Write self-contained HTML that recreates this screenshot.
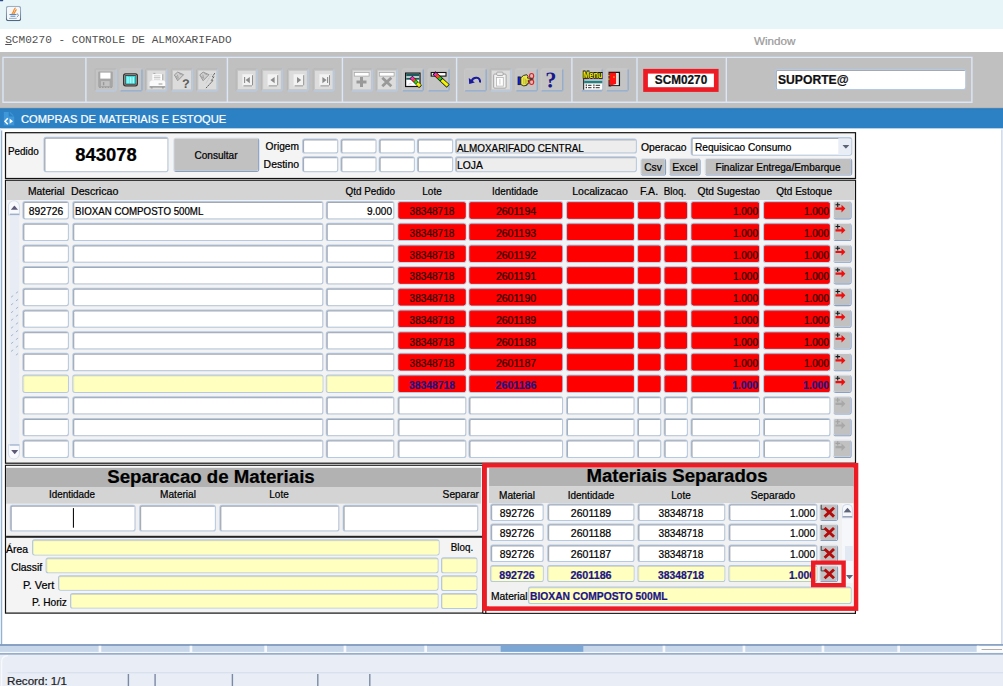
<!DOCTYPE html>
<html><head><meta charset="utf-8"><title>SCM0270</title>
<style>
html,body{margin:0;padding:0;}
body{width:1003px;height:686px;overflow:hidden;background:#fff;position:relative;font-family:"Liberation Sans",sans-serif;}
div,body>svg{position:absolute;box-sizing:border-box;}
body>svg{left:0;top:0;}
.t{height:20px;line-height:20px;white-space:nowrap;-webkit-text-stroke:0.22px currentColor;}
</style></head><body>
<svg width="1003" height="686" viewBox="0 0 1003 686">
<rect x="0" y="0" width="1003" height="29" fill="#e8f5f8"/>
<path d="M0 0H3.2V0.6A0.6 0.6 0 0 1 2.6 1.2H0V0Z" fill="#2a4a8a"/>
<svg x="5.8" y="5.8" width="15.4" height="15.4" viewBox="0 0 17 17"><defs><linearGradient id="jb" x1="0" y1="0" x2="0" y2="1"><stop offset="0" stop-color="#9db0c6"/><stop offset="1" stop-color="#4f6882"/></linearGradient></defs><rect x="0.6" y="0.6" width="15.8" height="15.8" rx="2.4" fill="#f7f7f7" stroke="url(#jb)" stroke-width="1.2"/><path d="M10.4 2.6C8 4.6 9.6 5.6 7 8.6M11.6 4.4C9.8 6 10.6 6.8 8.8 8.8" stroke="#ee8a2e" stroke-width="1.3" fill="none" stroke-linecap="round"/><path d="M4 9.6h7.8M5.2 11.5h5.4" stroke="#5a86b8" stroke-width="1.1"/><path d="M12.2 8.5l2 1.9-2 1.9" stroke="#5a86b8" stroke-width="1" fill="none"/><path d="M3.6 13.9h8.4" stroke="#7fa0c8" stroke-width="0.9"/></svg>
<rect x="0" y="29" width="1003" height="23" fill="#fff"/>
<rect x="0" y="52" width="1003" height="56.4" fill="#c0c0c0"/>
<rect x="0" y="107.4" width="1003" height="1.2" fill="#b0b0b2"/>
<path d="M3 57.4H971.9V102.2H3V57.4Z" fill="none" stroke="#dbe6f6" stroke-width="1.4"/>
<rect x="85.2" y="57" width="1.4" height="45.6" fill="#dbe6f6"/>
<rect x="226.7" y="57" width="1.4" height="45.6" fill="#dbe6f6"/>
<rect x="341.7" y="57" width="1.4" height="45.6" fill="#dbe6f6"/>
<rect x="455.9" y="57" width="1.4" height="45.6" fill="#dbe6f6"/>
<rect x="571.2" y="57" width="1.4" height="45.6" fill="#dbe6f6"/>
<rect x="636.3" y="57" width="1.4" height="45.6" fill="#dbe6f6"/>
<rect x="725.6" y="57" width="1.4" height="45.6" fill="#dbe6f6"/>
<path d="M97.1 68.5H114.2A2.5 2.5 0 0 1 116.7 71V89A2.5 2.5 0 0 1 114.2 91.5H97.1A2.5 2.5 0 0 1 94.6 89V71A2.5 2.5 0 0 1 97.1 68.5Z" fill="#c4c4c4"/>
<rect x="95.6" y="68.5" width="20.1" height="1" fill="#b3b3b3"/>
<rect x="94.6" y="69.5" width="1" height="21" fill="#b3b3b3"/>
<rect x="115.5" y="69.5" width="1.2" height="21" fill="#b7cbe6"/>
<rect x="95.6" y="90.3" width="20.1" height="1.2" fill="#b7cbe6"/>
<svg x="94.60" y="68.50" width="22.4" height="23" viewBox="0 0 22.4 23"><rect x="3.6" y="3.1" width="14.6" height="15.6" rx="1" fill="#a6a6a6"/><rect x="5.7" y="4.1" width="10.2" height="6" fill="#fff"/><rect x="6.4" y="12.6" width="8.6" height="5" fill="#c2c2c2"/><rect x="8.3" y="13.6" width="1.4" height="3.2" fill="#999"/><path d="M4.6 18.9h12.6" stroke="#8c8c8c" stroke-width="0.8" stroke-dasharray="1.6 1.2"/></svg>
<path d="M122.1 68.5H140.1A2.5 2.5 0 0 1 142.6 71V89A2.5 2.5 0 0 1 140.1 91.5H122.1A2.5 2.5 0 0 1 119.6 89V71A2.5 2.5 0 0 1 122.1 68.5Z" fill="#c4c4c4"/>
<rect x="120.6" y="68.5" width="21" height="1" fill="#c9c9c9"/>
<rect x="119.6" y="69.5" width="1" height="21" fill="#c9c9c9"/>
<rect x="141.3" y="69.5" width="1.3" height="21" fill="#8eabd0"/>
<rect x="120.6" y="90.2" width="21" height="1.3" fill="#8eabd0"/>
<svg x="119.60" y="68.50" width="22.4" height="23" viewBox="0 0 22.4 23"><rect x="3.4" y="4.7" width="15" height="13.2" rx="2.6" fill="#333"/><rect x="4.9" y="6.1" width="12" height="10.4" rx="1.4" fill="none" stroke="#b9a9a9" stroke-width="0.7"/><rect x="6" y="7.4" width="10" height="7.9" fill="#35dede"/><path d="M7.6 8v6.8M9.2 8.6v6.2M10.8 8.6v6.2M12.4 8.6v6.2M14 8.6v6.2" stroke="#d8ffff" stroke-width="0.8"/></svg>
<path d="M147.7 68.5H164.8A2.5 2.5 0 0 1 167.3 71V89A2.5 2.5 0 0 1 164.8 91.5H147.7A2.5 2.5 0 0 1 145.2 89V71A2.5 2.5 0 0 1 147.7 68.5Z" fill="#c4c4c4"/>
<rect x="146.2" y="68.5" width="20.1" height="1" fill="#b3b3b3"/>
<rect x="145.2" y="69.5" width="1" height="21" fill="#b3b3b3"/>
<rect x="166.1" y="69.5" width="1.2" height="21" fill="#b7cbe6"/>
<rect x="146.2" y="90.3" width="20.1" height="1.2" fill="#b7cbe6"/>
<rect x="147.4" y="70.6" width="18" height="18.8" fill="#dcdcdc"/>
<svg x="145.20" y="68.50" width="22.4" height="23" viewBox="0 0 22.4 23"><rect x="7.2" y="5.7" width="10.8" height="6.2" fill="#fff"/><path d="M17.6 5.7v6.4" stroke="#9a9a9a" stroke-width="1"/><path d="M8.6 7.4h6.6M8.6 9h6.6M8.6 10.6h6.6" stroke="#bdbdbd" stroke-width="0.8"/><path d="M8.2 4.9h2" stroke="#9a9a9a" stroke-width="0.8"/><path d="M6.2 12h12.6l1.2 1.6v4.4H4.4v-4.4z" fill="#fbfbfb"/><path d="M13.4 15.5h3.8" stroke="#9a9a9a" stroke-width="1"/><path d="M4.4 18.4h15.6" stroke="#8e8e8e" stroke-width="1.1"/><path d="M5.6 19.4h1.8M16.8 19.4h1.8" stroke="#8e8e8e" stroke-width="1"/></svg>
<path d="M173.3 68.5H190.4A2.5 2.5 0 0 1 192.9 71V89A2.5 2.5 0 0 1 190.4 91.5H173.3A2.5 2.5 0 0 1 170.8 89V71A2.5 2.5 0 0 1 173.3 68.5Z" fill="#c4c4c4"/>
<rect x="171.8" y="68.5" width="20.1" height="1" fill="#b3b3b3"/>
<rect x="170.8" y="69.5" width="1" height="21" fill="#b3b3b3"/>
<rect x="191.7" y="69.5" width="1.2" height="21" fill="#b7cbe6"/>
<rect x="171.8" y="90.3" width="20.1" height="1.2" fill="#b7cbe6"/>
<rect x="173" y="70.6" width="18" height="18.8" fill="#dcdcdc"/>
<svg x="170.80" y="68.50" width="22.4" height="23" viewBox="0 0 22.4 23"><path d="M3.6 6.4L6.9 3.6 12.8 6.2 6.9 12.2z" fill="#cfcfcf" stroke="#8e8e8e" stroke-width="0.9" stroke-linejoin="round"/><path d="M6.6 6.2l1 3.8M8.2 5l2.6 1.2M5.4 7.6l1.6 2.6" stroke="#9a9a9a" stroke-width="0.8" fill="none"/><text x="11.2" y="19.4" font-family="Liberation Sans, sans-serif" font-weight="bold" font-size="12.6" fill="#5c5c5c" transform="rotate(0.03)">?</text></svg>
<path d="M198.7 68.5H215.8A2.5 2.5 0 0 1 218.3 71V89A2.5 2.5 0 0 1 215.8 91.5H198.7A2.5 2.5 0 0 1 196.2 89V71A2.5 2.5 0 0 1 198.7 68.5Z" fill="#c4c4c4"/>
<rect x="197.2" y="68.5" width="20.1" height="1" fill="#b3b3b3"/>
<rect x="196.2" y="69.5" width="1" height="21" fill="#b3b3b3"/>
<rect x="217.1" y="69.5" width="1.2" height="21" fill="#b7cbe6"/>
<rect x="197.2" y="90.3" width="20.1" height="1.2" fill="#b7cbe6"/>
<rect x="198.4" y="70.6" width="18" height="18.8" fill="#dcdcdc"/>
<svg x="196.20" y="68.50" width="22.4" height="23" viewBox="0 0 22.4 23"><path d="M3.6 6.4L6.9 3.6 12.8 6.2 6.9 12.2z" fill="#cfcfcf" stroke="#8e8e8e" stroke-width="0.9" stroke-linejoin="round"/><path d="M6.6 6.2l1 3.8M8.2 5l2.6 1.2M5.4 7.6l1.6 2.6" stroke="#9a9a9a" stroke-width="0.8" fill="none"/><path d="M18.6 4.6l-2.4 3.6h1.6l-2.8 4h1.6l-6.8 7.4" fill="none" stroke="#5e5e5e" stroke-width="1" stroke-dasharray="2.2 0.7"/><path d="M15.4 5.4l-5.6 9.4" stroke="#bdbdbd" stroke-width="0.9" stroke-dasharray="1.5 1"/></svg>
<path d="M238.1 68.5H255A2.5 2.5 0 0 1 257.5 71V89A2.5 2.5 0 0 1 255 91.5H238.1A2.5 2.5 0 0 1 235.6 89V71A2.5 2.5 0 0 1 238.1 68.5Z" fill="#c4c4c4"/>
<rect x="236.6" y="68.5" width="19.9" height="1" fill="#b3b3b3"/>
<rect x="235.6" y="69.5" width="1" height="21" fill="#b3b3b3"/>
<rect x="256.3" y="69.5" width="1.2" height="21" fill="#b7cbe6"/>
<rect x="236.6" y="90.3" width="19.9" height="1.2" fill="#b7cbe6"/>
<rect x="238" y="70.8" width="17.6" height="18.4" fill="#dcdcdc"/>
<rect x="242.4" y="74.2" width="10.6" height="12.2" fill="#f2f2f2"/>
<rect x="252" y="75.2" width="1" height="10.2" fill="#8e8e8e"/>
<rect x="243.4" y="85.4" width="8.6" height="1" fill="#8e8e8e"/>
<svg x="235.60" y="68.50" width="22.4" height="23" viewBox="0 0 22.4 23"><path d="M9 8.6v6" stroke="#8c8c8c" stroke-width="1.1"/><path d="M14.2 8.4v6.4l-4.2-3.2z" fill="#8c8c8c"/></svg>
<path d="M263.3 68.5H280.2A2.5 2.5 0 0 1 282.7 71V89A2.5 2.5 0 0 1 280.2 91.5H263.3A2.5 2.5 0 0 1 260.8 89V71A2.5 2.5 0 0 1 263.3 68.5Z" fill="#c4c4c4"/>
<rect x="261.8" y="68.5" width="19.9" height="1" fill="#b3b3b3"/>
<rect x="260.8" y="69.5" width="1" height="21" fill="#b3b3b3"/>
<rect x="281.5" y="69.5" width="1.2" height="21" fill="#b7cbe6"/>
<rect x="261.8" y="90.3" width="19.9" height="1.2" fill="#b7cbe6"/>
<rect x="263.2" y="70.8" width="17.6" height="18.4" fill="#dcdcdc"/>
<rect x="267.6" y="74.2" width="10.6" height="12.2" fill="#f2f2f2"/>
<rect x="277.2" y="75.2" width="1" height="10.2" fill="#8e8e8e"/>
<rect x="268.6" y="85.4" width="8.6" height="1" fill="#8e8e8e"/>
<svg x="260.80" y="68.50" width="22.4" height="23" viewBox="0 0 22.4 23"><path d="M13.8 8.4v6.4l-4.2-3.2z" fill="#8c8c8c"/></svg>
<path d="M289.3 68.5H306.2A2.5 2.5 0 0 1 308.7 71V89A2.5 2.5 0 0 1 306.2 91.5H289.3A2.5 2.5 0 0 1 286.8 89V71A2.5 2.5 0 0 1 289.3 68.5Z" fill="#c4c4c4"/>
<rect x="287.8" y="68.5" width="19.9" height="1" fill="#b3b3b3"/>
<rect x="286.8" y="69.5" width="1" height="21" fill="#b3b3b3"/>
<rect x="307.5" y="69.5" width="1.2" height="21" fill="#b7cbe6"/>
<rect x="287.8" y="90.3" width="19.9" height="1.2" fill="#b7cbe6"/>
<rect x="289.2" y="70.8" width="17.6" height="18.4" fill="#dcdcdc"/>
<rect x="293.6" y="74.2" width="10.6" height="12.2" fill="#f2f2f2"/>
<rect x="303.2" y="75.2" width="1" height="10.2" fill="#8e8e8e"/>
<rect x="294.6" y="85.4" width="8.6" height="1" fill="#8e8e8e"/>
<svg x="286.80" y="68.50" width="22.4" height="23" viewBox="0 0 22.4 23"><path d="M10.2 8.4v6.4l4.2-3.2z" fill="#8c8c8c"/></svg>
<path d="M315.1 68.5H332A2.5 2.5 0 0 1 334.5 71V89A2.5 2.5 0 0 1 332 91.5H315.1A2.5 2.5 0 0 1 312.6 89V71A2.5 2.5 0 0 1 315.1 68.5Z" fill="#c4c4c4"/>
<rect x="313.6" y="68.5" width="19.9" height="1" fill="#b3b3b3"/>
<rect x="312.6" y="69.5" width="1" height="21" fill="#b3b3b3"/>
<rect x="333.3" y="69.5" width="1.2" height="21" fill="#b7cbe6"/>
<rect x="313.6" y="90.3" width="19.9" height="1.2" fill="#b7cbe6"/>
<rect x="315" y="70.8" width="17.6" height="18.4" fill="#dcdcdc"/>
<rect x="319.4" y="74.2" width="10.6" height="12.2" fill="#f2f2f2"/>
<rect x="329" y="75.2" width="1" height="10.2" fill="#8e8e8e"/>
<rect x="320.4" y="85.4" width="8.6" height="1" fill="#8e8e8e"/>
<svg x="312.60" y="68.50" width="22.4" height="23" viewBox="0 0 22.4 23"><path d="M15 8.6v6" stroke="#8c8c8c" stroke-width="1.1"/><path d="M9.8 8.4v6.4l4.2-3.2z" fill="#8c8c8c"/></svg>
<path d="M353.2 68.5H370.3A2.5 2.5 0 0 1 372.8 71V89A2.5 2.5 0 0 1 370.3 91.5H353.2A2.5 2.5 0 0 1 350.7 89V71A2.5 2.5 0 0 1 353.2 68.5Z" fill="#c4c4c4"/>
<rect x="351.7" y="68.5" width="20.1" height="1" fill="#b3b3b3"/>
<rect x="350.7" y="69.5" width="1" height="21" fill="#b3b3b3"/>
<rect x="371.6" y="69.5" width="1.2" height="21" fill="#b7cbe6"/>
<rect x="351.7" y="90.3" width="20.1" height="1.2" fill="#b7cbe6"/>
<rect x="352.9" y="70.6" width="18" height="18.8" fill="#dcdcdc"/>
<svg x="350.70" y="68.50" width="22.4" height="23" viewBox="0 0 22.4 23"><rect x="3.6" y="4" width="14.8" height="3.6" fill="#fff" stroke="#a8a8a8" stroke-width="0.8"/><path d="M10.8 8.4v10M5.8 13.4h10" stroke="#999" stroke-width="3"/></svg>
<path d="M378.2 68.5H395.3A2.5 2.5 0 0 1 397.8 71V89A2.5 2.5 0 0 1 395.3 91.5H378.2A2.5 2.5 0 0 1 375.7 89V71A2.5 2.5 0 0 1 378.2 68.5Z" fill="#c4c4c4"/>
<rect x="376.7" y="68.5" width="20.1" height="1" fill="#b3b3b3"/>
<rect x="375.7" y="69.5" width="1" height="21" fill="#b3b3b3"/>
<rect x="396.6" y="69.5" width="1.2" height="21" fill="#b7cbe6"/>
<rect x="376.7" y="90.3" width="20.1" height="1.2" fill="#b7cbe6"/>
<rect x="377.9" y="70.6" width="18" height="18.8" fill="#dcdcdc"/>
<svg x="375.70" y="68.50" width="22.4" height="23" viewBox="0 0 22.4 23"><rect x="3.6" y="4" width="14.8" height="3.6" fill="#fff" stroke="#a8a8a8" stroke-width="0.8"/><path d="M6.6 9.2l9 8.6M15.6 9.2l-9 8.6" stroke="#999" stroke-width="2.8"/></svg>
<path d="M404.3 68.5H421.4A2.5 2.5 0 0 1 423.9 71V89A2.5 2.5 0 0 1 421.4 91.5H404.3A2.5 2.5 0 0 1 401.8 89V71A2.5 2.5 0 0 1 404.3 68.5Z" fill="#c4c4c4"/>
<rect x="402.8" y="68.5" width="20.1" height="1" fill="#c9c9c9"/>
<rect x="401.8" y="69.5" width="1" height="21" fill="#c9c9c9"/>
<rect x="422.6" y="69.5" width="1.3" height="21" fill="#8eabd0"/>
<rect x="402.8" y="90.2" width="20.1" height="1.3" fill="#8eabd0"/>
<svg x="401.80" y="68.50" width="22.4" height="23" viewBox="0 0 22.4 23"><rect x="3.8" y="4.6" width="14.4" height="13.4" fill="#fff" stroke="#111" stroke-width="1.2"/><rect x="4.4" y="5.2" width="13.2" height="2.6" fill="#1c5c5c"/><rect x="4.4" y="9.2" width="13.2" height="2" fill="#1c5c5c"/><path d="M6.4 16.4a2.4 2.4 0 014 -1.4" fill="#ddd"/><g transform="translate(9.2,8.6) rotate(45)"><rect x="0" y="-2" width="13.4" height="4" fill="#111"/><rect x="0.6" y="-1.5" width="2.6" height="3" fill="#ff2bd0"/><rect x="3.2" y="-1.5" width="2.4" height="3" fill="#ff4a1e"/><rect x="5.6" y="-1.5" width="2.6" height="3" fill="#18d818"/><rect x="8.6" y="-1.5" width="4.2" height="3" fill="#f4f400"/></g></svg>
<path d="M430.1 68.5H447.2A2.5 2.5 0 0 1 449.7 71V89A2.5 2.5 0 0 1 447.2 91.5H430.1A2.5 2.5 0 0 1 427.6 89V71A2.5 2.5 0 0 1 430.1 68.5Z" fill="#c4c4c4"/>
<rect x="428.6" y="68.5" width="20.1" height="1" fill="#c9c9c9"/>
<rect x="427.6" y="69.5" width="1" height="21" fill="#c9c9c9"/>
<rect x="448.4" y="69.5" width="1.3" height="21" fill="#8eabd0"/>
<rect x="428.6" y="90.2" width="20.1" height="1.3" fill="#8eabd0"/>
<svg x="427.60" y="68.50" width="22.4" height="23" viewBox="0 0 22.4 23"><rect x="3.6" y="4" width="14.8" height="3.6" fill="#fff" stroke="#111" stroke-width="1.1"/><g transform="translate(6.4,4.4) rotate(43)"><rect x="0" y="-2.1" width="19.4" height="4.2" fill="#111"/><rect x="1" y="-1.5" width="2.4" height="3" fill="#ff2bd0"/><rect x="3.4" y="-1.5" width="3.4" height="3" fill="#ff4a1e"/><rect x="6.8" y="-1.5" width="2.8" height="3" fill="#18d818"/><rect x="10.4" y="-1.5" width="8.4" height="3" fill="#f4f400"/></g></svg>
<path d="M466.7 68.5H484.3A2.5 2.5 0 0 1 486.8 71V89A2.5 2.5 0 0 1 484.3 91.5H466.7A2.5 2.5 0 0 1 464.2 89V71A2.5 2.5 0 0 1 466.7 68.5Z" fill="#c4c4c4"/>
<rect x="465.2" y="68.5" width="20.6" height="1" fill="#c9c9c9"/>
<rect x="464.2" y="69.5" width="1" height="21" fill="#c9c9c9"/>
<rect x="485.5" y="69.5" width="1.3" height="21" fill="#8eabd0"/>
<rect x="465.2" y="90.2" width="20.6" height="1.3" fill="#8eabd0"/>
<svg x="464.20" y="68.50" width="22.4" height="23" viewBox="0 0 22.4 23"><path d="M7.4 12.6c1.6-4.8 9.4-4.6 8.4 1.4" fill="none" stroke="#1a1a9c" stroke-width="2"/><path d="M4.6 9.6l.4 6 5.6-1.6z" fill="#1a1a9c"/></svg>
<path d="M492.2 68.5H509.3A2.5 2.5 0 0 1 511.8 71V89A2.5 2.5 0 0 1 509.3 91.5H492.2A2.5 2.5 0 0 1 489.7 89V71A2.5 2.5 0 0 1 492.2 68.5Z" fill="#c4c4c4"/>
<rect x="490.7" y="68.5" width="20.1" height="1" fill="#b3b3b3"/>
<rect x="489.7" y="69.5" width="1" height="21" fill="#b3b3b3"/>
<rect x="510.6" y="69.5" width="1.2" height="21" fill="#b7cbe6"/>
<rect x="490.7" y="90.3" width="20.1" height="1.2" fill="#b7cbe6"/>
<rect x="491.9" y="70.6" width="18" height="18.8" fill="#dcdcdc"/>
<svg x="489.70" y="68.50" width="22.4" height="23" viewBox="0 0 22.4 23"><rect x="4" y="5.6" width="12.4" height="14" rx="1" fill="#f2f2f2" stroke="#9c9c9c" stroke-width="0.9"/><rect x="7" y="3.6" width="6.4" height="3.4" rx="1" fill="#e6e6e6" stroke="#9c9c9c" stroke-width="0.8"/><rect x="6.8" y="9" width="6.8" height="8.6" fill="#fff" stroke="#b4b4b4" stroke-width="0.8"/><path d="M10.2 10.4v5.6" stroke="#c4c4c4" stroke-width="0.9"/></svg>
<path d="M517.9 68.5H535.4A2.5 2.5 0 0 1 537.9 71V89A2.5 2.5 0 0 1 535.4 91.5H517.9A2.5 2.5 0 0 1 515.4 89V71A2.5 2.5 0 0 1 517.9 68.5Z" fill="#c4c4c4"/>
<rect x="516.4" y="68.5" width="20.5" height="1" fill="#c9c9c9"/>
<rect x="515.4" y="69.5" width="1" height="21" fill="#c9c9c9"/>
<rect x="536.6" y="69.5" width="1.3" height="21" fill="#8eabd0"/>
<rect x="516.4" y="90.2" width="20.5" height="1.3" fill="#8eabd0"/>
<svg x="515.40" y="68.50" width="22.4" height="23" viewBox="0 0 22.4 23"><rect x="2.6" y="8.4" width="2.6" height="7.8" fill="#1020e8" stroke="#111" stroke-width="0.7"/><path d="M5.4 9.4l2.6-2.4 3.4-.8 1.2 1.8-.6 1.6 4 .2.2 1.6-3.4.4v1.2h1v1.4h-1.2v1.2h-1.2v1.2l-3 .6-3-1.4z" fill="#eeea44" stroke="#222" stroke-width="0.9" stroke-linejoin="round"/><path d="M8.4 9v6.6M10 10.2v5.6M11.4 11.2v4" stroke="#8c8a30" stroke-width="0.5"/><ellipse cx="16.2" cy="7.4" rx="2.1" ry="2.4" fill="none" stroke="#f01818" stroke-width="1.1"/><ellipse cx="16.2" cy="13.6" rx="2.1" ry="2.4" fill="none" stroke="#f01818" stroke-width="1.1"/><path d="M14.4 10.5h3.6" stroke="#4a3030" stroke-width="1.3"/></svg>
<path d="M543.1 68.5H560.9A2.5 2.5 0 0 1 563.4 71V89A2.5 2.5 0 0 1 560.9 91.5H543.1A2.5 2.5 0 0 1 540.6 89V71A2.5 2.5 0 0 1 543.1 68.5Z" fill="#c4c4c4"/>
<rect x="541.6" y="68.5" width="20.8" height="1" fill="#c9c9c9"/>
<rect x="540.6" y="69.5" width="1" height="21" fill="#c9c9c9"/>
<rect x="562.1" y="69.5" width="1.3" height="21" fill="#8eabd0"/>
<rect x="541.6" y="90.2" width="20.8" height="1.3" fill="#8eabd0"/>
<svg x="540.60" y="68.50" width="22.4" height="23" viewBox="0 0 22.4 23"><text x="4.6" y="18.8" font-family="Liberation Serif, serif" font-weight="bold" font-size="22.4" fill="#18188c" transform="rotate(0.03)">?</text></svg>
<path d="M583.2 68.5H600.3A2.5 2.5 0 0 1 602.8 71V89A2.5 2.5 0 0 1 600.3 91.5H583.2A2.5 2.5 0 0 1 580.7 89V71A2.5 2.5 0 0 1 583.2 68.5Z" fill="#c4c4c4"/>
<rect x="581.7" y="68.5" width="20.1" height="1" fill="#c9c9c9"/>
<rect x="580.7" y="69.5" width="1" height="21" fill="#c9c9c9"/>
<rect x="601.5" y="69.5" width="1.3" height="21" fill="#8eabd0"/>
<rect x="581.7" y="90.2" width="20.1" height="1.3" fill="#8eabd0"/>
<svg x="580.70" y="68.50" width="22.4" height="23" viewBox="0 0 22.4 23"><rect x="2.6" y="11" width="19" height="10" fill="#fff"/><path d="M3 10.2v11" stroke="#111" stroke-width="1"/><rect x="3.4" y="12.2" width="18.2" height="2.3" fill="#078c8c"/><path d="M3.4 11.4h18" stroke="#b0506a" stroke-width="0.6"/><path d="M3.4 15h18" stroke="#c08080" stroke-width="0.5"/><path d="M5 16.6h1.2M5 19h1.2M12.6 16.6h1.2M12.6 19h1.2" stroke="#111" stroke-width="1.3"/><path d="M7.4 16.8h3.4M7.4 19.2h3.4M15 16.8h4.4M15 19.2h4" stroke="#111" stroke-width="0.9"/><text x="2.4" y="9.8" font-family="Liberation Sans, sans-serif" font-weight="bold" font-size="9.6" fill="#f4f400" stroke="#111" stroke-width="1.7" paint-order="stroke" textLength="19.4" lengthAdjust="spacingAndGlyphs" transform="rotate(0.03)">Menu</text></svg>
<path d="M608.3 68.5H626.3A2.5 2.5 0 0 1 628.8 71V89A2.5 2.5 0 0 1 626.3 91.5H608.3A2.5 2.5 0 0 1 605.8 89V71A2.5 2.5 0 0 1 608.3 68.5Z" fill="#c4c4c4"/>
<rect x="606.8" y="68.5" width="21" height="1" fill="#c9c9c9"/>
<rect x="605.8" y="69.5" width="1" height="21" fill="#c9c9c9"/>
<rect x="627.5" y="69.5" width="1.3" height="21" fill="#8eabd0"/>
<rect x="606.8" y="90.2" width="21" height="1.3" fill="#8eabd0"/>
<svg x="605.80" y="68.50" width="22.4" height="23" viewBox="0 0 22.4 23"><rect x="3.4" y="3.9" width="10.2" height="13.4" fill="#fff" stroke="#111" stroke-width="1.3"/><path d="M11 5v11" stroke="#dadada" stroke-width="2"/><path d="M3.6 4.2h6.6v11.2l-3.4 1.2h-3.2z" fill="#ff1010"/><rect x="7.4" y="7.8" width="1.5" height="1.5" fill="#ff9a18"/><path d="M2.4 7h1.2M2.4 10.6h1.2" stroke="#c8d818" stroke-width="1.1"/><path d="M5.4 18.3h9" stroke="#d2d2d2" stroke-width="1"/></svg>
<rect x="643.2" y="68.9" width="75.4" height="23" fill="#ed1c24"/>
<rect x="647.9" y="73.6" width="66" height="13.6" fill="#fff"/>
<path d="M777.5 69H963.7A2.6 2.6 0 0 1 966.3 71.6V87.3A2.6 2.6 0 0 1 963.7 89.9H777.5A2.6 2.6 0 0 1 774.9 87.3V71.6A2.6 2.6 0 0 1 777.5 69Z" fill="#b4c9e4"/>
<path d="M777.6 70H963.6A1.7 1.7 0 0 1 965.3 71.7V87.2A1.7 1.7 0 0 1 963.6 88.9H777.6A1.7 1.7 0 0 1 775.9 87.2V71.7A1.7 1.7 0 0 1 777.6 70Z" fill="#a4a8b0"/>
<path d="M775.9 71H965.3V87.2A1.7 1.7 0 0 1 963.6 88.9H777.6A1.7 1.7 0 0 1 775.9 87.2V71Z" fill="#a9adb5"/>
<path d="M777.7 71H965.3V87.2A1.7 1.7 0 0 1 963.6 88.9H777.7A0.8 0.8 0 0 1 776.9 88.1V71.8A0.8 0.8 0 0 1 777.7 71Z" fill="#ffffff"/>
<rect x="0" y="108.4" width="1003" height="20.2" fill="#2c81c5"/>
<rect x="0" y="108.4" width="1003" height="0.9" fill="#2a76b4"/>
<svg x="3.4" y="111.6" width="11.4" height="14.2" viewBox="0 0 11.4 14.2"><path d="M0.3 0.3h5v4.6h5.6V13.9H0.3z" fill="#3f98da"/><path d="M6.4 0.8l3.6 3.4" stroke="#4b9fe0" stroke-width="0.9" fill="none"/><path d="M4.4 6.6L1.6 9.6l2.8 3" stroke="#fff" stroke-width="1.5" fill="none"/><path d="M6.2 7v5.2l3.4-2.6z" fill="#fff"/></svg>
<rect x="0" y="128.6" width="1003" height="516.4" fill="#fff"/>
<rect x="0" y="128.6" width="1.2" height="516.4" fill="#e6eef7"/>
<rect x="1.2" y="130.5" width="1" height="514.5" fill="#7f9ec6"/>
<rect x="2.2" y="130.5" width="0.8" height="514.5" fill="#e8eff8"/>
<rect x="1001.3" y="129.5" width="1.2" height="514.7" fill="#c0cee0"/>
<rect x="4.9" y="132.1" width="851.2" height="47" fill="#111"/>
<rect x="6.1" y="133.3" width="848.8" height="44.6" fill="#f4f4f4"/>
<path d="M46.1 136.7H165.9A2.6 2.6 0 0 1 168.5 139.3V169.6A2.6 2.6 0 0 1 165.9 172.2H46.1A2.6 2.6 0 0 1 43.5 169.6V139.3A2.6 2.6 0 0 1 46.1 136.7Z" fill="#b4c9e4"/>
<path d="M46.2 137.7H165.8A1.7 1.7 0 0 1 167.5 139.4V169.5A1.7 1.7 0 0 1 165.8 171.2H46.2A1.7 1.7 0 0 1 44.5 169.5V139.4A1.7 1.7 0 0 1 46.2 137.7Z" fill="#a4a8b0"/>
<path d="M44.5 138.7H167.5V169.5A1.7 1.7 0 0 1 165.8 171.2H46.2A1.7 1.7 0 0 1 44.5 169.5V138.7Z" fill="#a9adb5"/>
<path d="M46.3 138.7H167.5V169.5A1.7 1.7 0 0 1 165.8 171.2H46.3A0.8 0.8 0 0 1 45.5 170.4V139.5A0.8 0.8 0 0 1 46.3 138.7Z" fill="#ffffff"/>
<path d="M176.1 137.5H256.2A3 3 0 0 1 259.2 140.5V168.9A3 3 0 0 1 256.2 171.9H176.1A3 3 0 0 1 173.1 168.9V140.5A3 3 0 0 1 176.1 137.5Z" fill="#dfe7f2"/>
<path d="M176.3 138.1H256.6A2.6 2.6 0 0 1 259.2 140.7V169.3A2.6 2.6 0 0 1 256.6 171.9H176.3A2.6 2.6 0 0 1 173.7 169.3V140.7A2.6 2.6 0 0 1 176.3 138.1Z" fill="#86a0c6"/>
<path d="M175.9 137.7H256.5A1.6 1.6 0 0 1 258.1 139.3V170.2A0.6 0.6 0 0 1 257.5 170.8H174.9A1.6 1.6 0 0 1 173.3 169.2V140.3A2.6 2.6 0 0 1 175.9 137.7Z" fill="#e9eef6"/>
<path d="M175.6 138.6H256.6A1.4 1.4 0 0 1 258 140V169.3A1.4 1.4 0 0 1 256.6 170.7H175.6A1.4 1.4 0 0 1 174.2 169.3V140A1.4 1.4 0 0 1 175.6 138.6Z" fill="#c1c1c1"/>
<path d="M304.7 138.6H335.7A2.6 2.6 0 0 1 338.3 141.2V150.9A2.6 2.6 0 0 1 335.7 153.5H304.7A2.6 2.6 0 0 1 302.1 150.9V141.2A2.6 2.6 0 0 1 304.7 138.6Z" fill="#b4c9e4"/>
<path d="M304.8 139.6H335.6A1.7 1.7 0 0 1 337.3 141.3V150.8A1.7 1.7 0 0 1 335.6 152.5H304.8A1.7 1.7 0 0 1 303.1 150.8V141.3A1.7 1.7 0 0 1 304.8 139.6Z" fill="#a4a8b0"/>
<path d="M303.1 140.6H337.3V150.8A1.7 1.7 0 0 1 335.6 152.5H304.8A1.7 1.7 0 0 1 303.1 150.8V140.6Z" fill="#a9adb5"/>
<path d="M304.9 140.6H337.3V150.8A1.7 1.7 0 0 1 335.6 152.5H304.9A0.8 0.8 0 0 1 304.1 151.7V141.4A0.8 0.8 0 0 1 304.9 140.6Z" fill="#ffffff"/>
<path d="M304.7 156.3H335.7A2.6 2.6 0 0 1 338.3 158.9V169.6A2.6 2.6 0 0 1 335.7 172.2H304.7A2.6 2.6 0 0 1 302.1 169.6V158.9A2.6 2.6 0 0 1 304.7 156.3Z" fill="#b4c9e4"/>
<path d="M304.8 157.3H335.6A1.7 1.7 0 0 1 337.3 159V169.5A1.7 1.7 0 0 1 335.6 171.2H304.8A1.7 1.7 0 0 1 303.1 169.5V159A1.7 1.7 0 0 1 304.8 157.3Z" fill="#a4a8b0"/>
<path d="M303.1 158.3H337.3V169.5A1.7 1.7 0 0 1 335.6 171.2H304.8A1.7 1.7 0 0 1 303.1 169.5V158.3Z" fill="#a9adb5"/>
<path d="M304.9 158.3H337.3V169.5A1.7 1.7 0 0 1 335.6 171.2H304.9A0.8 0.8 0 0 1 304.1 170.4V159.1A0.8 0.8 0 0 1 304.9 158.3Z" fill="#ffffff"/>
<path d="M343 138.6H374A2.6 2.6 0 0 1 376.6 141.2V150.9A2.6 2.6 0 0 1 374 153.5H343A2.6 2.6 0 0 1 340.4 150.9V141.2A2.6 2.6 0 0 1 343 138.6Z" fill="#b4c9e4"/>
<path d="M343.1 139.6H373.9A1.7 1.7 0 0 1 375.6 141.3V150.8A1.7 1.7 0 0 1 373.9 152.5H343.1A1.7 1.7 0 0 1 341.4 150.8V141.3A1.7 1.7 0 0 1 343.1 139.6Z" fill="#a4a8b0"/>
<path d="M341.4 140.6H375.6V150.8A1.7 1.7 0 0 1 373.9 152.5H343.1A1.7 1.7 0 0 1 341.4 150.8V140.6Z" fill="#a9adb5"/>
<path d="M343.2 140.6H375.6V150.8A1.7 1.7 0 0 1 373.9 152.5H343.2A0.8 0.8 0 0 1 342.4 151.7V141.4A0.8 0.8 0 0 1 343.2 140.6Z" fill="#ffffff"/>
<path d="M343 156.3H374A2.6 2.6 0 0 1 376.6 158.9V169.6A2.6 2.6 0 0 1 374 172.2H343A2.6 2.6 0 0 1 340.4 169.6V158.9A2.6 2.6 0 0 1 343 156.3Z" fill="#b4c9e4"/>
<path d="M343.1 157.3H373.9A1.7 1.7 0 0 1 375.6 159V169.5A1.7 1.7 0 0 1 373.9 171.2H343.1A1.7 1.7 0 0 1 341.4 169.5V159A1.7 1.7 0 0 1 343.1 157.3Z" fill="#a4a8b0"/>
<path d="M341.4 158.3H375.6V169.5A1.7 1.7 0 0 1 373.9 171.2H343.1A1.7 1.7 0 0 1 341.4 169.5V158.3Z" fill="#a9adb5"/>
<path d="M343.2 158.3H375.6V169.5A1.7 1.7 0 0 1 373.9 171.2H343.2A0.8 0.8 0 0 1 342.4 170.4V159.1A0.8 0.8 0 0 1 343.2 158.3Z" fill="#ffffff"/>
<path d="M381.3 138.6H412.3A2.6 2.6 0 0 1 414.9 141.2V150.9A2.6 2.6 0 0 1 412.3 153.5H381.3A2.6 2.6 0 0 1 378.7 150.9V141.2A2.6 2.6 0 0 1 381.3 138.6Z" fill="#b4c9e4"/>
<path d="M381.4 139.6H412.2A1.7 1.7 0 0 1 413.9 141.3V150.8A1.7 1.7 0 0 1 412.2 152.5H381.4A1.7 1.7 0 0 1 379.7 150.8V141.3A1.7 1.7 0 0 1 381.4 139.6Z" fill="#a4a8b0"/>
<path d="M379.7 140.6H413.9V150.8A1.7 1.7 0 0 1 412.2 152.5H381.4A1.7 1.7 0 0 1 379.7 150.8V140.6Z" fill="#a9adb5"/>
<path d="M381.5 140.6H413.9V150.8A1.7 1.7 0 0 1 412.2 152.5H381.5A0.8 0.8 0 0 1 380.7 151.7V141.4A0.8 0.8 0 0 1 381.5 140.6Z" fill="#ffffff"/>
<path d="M381.3 156.3H412.3A2.6 2.6 0 0 1 414.9 158.9V169.6A2.6 2.6 0 0 1 412.3 172.2H381.3A2.6 2.6 0 0 1 378.7 169.6V158.9A2.6 2.6 0 0 1 381.3 156.3Z" fill="#b4c9e4"/>
<path d="M381.4 157.3H412.2A1.7 1.7 0 0 1 413.9 159V169.5A1.7 1.7 0 0 1 412.2 171.2H381.4A1.7 1.7 0 0 1 379.7 169.5V159A1.7 1.7 0 0 1 381.4 157.3Z" fill="#a4a8b0"/>
<path d="M379.7 158.3H413.9V169.5A1.7 1.7 0 0 1 412.2 171.2H381.4A1.7 1.7 0 0 1 379.7 169.5V158.3Z" fill="#a9adb5"/>
<path d="M381.5 158.3H413.9V169.5A1.7 1.7 0 0 1 412.2 171.2H381.5A0.8 0.8 0 0 1 380.7 170.4V159.1A0.8 0.8 0 0 1 381.5 158.3Z" fill="#ffffff"/>
<path d="M419.5 138.6H450.6A2.6 2.6 0 0 1 453.2 141.2V150.9A2.6 2.6 0 0 1 450.6 153.5H419.5A2.6 2.6 0 0 1 416.9 150.9V141.2A2.6 2.6 0 0 1 419.5 138.6Z" fill="#b4c9e4"/>
<path d="M419.6 139.6H450.5A1.7 1.7 0 0 1 452.2 141.3V150.8A1.7 1.7 0 0 1 450.5 152.5H419.6A1.7 1.7 0 0 1 417.9 150.8V141.3A1.7 1.7 0 0 1 419.6 139.6Z" fill="#a4a8b0"/>
<path d="M417.9 140.6H452.2V150.8A1.7 1.7 0 0 1 450.5 152.5H419.6A1.7 1.7 0 0 1 417.9 150.8V140.6Z" fill="#a9adb5"/>
<path d="M419.7 140.6H452.2V150.8A1.7 1.7 0 0 1 450.5 152.5H419.7A0.8 0.8 0 0 1 418.9 151.7V141.4A0.8 0.8 0 0 1 419.7 140.6Z" fill="#ffffff"/>
<path d="M419.5 156.3H450.6A2.6 2.6 0 0 1 453.2 158.9V169.6A2.6 2.6 0 0 1 450.6 172.2H419.5A2.6 2.6 0 0 1 416.9 169.6V158.9A2.6 2.6 0 0 1 419.5 156.3Z" fill="#b4c9e4"/>
<path d="M419.6 157.3H450.5A1.7 1.7 0 0 1 452.2 159V169.5A1.7 1.7 0 0 1 450.5 171.2H419.6A1.7 1.7 0 0 1 417.9 169.5V159A1.7 1.7 0 0 1 419.6 157.3Z" fill="#a4a8b0"/>
<path d="M417.9 158.3H452.2V169.5A1.7 1.7 0 0 1 450.5 171.2H419.6A1.7 1.7 0 0 1 417.9 169.5V158.3Z" fill="#a9adb5"/>
<path d="M419.7 158.3H452.2V169.5A1.7 1.7 0 0 1 450.5 171.2H419.7A0.8 0.8 0 0 1 418.9 170.4V159.1A0.8 0.8 0 0 1 419.7 158.3Z" fill="#ffffff"/>
<path d="M457.6 138.6H634.3A2.6 2.6 0 0 1 636.9 141.2V150.9A2.6 2.6 0 0 1 634.3 153.5H457.6A2.6 2.6 0 0 1 455 150.9V141.2A2.6 2.6 0 0 1 457.6 138.6Z" fill="#b4c9e4"/>
<path d="M457.7 139.6H634.2A1.7 1.7 0 0 1 635.9 141.3V150.8A1.7 1.7 0 0 1 634.2 152.5H457.7A1.7 1.7 0 0 1 456 150.8V141.3A1.7 1.7 0 0 1 457.7 139.6Z" fill="#b2b5bb"/>
<path d="M456 140.6H635.9V150.8A1.7 1.7 0 0 1 634.2 152.5H457.7A1.7 1.7 0 0 1 456 150.8V140.6Z" fill="#b8bbc0"/>
<path d="M457.8 140.6H635.9V150.8A1.7 1.7 0 0 1 634.2 152.5H457.8A0.8 0.8 0 0 1 457 151.7V141.4A0.8 0.8 0 0 1 457.8 140.6Z" fill="#ededed"/>
<path d="M457.6 156.3H634.3A2.6 2.6 0 0 1 636.9 158.9V169.6A2.6 2.6 0 0 1 634.3 172.2H457.6A2.6 2.6 0 0 1 455 169.6V158.9A2.6 2.6 0 0 1 457.6 156.3Z" fill="#b4c9e4"/>
<path d="M457.7 157.3H634.2A1.7 1.7 0 0 1 635.9 159V169.5A1.7 1.7 0 0 1 634.2 171.2H457.7A1.7 1.7 0 0 1 456 169.5V159A1.7 1.7 0 0 1 457.7 157.3Z" fill="#b2b5bb"/>
<path d="M456 158.3H635.9V169.5A1.7 1.7 0 0 1 634.2 171.2H457.7A1.7 1.7 0 0 1 456 169.5V158.3Z" fill="#b8bbc0"/>
<path d="M457.8 158.3H635.9V169.5A1.7 1.7 0 0 1 634.2 171.2H457.8A0.8 0.8 0 0 1 457 170.4V159.1A0.8 0.8 0 0 1 457.8 158.3Z" fill="#ededed"/>
<path d="M693.3 137H849.6A2.6 2.6 0 0 1 852.2 139.6V153.1A2.6 2.6 0 0 1 849.6 155.7H693.3A2.6 2.6 0 0 1 690.7 153.1V139.6A2.6 2.6 0 0 1 693.3 137Z" fill="#b4c9e4"/>
<path d="M693.4 138H849.5A1.7 1.7 0 0 1 851.2 139.7V153A1.7 1.7 0 0 1 849.5 154.7H693.4A1.7 1.7 0 0 1 691.7 153V139.7A1.7 1.7 0 0 1 693.4 138Z" fill="#a4a8b0"/>
<path d="M691.7 139H851.2V153A1.7 1.7 0 0 1 849.5 154.7H693.4A1.7 1.7 0 0 1 691.7 153V139Z" fill="#a9adb5"/>
<path d="M693.5 139H851.2V153A1.7 1.7 0 0 1 849.5 154.7H693.5A0.8 0.8 0 0 1 692.7 153.9V139.8A0.8 0.8 0 0 1 693.5 139Z" fill="#ffffff"/>
<path d="M838.3 138.3H849.2A2 2 0 0 1 851.2 140.3V152.8A2 2 0 0 1 849.2 154.8H838.3V138.3Z" fill="#e9eef6"/>
<svg x="842.2" y="144.8" width="7.4" height="4" viewBox="0 0 8 4.4"><path d="M0.2 0.2h7.6L4 4.3z" fill="#5d6478"/></svg>
<path d="M643.2 158H663.1A3 3 0 0 1 666.1 161V172.6A3 3 0 0 1 663.1 175.6H643.2A3 3 0 0 1 640.2 172.6V161A3 3 0 0 1 643.2 158Z" fill="#dfe7f2"/>
<path d="M643.4 158.6H663.5A2.6 2.6 0 0 1 666.1 161.2V173A2.6 2.6 0 0 1 663.5 175.6H643.4A2.6 2.6 0 0 1 640.8 173V161.2A2.6 2.6 0 0 1 643.4 158.6Z" fill="#86a0c6"/>
<path d="M643 158.2H663.4A1.6 1.6 0 0 1 665 159.8V173.9A0.6 0.6 0 0 1 664.4 174.5H642A1.6 1.6 0 0 1 640.4 172.9V160.8A2.6 2.6 0 0 1 643 158.2Z" fill="#e9eef6"/>
<path d="M642.7 159.1H663.5A1.4 1.4 0 0 1 664.9 160.5V173A1.4 1.4 0 0 1 663.5 174.4H642.7A1.4 1.4 0 0 1 641.3 173V160.5A1.4 1.4 0 0 1 642.7 159.1Z" fill="#c1c1c1"/>
<path d="M671.7 158H697.6A3 3 0 0 1 700.6 161V172.6A3 3 0 0 1 697.6 175.6H671.7A3 3 0 0 1 668.7 172.6V161A3 3 0 0 1 671.7 158Z" fill="#dfe7f2"/>
<path d="M671.9 158.6H698A2.6 2.6 0 0 1 700.6 161.2V173A2.6 2.6 0 0 1 698 175.6H671.9A2.6 2.6 0 0 1 669.3 173V161.2A2.6 2.6 0 0 1 671.9 158.6Z" fill="#86a0c6"/>
<path d="M671.5 158.2H697.9A1.6 1.6 0 0 1 699.5 159.8V173.9A0.6 0.6 0 0 1 698.9 174.5H670.5A1.6 1.6 0 0 1 668.9 172.9V160.8A2.6 2.6 0 0 1 671.5 158.2Z" fill="#e9eef6"/>
<path d="M671.2 159.1H698A1.4 1.4 0 0 1 699.4 160.5V173A1.4 1.4 0 0 1 698 174.4H671.2A1.4 1.4 0 0 1 669.8 173V160.5A1.4 1.4 0 0 1 671.2 159.1Z" fill="#c1c1c1"/>
<path d="M707.5 158H849.2A3 3 0 0 1 852.2 161V172.6A3 3 0 0 1 849.2 175.6H707.5A3 3 0 0 1 704.5 172.6V161A3 3 0 0 1 707.5 158Z" fill="#dfe7f2"/>
<path d="M707.7 158.6H849.6A2.6 2.6 0 0 1 852.2 161.2V173A2.6 2.6 0 0 1 849.6 175.6H707.7A2.6 2.6 0 0 1 705.1 173V161.2A2.6 2.6 0 0 1 707.7 158.6Z" fill="#86a0c6"/>
<path d="M707.3 158.2H849.5A1.6 1.6 0 0 1 851.1 159.8V173.9A0.6 0.6 0 0 1 850.5 174.5H706.3A1.6 1.6 0 0 1 704.7 172.9V160.8A2.6 2.6 0 0 1 707.3 158.2Z" fill="#e9eef6"/>
<path d="M707 159.1H849.6A1.4 1.4 0 0 1 851 160.5V173A1.4 1.4 0 0 1 849.6 174.4H707A1.4 1.4 0 0 1 705.6 173V160.5A1.4 1.4 0 0 1 707 159.1Z" fill="#c1c1c1"/>
<rect x="4.9" y="179.7" width="851.2" height="284.1" fill="#111"/>
<rect x="6.1" y="180.9" width="848.8" height="281.7" fill="#f3f3f3"/>
<rect x="6.1" y="180.9" width="848.8" height="19.1" fill="#d4d4d4"/>
<rect x="9.8" y="206" width="9.5" height="246" fill="#e8edf5"/>
<path d="M13.9 200.3H13.9A6 6 0 0 1 19.9 206.3V215.6H7.9V206.3A6 6 0 0 1 13.9 200.3Z" fill="#d3deec"/>
<path d="M13.9 201.3H13.9A5 5 0 0 1 18.9 206.3V214.6H8.9V206.3A5 5 0 0 1 13.9 201.3Z" fill="#f7f9fc"/>
<svg x="10.6" y="205.3" width="7.6" height="4.6" viewBox="0 0 8 5"><path d="M4 0.1L7.9 4.9H0.1z" fill="#5c5a78"/></svg>
<rect x="9.8" y="213.6" width="9.5" height="1.4" fill="#9fb0cc"/>
<path d="M7.9 444.3H19.9V453.6A6 6 0 0 1 13.9 459.6H13.9A6 6 0 0 1 7.9 453.6V444.3Z" fill="#d3deec"/>
<path d="M8.9 445.3H18.9V453.6A5 5 0 0 1 13.9 458.6H13.9A5 5 0 0 1 8.9 453.6V445.3Z" fill="#f7f9fc"/>
<rect x="9.8" y="444.4" width="9.5" height="1.2" fill="#9fb0cc"/>
<svg x="11" y="449.9" width="7.4" height="4.5" viewBox="0 0 8 5"><path d="M4 4.9L7.9 0.1H0.1z" fill="#5c5a78"/></svg>
<path d="M15.9 293.3l2.2 -1.7M15.9 301.0l2.2 -1.7M15.9 308.8l2.2 -1.7M15.9 316.5l2.2 -1.7M15.9 324.3l2.2 -1.7M15.9 332.0l2.2 -1.7M15.9 339.7l2.2 -1.7M15.9 347.5l2.2 -1.7M15.9 355.2l2.2 -1.7M11.0 297.3l2.2 -1.7M11.0 305.0l2.2 -1.7M11.0 312.8l2.2 -1.7M11.0 320.5l2.2 -1.7M11.0 328.3l2.2 -1.7M11.0 336.0l2.2 -1.7M11.0 343.7l2.2 -1.7M11.0 351.5l2.2 -1.7" stroke="#a9b5ca" stroke-width="1" fill="none"/>
<path d="M25 201H66.3A2.6 2.6 0 0 1 68.9 203.6V216.8A2.6 2.6 0 0 1 66.3 219.4H25A2.6 2.6 0 0 1 22.4 216.8V203.6A2.6 2.6 0 0 1 25 201Z" fill="#b4c9e4"/>
<path d="M25.1 202H66.2A1.7 1.7 0 0 1 67.9 203.7V216.7A1.7 1.7 0 0 1 66.2 218.4H25.1A1.7 1.7 0 0 1 23.4 216.7V203.7A1.7 1.7 0 0 1 25.1 202Z" fill="#a4a8b0"/>
<path d="M23.4 203H67.9V216.7A1.7 1.7 0 0 1 66.2 218.4H25.1A1.7 1.7 0 0 1 23.4 216.7V203Z" fill="#a9adb5"/>
<path d="M25.2 203H67.9V216.7A1.7 1.7 0 0 1 66.2 218.4H25.2A0.8 0.8 0 0 1 24.4 217.6V203.8A0.8 0.8 0 0 1 25.2 203Z" fill="#ffffff"/>
<path d="M74.9 201H320.8A2.6 2.6 0 0 1 323.4 203.6V216.8A2.6 2.6 0 0 1 320.8 219.4H74.9A2.6 2.6 0 0 1 72.3 216.8V203.6A2.6 2.6 0 0 1 74.9 201Z" fill="#b4c9e4"/>
<path d="M75 202H320.7A1.7 1.7 0 0 1 322.4 203.7V216.7A1.7 1.7 0 0 1 320.7 218.4H75A1.7 1.7 0 0 1 73.3 216.7V203.7A1.7 1.7 0 0 1 75 202Z" fill="#a4a8b0"/>
<path d="M73.3 203H322.4V216.7A1.7 1.7 0 0 1 320.7 218.4H75A1.7 1.7 0 0 1 73.3 216.7V203Z" fill="#a9adb5"/>
<path d="M75.1 203H322.4V216.7A1.7 1.7 0 0 1 320.7 218.4H75.1A0.8 0.8 0 0 1 74.3 217.6V203.8A0.8 0.8 0 0 1 75.1 203Z" fill="#ffffff"/>
<path d="M328.4 201H391.8A2.6 2.6 0 0 1 394.4 203.6V216.8A2.6 2.6 0 0 1 391.8 219.4H328.4A2.6 2.6 0 0 1 325.8 216.8V203.6A2.6 2.6 0 0 1 328.4 201Z" fill="#b4c9e4"/>
<path d="M328.5 202H391.7A1.7 1.7 0 0 1 393.4 203.7V216.7A1.7 1.7 0 0 1 391.7 218.4H328.5A1.7 1.7 0 0 1 326.8 216.7V203.7A1.7 1.7 0 0 1 328.5 202Z" fill="#a4a8b0"/>
<path d="M326.8 203H393.4V216.7A1.7 1.7 0 0 1 391.7 218.4H328.5A1.7 1.7 0 0 1 326.8 216.7V203Z" fill="#a9adb5"/>
<path d="M328.6 203H393.4V216.7A1.7 1.7 0 0 1 391.7 218.4H328.6A0.8 0.8 0 0 1 327.8 217.6V203.8A0.8 0.8 0 0 1 328.6 203Z" fill="#ffffff"/>
<path d="M400.1 201H463.8A2.6 2.6 0 0 1 466.4 203.6V216.8A2.6 2.6 0 0 1 463.8 219.4H400.1A2.6 2.6 0 0 1 397.5 216.8V203.6A2.6 2.6 0 0 1 400.1 201Z" fill="#b4c9e4"/>
<path d="M400.2 202H463.7A1.7 1.7 0 0 1 465.4 203.7V216.7A1.7 1.7 0 0 1 463.7 218.4H400.2A1.7 1.7 0 0 1 398.5 216.7V203.7A1.7 1.7 0 0 1 400.2 202Z" fill="#da2d33"/>
<path d="M398.5 203H465.4V216.7A1.7 1.7 0 0 1 463.7 218.4H400.2A1.7 1.7 0 0 1 398.5 216.7V203Z" fill="#ef1416"/>
<path d="M400.3 203H465.4V216.7A1.7 1.7 0 0 1 463.7 218.4H400.3A0.8 0.8 0 0 1 399.5 217.6V203.8A0.8 0.8 0 0 1 400.3 203Z" fill="#ff0000"/>
<path d="M471.1 201H560.5A2.6 2.6 0 0 1 563.1 203.6V216.8A2.6 2.6 0 0 1 560.5 219.4H471.1A2.6 2.6 0 0 1 468.5 216.8V203.6A2.6 2.6 0 0 1 471.1 201Z" fill="#b4c9e4"/>
<path d="M471.2 202H560.4A1.7 1.7 0 0 1 562.1 203.7V216.7A1.7 1.7 0 0 1 560.4 218.4H471.2A1.7 1.7 0 0 1 469.5 216.7V203.7A1.7 1.7 0 0 1 471.2 202Z" fill="#da2d33"/>
<path d="M469.5 203H562.1V216.7A1.7 1.7 0 0 1 560.4 218.4H471.2A1.7 1.7 0 0 1 469.5 216.7V203Z" fill="#ef1416"/>
<path d="M471.3 203H562.1V216.7A1.7 1.7 0 0 1 560.4 218.4H471.3A0.8 0.8 0 0 1 470.5 217.6V203.8A0.8 0.8 0 0 1 471.3 203Z" fill="#ff0000"/>
<path d="M568.6 201H632A2.6 2.6 0 0 1 634.6 203.6V216.8A2.6 2.6 0 0 1 632 219.4H568.6A2.6 2.6 0 0 1 566 216.8V203.6A2.6 2.6 0 0 1 568.6 201Z" fill="#b4c9e4"/>
<path d="M568.7 202H631.9A1.7 1.7 0 0 1 633.6 203.7V216.7A1.7 1.7 0 0 1 631.9 218.4H568.7A1.7 1.7 0 0 1 567 216.7V203.7A1.7 1.7 0 0 1 568.7 202Z" fill="#da2d33"/>
<path d="M567 203H633.6V216.7A1.7 1.7 0 0 1 631.9 218.4H568.7A1.7 1.7 0 0 1 567 216.7V203Z" fill="#ef1416"/>
<path d="M568.8 203H633.6V216.7A1.7 1.7 0 0 1 631.9 218.4H568.8A0.8 0.8 0 0 1 568 217.6V203.8A0.8 0.8 0 0 1 568.8 203Z" fill="#ff0000"/>
<path d="M639.6 201H658.7A2.6 2.6 0 0 1 661.3 203.6V216.8A2.6 2.6 0 0 1 658.7 219.4H639.6A2.6 2.6 0 0 1 637 216.8V203.6A2.6 2.6 0 0 1 639.6 201Z" fill="#b4c9e4"/>
<path d="M639.7 202H658.6A1.7 1.7 0 0 1 660.3 203.7V216.7A1.7 1.7 0 0 1 658.6 218.4H639.7A1.7 1.7 0 0 1 638 216.7V203.7A1.7 1.7 0 0 1 639.7 202Z" fill="#da2d33"/>
<path d="M638 203H660.3V216.7A1.7 1.7 0 0 1 658.6 218.4H639.7A1.7 1.7 0 0 1 638 216.7V203Z" fill="#ef1416"/>
<path d="M639.8 203H660.3V216.7A1.7 1.7 0 0 1 658.6 218.4H639.8A0.8 0.8 0 0 1 639 217.6V203.8A0.8 0.8 0 0 1 639.8 203Z" fill="#ff0000"/>
<path d="M666.3 201H685.3A2.6 2.6 0 0 1 687.9 203.6V216.8A2.6 2.6 0 0 1 685.3 219.4H666.3A2.6 2.6 0 0 1 663.7 216.8V203.6A2.6 2.6 0 0 1 666.3 201Z" fill="#b4c9e4"/>
<path d="M666.4 202H685.2A1.7 1.7 0 0 1 686.9 203.7V216.7A1.7 1.7 0 0 1 685.2 218.4H666.4A1.7 1.7 0 0 1 664.7 216.7V203.7A1.7 1.7 0 0 1 666.4 202Z" fill="#da2d33"/>
<path d="M664.7 203H686.9V216.7A1.7 1.7 0 0 1 685.2 218.4H666.4A1.7 1.7 0 0 1 664.7 216.7V203Z" fill="#ef1416"/>
<path d="M666.5 203H686.9V216.7A1.7 1.7 0 0 1 685.2 218.4H666.5A0.8 0.8 0 0 1 665.7 217.6V203.8A0.8 0.8 0 0 1 666.5 203Z" fill="#ff0000"/>
<path d="M693.2 201H757.4A2.6 2.6 0 0 1 760 203.6V216.8A2.6 2.6 0 0 1 757.4 219.4H693.2A2.6 2.6 0 0 1 690.6 216.8V203.6A2.6 2.6 0 0 1 693.2 201Z" fill="#b4c9e4"/>
<path d="M693.3 202H757.3A1.7 1.7 0 0 1 759 203.7V216.7A1.7 1.7 0 0 1 757.3 218.4H693.3A1.7 1.7 0 0 1 691.6 216.7V203.7A1.7 1.7 0 0 1 693.3 202Z" fill="#da2d33"/>
<path d="M691.6 203H759V216.7A1.7 1.7 0 0 1 757.3 218.4H693.3A1.7 1.7 0 0 1 691.6 216.7V203Z" fill="#ef1416"/>
<path d="M693.4 203H759V216.7A1.7 1.7 0 0 1 757.3 218.4H693.4A0.8 0.8 0 0 1 692.6 217.6V203.8A0.8 0.8 0 0 1 693.4 203Z" fill="#ff0000"/>
<path d="M765.6 201H827.9A2.6 2.6 0 0 1 830.5 203.6V216.8A2.6 2.6 0 0 1 827.9 219.4H765.6A2.6 2.6 0 0 1 763 216.8V203.6A2.6 2.6 0 0 1 765.6 201Z" fill="#b4c9e4"/>
<path d="M765.7 202H827.8A1.7 1.7 0 0 1 829.5 203.7V216.7A1.7 1.7 0 0 1 827.8 218.4H765.7A1.7 1.7 0 0 1 764 216.7V203.7A1.7 1.7 0 0 1 765.7 202Z" fill="#da2d33"/>
<path d="M764 203H829.5V216.7A1.7 1.7 0 0 1 827.8 218.4H765.7A1.7 1.7 0 0 1 764 216.7V203Z" fill="#ef1416"/>
<path d="M765.8 203H829.5V216.7A1.7 1.7 0 0 1 827.8 218.4H765.8A0.8 0.8 0 0 1 765 217.6V203.8A0.8 0.8 0 0 1 765.8 203Z" fill="#ff0000"/>
<path d="M835.9 201H848.6A3 3 0 0 1 851.6 204V216.4A3 3 0 0 1 848.6 219.4H835.9A3 3 0 0 1 832.9 216.4V204A3 3 0 0 1 835.9 201Z" fill="#dfe7f2"/>
<path d="M836.1 201.6H849A2.6 2.6 0 0 1 851.6 204.2V216.8A2.6 2.6 0 0 1 849 219.4H836.1A2.6 2.6 0 0 1 833.5 216.8V204.2A2.6 2.6 0 0 1 836.1 201.6Z" fill="#86a0c6"/>
<path d="M835.7 201.2H848.9A1.6 1.6 0 0 1 850.5 202.8V217.7A0.6 0.6 0 0 1 849.9 218.3H834.7A1.6 1.6 0 0 1 833.1 216.7V203.8A2.6 2.6 0 0 1 835.7 201.2Z" fill="#e9eef6"/>
<path d="M835.4 202.1H849A1.4 1.4 0 0 1 850.4 203.5V216.8A1.4 1.4 0 0 1 849 218.2H835.4A1.4 1.4 0 0 1 834 216.8V203.5A1.4 1.4 0 0 1 835.4 202.1Z" fill="#c1c1c1"/>
<svg x="832.9" y="201" width="18.7" height="18.4" viewBox="0 0 18.7 18.4"><path d="M2.6 3.8h4.6M4.8 1.6v4.4" stroke="#1a1a1a" stroke-width="1.1" fill="none"/><path d="M2.6 6.5h6V3.8l3.9 3.8-3.9 3.8V8.7h-6z" fill="#f20d0d"/></svg>
<path d="M25 222.69H66.3A2.6 2.6 0 0 1 68.9 225.29V238.49A2.6 2.6 0 0 1 66.3 241.09H25A2.6 2.6 0 0 1 22.4 238.49V225.29A2.6 2.6 0 0 1 25 222.69Z" fill="#b4c9e4"/>
<path d="M25.1 223.69H66.2A1.7 1.7 0 0 1 67.9 225.39V238.39A1.7 1.7 0 0 1 66.2 240.09H25.1A1.7 1.7 0 0 1 23.4 238.39V225.39A1.7 1.7 0 0 1 25.1 223.69Z" fill="#a4a8b0"/>
<path d="M23.4 224.69H67.9V238.39A1.7 1.7 0 0 1 66.2 240.09H25.1A1.7 1.7 0 0 1 23.4 238.39V224.69Z" fill="#a9adb5"/>
<path d="M25.2 224.69H67.9V238.39A1.7 1.7 0 0 1 66.2 240.09H25.2A0.8 0.8 0 0 1 24.4 239.29V225.49A0.8 0.8 0 0 1 25.2 224.69Z" fill="#ffffff"/>
<path d="M74.9 222.69H320.8A2.6 2.6 0 0 1 323.4 225.29V238.49A2.6 2.6 0 0 1 320.8 241.09H74.9A2.6 2.6 0 0 1 72.3 238.49V225.29A2.6 2.6 0 0 1 74.9 222.69Z" fill="#b4c9e4"/>
<path d="M75 223.69H320.7A1.7 1.7 0 0 1 322.4 225.39V238.39A1.7 1.7 0 0 1 320.7 240.09H75A1.7 1.7 0 0 1 73.3 238.39V225.39A1.7 1.7 0 0 1 75 223.69Z" fill="#a4a8b0"/>
<path d="M73.3 224.69H322.4V238.39A1.7 1.7 0 0 1 320.7 240.09H75A1.7 1.7 0 0 1 73.3 238.39V224.69Z" fill="#a9adb5"/>
<path d="M75.1 224.69H322.4V238.39A1.7 1.7 0 0 1 320.7 240.09H75.1A0.8 0.8 0 0 1 74.3 239.29V225.49A0.8 0.8 0 0 1 75.1 224.69Z" fill="#ffffff"/>
<path d="M328.4 222.69H391.8A2.6 2.6 0 0 1 394.4 225.29V238.49A2.6 2.6 0 0 1 391.8 241.09H328.4A2.6 2.6 0 0 1 325.8 238.49V225.29A2.6 2.6 0 0 1 328.4 222.69Z" fill="#b4c9e4"/>
<path d="M328.5 223.69H391.7A1.7 1.7 0 0 1 393.4 225.39V238.39A1.7 1.7 0 0 1 391.7 240.09H328.5A1.7 1.7 0 0 1 326.8 238.39V225.39A1.7 1.7 0 0 1 328.5 223.69Z" fill="#a4a8b0"/>
<path d="M326.8 224.69H393.4V238.39A1.7 1.7 0 0 1 391.7 240.09H328.5A1.7 1.7 0 0 1 326.8 238.39V224.69Z" fill="#a9adb5"/>
<path d="M328.6 224.69H393.4V238.39A1.7 1.7 0 0 1 391.7 240.09H328.6A0.8 0.8 0 0 1 327.8 239.29V225.49A0.8 0.8 0 0 1 328.6 224.69Z" fill="#ffffff"/>
<path d="M400.1 222.69H463.8A2.6 2.6 0 0 1 466.4 225.29V238.49A2.6 2.6 0 0 1 463.8 241.09H400.1A2.6 2.6 0 0 1 397.5 238.49V225.29A2.6 2.6 0 0 1 400.1 222.69Z" fill="#b4c9e4"/>
<path d="M400.2 223.69H463.7A1.7 1.7 0 0 1 465.4 225.39V238.39A1.7 1.7 0 0 1 463.7 240.09H400.2A1.7 1.7 0 0 1 398.5 238.39V225.39A1.7 1.7 0 0 1 400.2 223.69Z" fill="#da2d33"/>
<path d="M398.5 224.69H465.4V238.39A1.7 1.7 0 0 1 463.7 240.09H400.2A1.7 1.7 0 0 1 398.5 238.39V224.69Z" fill="#ef1416"/>
<path d="M400.3 224.69H465.4V238.39A1.7 1.7 0 0 1 463.7 240.09H400.3A0.8 0.8 0 0 1 399.5 239.29V225.49A0.8 0.8 0 0 1 400.3 224.69Z" fill="#ff0000"/>
<path d="M471.1 222.69H560.5A2.6 2.6 0 0 1 563.1 225.29V238.49A2.6 2.6 0 0 1 560.5 241.09H471.1A2.6 2.6 0 0 1 468.5 238.49V225.29A2.6 2.6 0 0 1 471.1 222.69Z" fill="#b4c9e4"/>
<path d="M471.2 223.69H560.4A1.7 1.7 0 0 1 562.1 225.39V238.39A1.7 1.7 0 0 1 560.4 240.09H471.2A1.7 1.7 0 0 1 469.5 238.39V225.39A1.7 1.7 0 0 1 471.2 223.69Z" fill="#da2d33"/>
<path d="M469.5 224.69H562.1V238.39A1.7 1.7 0 0 1 560.4 240.09H471.2A1.7 1.7 0 0 1 469.5 238.39V224.69Z" fill="#ef1416"/>
<path d="M471.3 224.69H562.1V238.39A1.7 1.7 0 0 1 560.4 240.09H471.3A0.8 0.8 0 0 1 470.5 239.29V225.49A0.8 0.8 0 0 1 471.3 224.69Z" fill="#ff0000"/>
<path d="M568.6 222.69H632A2.6 2.6 0 0 1 634.6 225.29V238.49A2.6 2.6 0 0 1 632 241.09H568.6A2.6 2.6 0 0 1 566 238.49V225.29A2.6 2.6 0 0 1 568.6 222.69Z" fill="#b4c9e4"/>
<path d="M568.7 223.69H631.9A1.7 1.7 0 0 1 633.6 225.39V238.39A1.7 1.7 0 0 1 631.9 240.09H568.7A1.7 1.7 0 0 1 567 238.39V225.39A1.7 1.7 0 0 1 568.7 223.69Z" fill="#da2d33"/>
<path d="M567 224.69H633.6V238.39A1.7 1.7 0 0 1 631.9 240.09H568.7A1.7 1.7 0 0 1 567 238.39V224.69Z" fill="#ef1416"/>
<path d="M568.8 224.69H633.6V238.39A1.7 1.7 0 0 1 631.9 240.09H568.8A0.8 0.8 0 0 1 568 239.29V225.49A0.8 0.8 0 0 1 568.8 224.69Z" fill="#ff0000"/>
<path d="M639.6 222.69H658.7A2.6 2.6 0 0 1 661.3 225.29V238.49A2.6 2.6 0 0 1 658.7 241.09H639.6A2.6 2.6 0 0 1 637 238.49V225.29A2.6 2.6 0 0 1 639.6 222.69Z" fill="#b4c9e4"/>
<path d="M639.7 223.69H658.6A1.7 1.7 0 0 1 660.3 225.39V238.39A1.7 1.7 0 0 1 658.6 240.09H639.7A1.7 1.7 0 0 1 638 238.39V225.39A1.7 1.7 0 0 1 639.7 223.69Z" fill="#da2d33"/>
<path d="M638 224.69H660.3V238.39A1.7 1.7 0 0 1 658.6 240.09H639.7A1.7 1.7 0 0 1 638 238.39V224.69Z" fill="#ef1416"/>
<path d="M639.8 224.69H660.3V238.39A1.7 1.7 0 0 1 658.6 240.09H639.8A0.8 0.8 0 0 1 639 239.29V225.49A0.8 0.8 0 0 1 639.8 224.69Z" fill="#ff0000"/>
<path d="M666.3 222.69H685.3A2.6 2.6 0 0 1 687.9 225.29V238.49A2.6 2.6 0 0 1 685.3 241.09H666.3A2.6 2.6 0 0 1 663.7 238.49V225.29A2.6 2.6 0 0 1 666.3 222.69Z" fill="#b4c9e4"/>
<path d="M666.4 223.69H685.2A1.7 1.7 0 0 1 686.9 225.39V238.39A1.7 1.7 0 0 1 685.2 240.09H666.4A1.7 1.7 0 0 1 664.7 238.39V225.39A1.7 1.7 0 0 1 666.4 223.69Z" fill="#da2d33"/>
<path d="M664.7 224.69H686.9V238.39A1.7 1.7 0 0 1 685.2 240.09H666.4A1.7 1.7 0 0 1 664.7 238.39V224.69Z" fill="#ef1416"/>
<path d="M666.5 224.69H686.9V238.39A1.7 1.7 0 0 1 685.2 240.09H666.5A0.8 0.8 0 0 1 665.7 239.29V225.49A0.8 0.8 0 0 1 666.5 224.69Z" fill="#ff0000"/>
<path d="M693.2 222.69H757.4A2.6 2.6 0 0 1 760 225.29V238.49A2.6 2.6 0 0 1 757.4 241.09H693.2A2.6 2.6 0 0 1 690.6 238.49V225.29A2.6 2.6 0 0 1 693.2 222.69Z" fill="#b4c9e4"/>
<path d="M693.3 223.69H757.3A1.7 1.7 0 0 1 759 225.39V238.39A1.7 1.7 0 0 1 757.3 240.09H693.3A1.7 1.7 0 0 1 691.6 238.39V225.39A1.7 1.7 0 0 1 693.3 223.69Z" fill="#da2d33"/>
<path d="M691.6 224.69H759V238.39A1.7 1.7 0 0 1 757.3 240.09H693.3A1.7 1.7 0 0 1 691.6 238.39V224.69Z" fill="#ef1416"/>
<path d="M693.4 224.69H759V238.39A1.7 1.7 0 0 1 757.3 240.09H693.4A0.8 0.8 0 0 1 692.6 239.29V225.49A0.8 0.8 0 0 1 693.4 224.69Z" fill="#ff0000"/>
<path d="M765.6 222.69H827.9A2.6 2.6 0 0 1 830.5 225.29V238.49A2.6 2.6 0 0 1 827.9 241.09H765.6A2.6 2.6 0 0 1 763 238.49V225.29A2.6 2.6 0 0 1 765.6 222.69Z" fill="#b4c9e4"/>
<path d="M765.7 223.69H827.8A1.7 1.7 0 0 1 829.5 225.39V238.39A1.7 1.7 0 0 1 827.8 240.09H765.7A1.7 1.7 0 0 1 764 238.39V225.39A1.7 1.7 0 0 1 765.7 223.69Z" fill="#da2d33"/>
<path d="M764 224.69H829.5V238.39A1.7 1.7 0 0 1 827.8 240.09H765.7A1.7 1.7 0 0 1 764 238.39V224.69Z" fill="#ef1416"/>
<path d="M765.8 224.69H829.5V238.39A1.7 1.7 0 0 1 827.8 240.09H765.8A0.8 0.8 0 0 1 765 239.29V225.49A0.8 0.8 0 0 1 765.8 224.69Z" fill="#ff0000"/>
<path d="M835.9 222.69H848.6A3 3 0 0 1 851.6 225.69V238.09A3 3 0 0 1 848.6 241.09H835.9A3 3 0 0 1 832.9 238.09V225.69A3 3 0 0 1 835.9 222.69Z" fill="#dfe7f2"/>
<path d="M836.1 223.29H849A2.6 2.6 0 0 1 851.6 225.89V238.49A2.6 2.6 0 0 1 849 241.09H836.1A2.6 2.6 0 0 1 833.5 238.49V225.89A2.6 2.6 0 0 1 836.1 223.29Z" fill="#86a0c6"/>
<path d="M835.7 222.89H848.9A1.6 1.6 0 0 1 850.5 224.49V239.39A0.6 0.6 0 0 1 849.9 239.99H834.7A1.6 1.6 0 0 1 833.1 238.39V225.49A2.6 2.6 0 0 1 835.7 222.89Z" fill="#e9eef6"/>
<path d="M835.4 223.79H849A1.4 1.4 0 0 1 850.4 225.19V238.49A1.4 1.4 0 0 1 849 239.89H835.4A1.4 1.4 0 0 1 834 238.49V225.19A1.4 1.4 0 0 1 835.4 223.79Z" fill="#c1c1c1"/>
<svg x="832.9" y="222.69" width="18.7" height="18.4" viewBox="0 0 18.7 18.4"><path d="M2.6 3.8h4.6M4.8 1.6v4.4" stroke="#1a1a1a" stroke-width="1.1" fill="none"/><path d="M2.6 6.5h6V3.8l3.9 3.8-3.9 3.8V8.7h-6z" fill="#f20d0d"/></svg>
<path d="M25 244.38H66.3A2.6 2.6 0 0 1 68.9 246.98V260.18A2.6 2.6 0 0 1 66.3 262.78H25A2.6 2.6 0 0 1 22.4 260.18V246.98A2.6 2.6 0 0 1 25 244.38Z" fill="#b4c9e4"/>
<path d="M25.1 245.38H66.2A1.7 1.7 0 0 1 67.9 247.08V260.08A1.7 1.7 0 0 1 66.2 261.78H25.1A1.7 1.7 0 0 1 23.4 260.08V247.08A1.7 1.7 0 0 1 25.1 245.38Z" fill="#a4a8b0"/>
<path d="M23.4 246.38H67.9V260.08A1.7 1.7 0 0 1 66.2 261.78H25.1A1.7 1.7 0 0 1 23.4 260.08V246.38Z" fill="#a9adb5"/>
<path d="M25.2 246.38H67.9V260.08A1.7 1.7 0 0 1 66.2 261.78H25.2A0.8 0.8 0 0 1 24.4 260.98V247.18A0.8 0.8 0 0 1 25.2 246.38Z" fill="#ffffff"/>
<path d="M74.9 244.38H320.8A2.6 2.6 0 0 1 323.4 246.98V260.18A2.6 2.6 0 0 1 320.8 262.78H74.9A2.6 2.6 0 0 1 72.3 260.18V246.98A2.6 2.6 0 0 1 74.9 244.38Z" fill="#b4c9e4"/>
<path d="M75 245.38H320.7A1.7 1.7 0 0 1 322.4 247.08V260.08A1.7 1.7 0 0 1 320.7 261.78H75A1.7 1.7 0 0 1 73.3 260.08V247.08A1.7 1.7 0 0 1 75 245.38Z" fill="#a4a8b0"/>
<path d="M73.3 246.38H322.4V260.08A1.7 1.7 0 0 1 320.7 261.78H75A1.7 1.7 0 0 1 73.3 260.08V246.38Z" fill="#a9adb5"/>
<path d="M75.1 246.38H322.4V260.08A1.7 1.7 0 0 1 320.7 261.78H75.1A0.8 0.8 0 0 1 74.3 260.98V247.18A0.8 0.8 0 0 1 75.1 246.38Z" fill="#ffffff"/>
<path d="M328.4 244.38H391.8A2.6 2.6 0 0 1 394.4 246.98V260.18A2.6 2.6 0 0 1 391.8 262.78H328.4A2.6 2.6 0 0 1 325.8 260.18V246.98A2.6 2.6 0 0 1 328.4 244.38Z" fill="#b4c9e4"/>
<path d="M328.5 245.38H391.7A1.7 1.7 0 0 1 393.4 247.08V260.08A1.7 1.7 0 0 1 391.7 261.78H328.5A1.7 1.7 0 0 1 326.8 260.08V247.08A1.7 1.7 0 0 1 328.5 245.38Z" fill="#a4a8b0"/>
<path d="M326.8 246.38H393.4V260.08A1.7 1.7 0 0 1 391.7 261.78H328.5A1.7 1.7 0 0 1 326.8 260.08V246.38Z" fill="#a9adb5"/>
<path d="M328.6 246.38H393.4V260.08A1.7 1.7 0 0 1 391.7 261.78H328.6A0.8 0.8 0 0 1 327.8 260.98V247.18A0.8 0.8 0 0 1 328.6 246.38Z" fill="#ffffff"/>
<path d="M400.1 244.38H463.8A2.6 2.6 0 0 1 466.4 246.98V260.18A2.6 2.6 0 0 1 463.8 262.78H400.1A2.6 2.6 0 0 1 397.5 260.18V246.98A2.6 2.6 0 0 1 400.1 244.38Z" fill="#b4c9e4"/>
<path d="M400.2 245.38H463.7A1.7 1.7 0 0 1 465.4 247.08V260.08A1.7 1.7 0 0 1 463.7 261.78H400.2A1.7 1.7 0 0 1 398.5 260.08V247.08A1.7 1.7 0 0 1 400.2 245.38Z" fill="#da2d33"/>
<path d="M398.5 246.38H465.4V260.08A1.7 1.7 0 0 1 463.7 261.78H400.2A1.7 1.7 0 0 1 398.5 260.08V246.38Z" fill="#ef1416"/>
<path d="M400.3 246.38H465.4V260.08A1.7 1.7 0 0 1 463.7 261.78H400.3A0.8 0.8 0 0 1 399.5 260.98V247.18A0.8 0.8 0 0 1 400.3 246.38Z" fill="#ff0000"/>
<path d="M471.1 244.38H560.5A2.6 2.6 0 0 1 563.1 246.98V260.18A2.6 2.6 0 0 1 560.5 262.78H471.1A2.6 2.6 0 0 1 468.5 260.18V246.98A2.6 2.6 0 0 1 471.1 244.38Z" fill="#b4c9e4"/>
<path d="M471.2 245.38H560.4A1.7 1.7 0 0 1 562.1 247.08V260.08A1.7 1.7 0 0 1 560.4 261.78H471.2A1.7 1.7 0 0 1 469.5 260.08V247.08A1.7 1.7 0 0 1 471.2 245.38Z" fill="#da2d33"/>
<path d="M469.5 246.38H562.1V260.08A1.7 1.7 0 0 1 560.4 261.78H471.2A1.7 1.7 0 0 1 469.5 260.08V246.38Z" fill="#ef1416"/>
<path d="M471.3 246.38H562.1V260.08A1.7 1.7 0 0 1 560.4 261.78H471.3A0.8 0.8 0 0 1 470.5 260.98V247.18A0.8 0.8 0 0 1 471.3 246.38Z" fill="#ff0000"/>
<path d="M568.6 244.38H632A2.6 2.6 0 0 1 634.6 246.98V260.18A2.6 2.6 0 0 1 632 262.78H568.6A2.6 2.6 0 0 1 566 260.18V246.98A2.6 2.6 0 0 1 568.6 244.38Z" fill="#b4c9e4"/>
<path d="M568.7 245.38H631.9A1.7 1.7 0 0 1 633.6 247.08V260.08A1.7 1.7 0 0 1 631.9 261.78H568.7A1.7 1.7 0 0 1 567 260.08V247.08A1.7 1.7 0 0 1 568.7 245.38Z" fill="#da2d33"/>
<path d="M567 246.38H633.6V260.08A1.7 1.7 0 0 1 631.9 261.78H568.7A1.7 1.7 0 0 1 567 260.08V246.38Z" fill="#ef1416"/>
<path d="M568.8 246.38H633.6V260.08A1.7 1.7 0 0 1 631.9 261.78H568.8A0.8 0.8 0 0 1 568 260.98V247.18A0.8 0.8 0 0 1 568.8 246.38Z" fill="#ff0000"/>
<path d="M639.6 244.38H658.7A2.6 2.6 0 0 1 661.3 246.98V260.18A2.6 2.6 0 0 1 658.7 262.78H639.6A2.6 2.6 0 0 1 637 260.18V246.98A2.6 2.6 0 0 1 639.6 244.38Z" fill="#b4c9e4"/>
<path d="M639.7 245.38H658.6A1.7 1.7 0 0 1 660.3 247.08V260.08A1.7 1.7 0 0 1 658.6 261.78H639.7A1.7 1.7 0 0 1 638 260.08V247.08A1.7 1.7 0 0 1 639.7 245.38Z" fill="#da2d33"/>
<path d="M638 246.38H660.3V260.08A1.7 1.7 0 0 1 658.6 261.78H639.7A1.7 1.7 0 0 1 638 260.08V246.38Z" fill="#ef1416"/>
<path d="M639.8 246.38H660.3V260.08A1.7 1.7 0 0 1 658.6 261.78H639.8A0.8 0.8 0 0 1 639 260.98V247.18A0.8 0.8 0 0 1 639.8 246.38Z" fill="#ff0000"/>
<path d="M666.3 244.38H685.3A2.6 2.6 0 0 1 687.9 246.98V260.18A2.6 2.6 0 0 1 685.3 262.78H666.3A2.6 2.6 0 0 1 663.7 260.18V246.98A2.6 2.6 0 0 1 666.3 244.38Z" fill="#b4c9e4"/>
<path d="M666.4 245.38H685.2A1.7 1.7 0 0 1 686.9 247.08V260.08A1.7 1.7 0 0 1 685.2 261.78H666.4A1.7 1.7 0 0 1 664.7 260.08V247.08A1.7 1.7 0 0 1 666.4 245.38Z" fill="#da2d33"/>
<path d="M664.7 246.38H686.9V260.08A1.7 1.7 0 0 1 685.2 261.78H666.4A1.7 1.7 0 0 1 664.7 260.08V246.38Z" fill="#ef1416"/>
<path d="M666.5 246.38H686.9V260.08A1.7 1.7 0 0 1 685.2 261.78H666.5A0.8 0.8 0 0 1 665.7 260.98V247.18A0.8 0.8 0 0 1 666.5 246.38Z" fill="#ff0000"/>
<path d="M693.2 244.38H757.4A2.6 2.6 0 0 1 760 246.98V260.18A2.6 2.6 0 0 1 757.4 262.78H693.2A2.6 2.6 0 0 1 690.6 260.18V246.98A2.6 2.6 0 0 1 693.2 244.38Z" fill="#b4c9e4"/>
<path d="M693.3 245.38H757.3A1.7 1.7 0 0 1 759 247.08V260.08A1.7 1.7 0 0 1 757.3 261.78H693.3A1.7 1.7 0 0 1 691.6 260.08V247.08A1.7 1.7 0 0 1 693.3 245.38Z" fill="#da2d33"/>
<path d="M691.6 246.38H759V260.08A1.7 1.7 0 0 1 757.3 261.78H693.3A1.7 1.7 0 0 1 691.6 260.08V246.38Z" fill="#ef1416"/>
<path d="M693.4 246.38H759V260.08A1.7 1.7 0 0 1 757.3 261.78H693.4A0.8 0.8 0 0 1 692.6 260.98V247.18A0.8 0.8 0 0 1 693.4 246.38Z" fill="#ff0000"/>
<path d="M765.6 244.38H827.9A2.6 2.6 0 0 1 830.5 246.98V260.18A2.6 2.6 0 0 1 827.9 262.78H765.6A2.6 2.6 0 0 1 763 260.18V246.98A2.6 2.6 0 0 1 765.6 244.38Z" fill="#b4c9e4"/>
<path d="M765.7 245.38H827.8A1.7 1.7 0 0 1 829.5 247.08V260.08A1.7 1.7 0 0 1 827.8 261.78H765.7A1.7 1.7 0 0 1 764 260.08V247.08A1.7 1.7 0 0 1 765.7 245.38Z" fill="#da2d33"/>
<path d="M764 246.38H829.5V260.08A1.7 1.7 0 0 1 827.8 261.78H765.7A1.7 1.7 0 0 1 764 260.08V246.38Z" fill="#ef1416"/>
<path d="M765.8 246.38H829.5V260.08A1.7 1.7 0 0 1 827.8 261.78H765.8A0.8 0.8 0 0 1 765 260.98V247.18A0.8 0.8 0 0 1 765.8 246.38Z" fill="#ff0000"/>
<path d="M835.9 244.38H848.6A3 3 0 0 1 851.6 247.38V259.78A3 3 0 0 1 848.6 262.78H835.9A3 3 0 0 1 832.9 259.78V247.38A3 3 0 0 1 835.9 244.38Z" fill="#dfe7f2"/>
<path d="M836.1 244.98H849A2.6 2.6 0 0 1 851.6 247.58V260.18A2.6 2.6 0 0 1 849 262.78H836.1A2.6 2.6 0 0 1 833.5 260.18V247.58A2.6 2.6 0 0 1 836.1 244.98Z" fill="#86a0c6"/>
<path d="M835.7 244.58H848.9A1.6 1.6 0 0 1 850.5 246.18V261.08A0.6 0.6 0 0 1 849.9 261.68H834.7A1.6 1.6 0 0 1 833.1 260.08V247.18A2.6 2.6 0 0 1 835.7 244.58Z" fill="#e9eef6"/>
<path d="M835.4 245.48H849A1.4 1.4 0 0 1 850.4 246.88V260.18A1.4 1.4 0 0 1 849 261.58H835.4A1.4 1.4 0 0 1 834 260.18V246.88A1.4 1.4 0 0 1 835.4 245.48Z" fill="#c1c1c1"/>
<svg x="832.9" y="244.38" width="18.7" height="18.4" viewBox="0 0 18.7 18.4"><path d="M2.6 3.8h4.6M4.8 1.6v4.4" stroke="#1a1a1a" stroke-width="1.1" fill="none"/><path d="M2.6 6.5h6V3.8l3.9 3.8-3.9 3.8V8.7h-6z" fill="#f20d0d"/></svg>
<path d="M25 266.07H66.3A2.6 2.6 0 0 1 68.9 268.67V281.87A2.6 2.6 0 0 1 66.3 284.47H25A2.6 2.6 0 0 1 22.4 281.87V268.67A2.6 2.6 0 0 1 25 266.07Z" fill="#b4c9e4"/>
<path d="M25.1 267.07H66.2A1.7 1.7 0 0 1 67.9 268.77V281.77A1.7 1.7 0 0 1 66.2 283.47H25.1A1.7 1.7 0 0 1 23.4 281.77V268.77A1.7 1.7 0 0 1 25.1 267.07Z" fill="#a4a8b0"/>
<path d="M23.4 268.07H67.9V281.77A1.7 1.7 0 0 1 66.2 283.47H25.1A1.7 1.7 0 0 1 23.4 281.77V268.07Z" fill="#a9adb5"/>
<path d="M25.2 268.07H67.9V281.77A1.7 1.7 0 0 1 66.2 283.47H25.2A0.8 0.8 0 0 1 24.4 282.67V268.87A0.8 0.8 0 0 1 25.2 268.07Z" fill="#ffffff"/>
<path d="M74.9 266.07H320.8A2.6 2.6 0 0 1 323.4 268.67V281.87A2.6 2.6 0 0 1 320.8 284.47H74.9A2.6 2.6 0 0 1 72.3 281.87V268.67A2.6 2.6 0 0 1 74.9 266.07Z" fill="#b4c9e4"/>
<path d="M75 267.07H320.7A1.7 1.7 0 0 1 322.4 268.77V281.77A1.7 1.7 0 0 1 320.7 283.47H75A1.7 1.7 0 0 1 73.3 281.77V268.77A1.7 1.7 0 0 1 75 267.07Z" fill="#a4a8b0"/>
<path d="M73.3 268.07H322.4V281.77A1.7 1.7 0 0 1 320.7 283.47H75A1.7 1.7 0 0 1 73.3 281.77V268.07Z" fill="#a9adb5"/>
<path d="M75.1 268.07H322.4V281.77A1.7 1.7 0 0 1 320.7 283.47H75.1A0.8 0.8 0 0 1 74.3 282.67V268.87A0.8 0.8 0 0 1 75.1 268.07Z" fill="#ffffff"/>
<path d="M328.4 266.07H391.8A2.6 2.6 0 0 1 394.4 268.67V281.87A2.6 2.6 0 0 1 391.8 284.47H328.4A2.6 2.6 0 0 1 325.8 281.87V268.67A2.6 2.6 0 0 1 328.4 266.07Z" fill="#b4c9e4"/>
<path d="M328.5 267.07H391.7A1.7 1.7 0 0 1 393.4 268.77V281.77A1.7 1.7 0 0 1 391.7 283.47H328.5A1.7 1.7 0 0 1 326.8 281.77V268.77A1.7 1.7 0 0 1 328.5 267.07Z" fill="#a4a8b0"/>
<path d="M326.8 268.07H393.4V281.77A1.7 1.7 0 0 1 391.7 283.47H328.5A1.7 1.7 0 0 1 326.8 281.77V268.07Z" fill="#a9adb5"/>
<path d="M328.6 268.07H393.4V281.77A1.7 1.7 0 0 1 391.7 283.47H328.6A0.8 0.8 0 0 1 327.8 282.67V268.87A0.8 0.8 0 0 1 328.6 268.07Z" fill="#ffffff"/>
<path d="M400.1 266.07H463.8A2.6 2.6 0 0 1 466.4 268.67V281.87A2.6 2.6 0 0 1 463.8 284.47H400.1A2.6 2.6 0 0 1 397.5 281.87V268.67A2.6 2.6 0 0 1 400.1 266.07Z" fill="#b4c9e4"/>
<path d="M400.2 267.07H463.7A1.7 1.7 0 0 1 465.4 268.77V281.77A1.7 1.7 0 0 1 463.7 283.47H400.2A1.7 1.7 0 0 1 398.5 281.77V268.77A1.7 1.7 0 0 1 400.2 267.07Z" fill="#da2d33"/>
<path d="M398.5 268.07H465.4V281.77A1.7 1.7 0 0 1 463.7 283.47H400.2A1.7 1.7 0 0 1 398.5 281.77V268.07Z" fill="#ef1416"/>
<path d="M400.3 268.07H465.4V281.77A1.7 1.7 0 0 1 463.7 283.47H400.3A0.8 0.8 0 0 1 399.5 282.67V268.87A0.8 0.8 0 0 1 400.3 268.07Z" fill="#ff0000"/>
<path d="M471.1 266.07H560.5A2.6 2.6 0 0 1 563.1 268.67V281.87A2.6 2.6 0 0 1 560.5 284.47H471.1A2.6 2.6 0 0 1 468.5 281.87V268.67A2.6 2.6 0 0 1 471.1 266.07Z" fill="#b4c9e4"/>
<path d="M471.2 267.07H560.4A1.7 1.7 0 0 1 562.1 268.77V281.77A1.7 1.7 0 0 1 560.4 283.47H471.2A1.7 1.7 0 0 1 469.5 281.77V268.77A1.7 1.7 0 0 1 471.2 267.07Z" fill="#da2d33"/>
<path d="M469.5 268.07H562.1V281.77A1.7 1.7 0 0 1 560.4 283.47H471.2A1.7 1.7 0 0 1 469.5 281.77V268.07Z" fill="#ef1416"/>
<path d="M471.3 268.07H562.1V281.77A1.7 1.7 0 0 1 560.4 283.47H471.3A0.8 0.8 0 0 1 470.5 282.67V268.87A0.8 0.8 0 0 1 471.3 268.07Z" fill="#ff0000"/>
<path d="M568.6 266.07H632A2.6 2.6 0 0 1 634.6 268.67V281.87A2.6 2.6 0 0 1 632 284.47H568.6A2.6 2.6 0 0 1 566 281.87V268.67A2.6 2.6 0 0 1 568.6 266.07Z" fill="#b4c9e4"/>
<path d="M568.7 267.07H631.9A1.7 1.7 0 0 1 633.6 268.77V281.77A1.7 1.7 0 0 1 631.9 283.47H568.7A1.7 1.7 0 0 1 567 281.77V268.77A1.7 1.7 0 0 1 568.7 267.07Z" fill="#da2d33"/>
<path d="M567 268.07H633.6V281.77A1.7 1.7 0 0 1 631.9 283.47H568.7A1.7 1.7 0 0 1 567 281.77V268.07Z" fill="#ef1416"/>
<path d="M568.8 268.07H633.6V281.77A1.7 1.7 0 0 1 631.9 283.47H568.8A0.8 0.8 0 0 1 568 282.67V268.87A0.8 0.8 0 0 1 568.8 268.07Z" fill="#ff0000"/>
<path d="M639.6 266.07H658.7A2.6 2.6 0 0 1 661.3 268.67V281.87A2.6 2.6 0 0 1 658.7 284.47H639.6A2.6 2.6 0 0 1 637 281.87V268.67A2.6 2.6 0 0 1 639.6 266.07Z" fill="#b4c9e4"/>
<path d="M639.7 267.07H658.6A1.7 1.7 0 0 1 660.3 268.77V281.77A1.7 1.7 0 0 1 658.6 283.47H639.7A1.7 1.7 0 0 1 638 281.77V268.77A1.7 1.7 0 0 1 639.7 267.07Z" fill="#da2d33"/>
<path d="M638 268.07H660.3V281.77A1.7 1.7 0 0 1 658.6 283.47H639.7A1.7 1.7 0 0 1 638 281.77V268.07Z" fill="#ef1416"/>
<path d="M639.8 268.07H660.3V281.77A1.7 1.7 0 0 1 658.6 283.47H639.8A0.8 0.8 0 0 1 639 282.67V268.87A0.8 0.8 0 0 1 639.8 268.07Z" fill="#ff0000"/>
<path d="M666.3 266.07H685.3A2.6 2.6 0 0 1 687.9 268.67V281.87A2.6 2.6 0 0 1 685.3 284.47H666.3A2.6 2.6 0 0 1 663.7 281.87V268.67A2.6 2.6 0 0 1 666.3 266.07Z" fill="#b4c9e4"/>
<path d="M666.4 267.07H685.2A1.7 1.7 0 0 1 686.9 268.77V281.77A1.7 1.7 0 0 1 685.2 283.47H666.4A1.7 1.7 0 0 1 664.7 281.77V268.77A1.7 1.7 0 0 1 666.4 267.07Z" fill="#da2d33"/>
<path d="M664.7 268.07H686.9V281.77A1.7 1.7 0 0 1 685.2 283.47H666.4A1.7 1.7 0 0 1 664.7 281.77V268.07Z" fill="#ef1416"/>
<path d="M666.5 268.07H686.9V281.77A1.7 1.7 0 0 1 685.2 283.47H666.5A0.8 0.8 0 0 1 665.7 282.67V268.87A0.8 0.8 0 0 1 666.5 268.07Z" fill="#ff0000"/>
<path d="M693.2 266.07H757.4A2.6 2.6 0 0 1 760 268.67V281.87A2.6 2.6 0 0 1 757.4 284.47H693.2A2.6 2.6 0 0 1 690.6 281.87V268.67A2.6 2.6 0 0 1 693.2 266.07Z" fill="#b4c9e4"/>
<path d="M693.3 267.07H757.3A1.7 1.7 0 0 1 759 268.77V281.77A1.7 1.7 0 0 1 757.3 283.47H693.3A1.7 1.7 0 0 1 691.6 281.77V268.77A1.7 1.7 0 0 1 693.3 267.07Z" fill="#da2d33"/>
<path d="M691.6 268.07H759V281.77A1.7 1.7 0 0 1 757.3 283.47H693.3A1.7 1.7 0 0 1 691.6 281.77V268.07Z" fill="#ef1416"/>
<path d="M693.4 268.07H759V281.77A1.7 1.7 0 0 1 757.3 283.47H693.4A0.8 0.8 0 0 1 692.6 282.67V268.87A0.8 0.8 0 0 1 693.4 268.07Z" fill="#ff0000"/>
<path d="M765.6 266.07H827.9A2.6 2.6 0 0 1 830.5 268.67V281.87A2.6 2.6 0 0 1 827.9 284.47H765.6A2.6 2.6 0 0 1 763 281.87V268.67A2.6 2.6 0 0 1 765.6 266.07Z" fill="#b4c9e4"/>
<path d="M765.7 267.07H827.8A1.7 1.7 0 0 1 829.5 268.77V281.77A1.7 1.7 0 0 1 827.8 283.47H765.7A1.7 1.7 0 0 1 764 281.77V268.77A1.7 1.7 0 0 1 765.7 267.07Z" fill="#da2d33"/>
<path d="M764 268.07H829.5V281.77A1.7 1.7 0 0 1 827.8 283.47H765.7A1.7 1.7 0 0 1 764 281.77V268.07Z" fill="#ef1416"/>
<path d="M765.8 268.07H829.5V281.77A1.7 1.7 0 0 1 827.8 283.47H765.8A0.8 0.8 0 0 1 765 282.67V268.87A0.8 0.8 0 0 1 765.8 268.07Z" fill="#ff0000"/>
<path d="M835.9 266.07H848.6A3 3 0 0 1 851.6 269.07V281.47A3 3 0 0 1 848.6 284.47H835.9A3 3 0 0 1 832.9 281.47V269.07A3 3 0 0 1 835.9 266.07Z" fill="#dfe7f2"/>
<path d="M836.1 266.67H849A2.6 2.6 0 0 1 851.6 269.27V281.87A2.6 2.6 0 0 1 849 284.47H836.1A2.6 2.6 0 0 1 833.5 281.87V269.27A2.6 2.6 0 0 1 836.1 266.67Z" fill="#86a0c6"/>
<path d="M835.7 266.27H848.9A1.6 1.6 0 0 1 850.5 267.87V282.77A0.6 0.6 0 0 1 849.9 283.37H834.7A1.6 1.6 0 0 1 833.1 281.77V268.87A2.6 2.6 0 0 1 835.7 266.27Z" fill="#e9eef6"/>
<path d="M835.4 267.17H849A1.4 1.4 0 0 1 850.4 268.57V281.87A1.4 1.4 0 0 1 849 283.27H835.4A1.4 1.4 0 0 1 834 281.87V268.57A1.4 1.4 0 0 1 835.4 267.17Z" fill="#c1c1c1"/>
<svg x="832.9" y="266.07" width="18.7" height="18.4" viewBox="0 0 18.7 18.4"><path d="M2.6 3.8h4.6M4.8 1.6v4.4" stroke="#1a1a1a" stroke-width="1.1" fill="none"/><path d="M2.6 6.5h6V3.8l3.9 3.8-3.9 3.8V8.7h-6z" fill="#f20d0d"/></svg>
<path d="M25 287.76H66.3A2.6 2.6 0 0 1 68.9 290.36V303.56A2.6 2.6 0 0 1 66.3 306.16H25A2.6 2.6 0 0 1 22.4 303.56V290.36A2.6 2.6 0 0 1 25 287.76Z" fill="#b4c9e4"/>
<path d="M25.1 288.76H66.2A1.7 1.7 0 0 1 67.9 290.46V303.46A1.7 1.7 0 0 1 66.2 305.16H25.1A1.7 1.7 0 0 1 23.4 303.46V290.46A1.7 1.7 0 0 1 25.1 288.76Z" fill="#a4a8b0"/>
<path d="M23.4 289.76H67.9V303.46A1.7 1.7 0 0 1 66.2 305.16H25.1A1.7 1.7 0 0 1 23.4 303.46V289.76Z" fill="#a9adb5"/>
<path d="M25.2 289.76H67.9V303.46A1.7 1.7 0 0 1 66.2 305.16H25.2A0.8 0.8 0 0 1 24.4 304.36V290.56A0.8 0.8 0 0 1 25.2 289.76Z" fill="#ffffff"/>
<path d="M74.9 287.76H320.8A2.6 2.6 0 0 1 323.4 290.36V303.56A2.6 2.6 0 0 1 320.8 306.16H74.9A2.6 2.6 0 0 1 72.3 303.56V290.36A2.6 2.6 0 0 1 74.9 287.76Z" fill="#b4c9e4"/>
<path d="M75 288.76H320.7A1.7 1.7 0 0 1 322.4 290.46V303.46A1.7 1.7 0 0 1 320.7 305.16H75A1.7 1.7 0 0 1 73.3 303.46V290.46A1.7 1.7 0 0 1 75 288.76Z" fill="#a4a8b0"/>
<path d="M73.3 289.76H322.4V303.46A1.7 1.7 0 0 1 320.7 305.16H75A1.7 1.7 0 0 1 73.3 303.46V289.76Z" fill="#a9adb5"/>
<path d="M75.1 289.76H322.4V303.46A1.7 1.7 0 0 1 320.7 305.16H75.1A0.8 0.8 0 0 1 74.3 304.36V290.56A0.8 0.8 0 0 1 75.1 289.76Z" fill="#ffffff"/>
<path d="M328.4 287.76H391.8A2.6 2.6 0 0 1 394.4 290.36V303.56A2.6 2.6 0 0 1 391.8 306.16H328.4A2.6 2.6 0 0 1 325.8 303.56V290.36A2.6 2.6 0 0 1 328.4 287.76Z" fill="#b4c9e4"/>
<path d="M328.5 288.76H391.7A1.7 1.7 0 0 1 393.4 290.46V303.46A1.7 1.7 0 0 1 391.7 305.16H328.5A1.7 1.7 0 0 1 326.8 303.46V290.46A1.7 1.7 0 0 1 328.5 288.76Z" fill="#a4a8b0"/>
<path d="M326.8 289.76H393.4V303.46A1.7 1.7 0 0 1 391.7 305.16H328.5A1.7 1.7 0 0 1 326.8 303.46V289.76Z" fill="#a9adb5"/>
<path d="M328.6 289.76H393.4V303.46A1.7 1.7 0 0 1 391.7 305.16H328.6A0.8 0.8 0 0 1 327.8 304.36V290.56A0.8 0.8 0 0 1 328.6 289.76Z" fill="#ffffff"/>
<path d="M400.1 287.76H463.8A2.6 2.6 0 0 1 466.4 290.36V303.56A2.6 2.6 0 0 1 463.8 306.16H400.1A2.6 2.6 0 0 1 397.5 303.56V290.36A2.6 2.6 0 0 1 400.1 287.76Z" fill="#b4c9e4"/>
<path d="M400.2 288.76H463.7A1.7 1.7 0 0 1 465.4 290.46V303.46A1.7 1.7 0 0 1 463.7 305.16H400.2A1.7 1.7 0 0 1 398.5 303.46V290.46A1.7 1.7 0 0 1 400.2 288.76Z" fill="#da2d33"/>
<path d="M398.5 289.76H465.4V303.46A1.7 1.7 0 0 1 463.7 305.16H400.2A1.7 1.7 0 0 1 398.5 303.46V289.76Z" fill="#ef1416"/>
<path d="M400.3 289.76H465.4V303.46A1.7 1.7 0 0 1 463.7 305.16H400.3A0.8 0.8 0 0 1 399.5 304.36V290.56A0.8 0.8 0 0 1 400.3 289.76Z" fill="#ff0000"/>
<path d="M471.1 287.76H560.5A2.6 2.6 0 0 1 563.1 290.36V303.56A2.6 2.6 0 0 1 560.5 306.16H471.1A2.6 2.6 0 0 1 468.5 303.56V290.36A2.6 2.6 0 0 1 471.1 287.76Z" fill="#b4c9e4"/>
<path d="M471.2 288.76H560.4A1.7 1.7 0 0 1 562.1 290.46V303.46A1.7 1.7 0 0 1 560.4 305.16H471.2A1.7 1.7 0 0 1 469.5 303.46V290.46A1.7 1.7 0 0 1 471.2 288.76Z" fill="#da2d33"/>
<path d="M469.5 289.76H562.1V303.46A1.7 1.7 0 0 1 560.4 305.16H471.2A1.7 1.7 0 0 1 469.5 303.46V289.76Z" fill="#ef1416"/>
<path d="M471.3 289.76H562.1V303.46A1.7 1.7 0 0 1 560.4 305.16H471.3A0.8 0.8 0 0 1 470.5 304.36V290.56A0.8 0.8 0 0 1 471.3 289.76Z" fill="#ff0000"/>
<path d="M568.6 287.76H632A2.6 2.6 0 0 1 634.6 290.36V303.56A2.6 2.6 0 0 1 632 306.16H568.6A2.6 2.6 0 0 1 566 303.56V290.36A2.6 2.6 0 0 1 568.6 287.76Z" fill="#b4c9e4"/>
<path d="M568.7 288.76H631.9A1.7 1.7 0 0 1 633.6 290.46V303.46A1.7 1.7 0 0 1 631.9 305.16H568.7A1.7 1.7 0 0 1 567 303.46V290.46A1.7 1.7 0 0 1 568.7 288.76Z" fill="#da2d33"/>
<path d="M567 289.76H633.6V303.46A1.7 1.7 0 0 1 631.9 305.16H568.7A1.7 1.7 0 0 1 567 303.46V289.76Z" fill="#ef1416"/>
<path d="M568.8 289.76H633.6V303.46A1.7 1.7 0 0 1 631.9 305.16H568.8A0.8 0.8 0 0 1 568 304.36V290.56A0.8 0.8 0 0 1 568.8 289.76Z" fill="#ff0000"/>
<path d="M639.6 287.76H658.7A2.6 2.6 0 0 1 661.3 290.36V303.56A2.6 2.6 0 0 1 658.7 306.16H639.6A2.6 2.6 0 0 1 637 303.56V290.36A2.6 2.6 0 0 1 639.6 287.76Z" fill="#b4c9e4"/>
<path d="M639.7 288.76H658.6A1.7 1.7 0 0 1 660.3 290.46V303.46A1.7 1.7 0 0 1 658.6 305.16H639.7A1.7 1.7 0 0 1 638 303.46V290.46A1.7 1.7 0 0 1 639.7 288.76Z" fill="#da2d33"/>
<path d="M638 289.76H660.3V303.46A1.7 1.7 0 0 1 658.6 305.16H639.7A1.7 1.7 0 0 1 638 303.46V289.76Z" fill="#ef1416"/>
<path d="M639.8 289.76H660.3V303.46A1.7 1.7 0 0 1 658.6 305.16H639.8A0.8 0.8 0 0 1 639 304.36V290.56A0.8 0.8 0 0 1 639.8 289.76Z" fill="#ff0000"/>
<path d="M666.3 287.76H685.3A2.6 2.6 0 0 1 687.9 290.36V303.56A2.6 2.6 0 0 1 685.3 306.16H666.3A2.6 2.6 0 0 1 663.7 303.56V290.36A2.6 2.6 0 0 1 666.3 287.76Z" fill="#b4c9e4"/>
<path d="M666.4 288.76H685.2A1.7 1.7 0 0 1 686.9 290.46V303.46A1.7 1.7 0 0 1 685.2 305.16H666.4A1.7 1.7 0 0 1 664.7 303.46V290.46A1.7 1.7 0 0 1 666.4 288.76Z" fill="#da2d33"/>
<path d="M664.7 289.76H686.9V303.46A1.7 1.7 0 0 1 685.2 305.16H666.4A1.7 1.7 0 0 1 664.7 303.46V289.76Z" fill="#ef1416"/>
<path d="M666.5 289.76H686.9V303.46A1.7 1.7 0 0 1 685.2 305.16H666.5A0.8 0.8 0 0 1 665.7 304.36V290.56A0.8 0.8 0 0 1 666.5 289.76Z" fill="#ff0000"/>
<path d="M693.2 287.76H757.4A2.6 2.6 0 0 1 760 290.36V303.56A2.6 2.6 0 0 1 757.4 306.16H693.2A2.6 2.6 0 0 1 690.6 303.56V290.36A2.6 2.6 0 0 1 693.2 287.76Z" fill="#b4c9e4"/>
<path d="M693.3 288.76H757.3A1.7 1.7 0 0 1 759 290.46V303.46A1.7 1.7 0 0 1 757.3 305.16H693.3A1.7 1.7 0 0 1 691.6 303.46V290.46A1.7 1.7 0 0 1 693.3 288.76Z" fill="#da2d33"/>
<path d="M691.6 289.76H759V303.46A1.7 1.7 0 0 1 757.3 305.16H693.3A1.7 1.7 0 0 1 691.6 303.46V289.76Z" fill="#ef1416"/>
<path d="M693.4 289.76H759V303.46A1.7 1.7 0 0 1 757.3 305.16H693.4A0.8 0.8 0 0 1 692.6 304.36V290.56A0.8 0.8 0 0 1 693.4 289.76Z" fill="#ff0000"/>
<path d="M765.6 287.76H827.9A2.6 2.6 0 0 1 830.5 290.36V303.56A2.6 2.6 0 0 1 827.9 306.16H765.6A2.6 2.6 0 0 1 763 303.56V290.36A2.6 2.6 0 0 1 765.6 287.76Z" fill="#b4c9e4"/>
<path d="M765.7 288.76H827.8A1.7 1.7 0 0 1 829.5 290.46V303.46A1.7 1.7 0 0 1 827.8 305.16H765.7A1.7 1.7 0 0 1 764 303.46V290.46A1.7 1.7 0 0 1 765.7 288.76Z" fill="#da2d33"/>
<path d="M764 289.76H829.5V303.46A1.7 1.7 0 0 1 827.8 305.16H765.7A1.7 1.7 0 0 1 764 303.46V289.76Z" fill="#ef1416"/>
<path d="M765.8 289.76H829.5V303.46A1.7 1.7 0 0 1 827.8 305.16H765.8A0.8 0.8 0 0 1 765 304.36V290.56A0.8 0.8 0 0 1 765.8 289.76Z" fill="#ff0000"/>
<path d="M835.9 287.76H848.6A3 3 0 0 1 851.6 290.76V303.16A3 3 0 0 1 848.6 306.16H835.9A3 3 0 0 1 832.9 303.16V290.76A3 3 0 0 1 835.9 287.76Z" fill="#dfe7f2"/>
<path d="M836.1 288.36H849A2.6 2.6 0 0 1 851.6 290.96V303.56A2.6 2.6 0 0 1 849 306.16H836.1A2.6 2.6 0 0 1 833.5 303.56V290.96A2.6 2.6 0 0 1 836.1 288.36Z" fill="#86a0c6"/>
<path d="M835.7 287.96H848.9A1.6 1.6 0 0 1 850.5 289.56V304.46A0.6 0.6 0 0 1 849.9 305.06H834.7A1.6 1.6 0 0 1 833.1 303.46V290.56A2.6 2.6 0 0 1 835.7 287.96Z" fill="#e9eef6"/>
<path d="M835.4 288.86H849A1.4 1.4 0 0 1 850.4 290.26V303.56A1.4 1.4 0 0 1 849 304.96H835.4A1.4 1.4 0 0 1 834 303.56V290.26A1.4 1.4 0 0 1 835.4 288.86Z" fill="#c1c1c1"/>
<svg x="832.9" y="287.76" width="18.7" height="18.4" viewBox="0 0 18.7 18.4"><path d="M2.6 3.8h4.6M4.8 1.6v4.4" stroke="#1a1a1a" stroke-width="1.1" fill="none"/><path d="M2.6 6.5h6V3.8l3.9 3.8-3.9 3.8V8.7h-6z" fill="#f20d0d"/></svg>
<path d="M25 309.45H66.3A2.6 2.6 0 0 1 68.9 312.05V325.25A2.6 2.6 0 0 1 66.3 327.85H25A2.6 2.6 0 0 1 22.4 325.25V312.05A2.6 2.6 0 0 1 25 309.45Z" fill="#b4c9e4"/>
<path d="M25.1 310.45H66.2A1.7 1.7 0 0 1 67.9 312.15V325.15A1.7 1.7 0 0 1 66.2 326.85H25.1A1.7 1.7 0 0 1 23.4 325.15V312.15A1.7 1.7 0 0 1 25.1 310.45Z" fill="#a4a8b0"/>
<path d="M23.4 311.45H67.9V325.15A1.7 1.7 0 0 1 66.2 326.85H25.1A1.7 1.7 0 0 1 23.4 325.15V311.45Z" fill="#a9adb5"/>
<path d="M25.2 311.45H67.9V325.15A1.7 1.7 0 0 1 66.2 326.85H25.2A0.8 0.8 0 0 1 24.4 326.05V312.25A0.8 0.8 0 0 1 25.2 311.45Z" fill="#ffffff"/>
<path d="M74.9 309.45H320.8A2.6 2.6 0 0 1 323.4 312.05V325.25A2.6 2.6 0 0 1 320.8 327.85H74.9A2.6 2.6 0 0 1 72.3 325.25V312.05A2.6 2.6 0 0 1 74.9 309.45Z" fill="#b4c9e4"/>
<path d="M75 310.45H320.7A1.7 1.7 0 0 1 322.4 312.15V325.15A1.7 1.7 0 0 1 320.7 326.85H75A1.7 1.7 0 0 1 73.3 325.15V312.15A1.7 1.7 0 0 1 75 310.45Z" fill="#a4a8b0"/>
<path d="M73.3 311.45H322.4V325.15A1.7 1.7 0 0 1 320.7 326.85H75A1.7 1.7 0 0 1 73.3 325.15V311.45Z" fill="#a9adb5"/>
<path d="M75.1 311.45H322.4V325.15A1.7 1.7 0 0 1 320.7 326.85H75.1A0.8 0.8 0 0 1 74.3 326.05V312.25A0.8 0.8 0 0 1 75.1 311.45Z" fill="#ffffff"/>
<path d="M328.4 309.45H391.8A2.6 2.6 0 0 1 394.4 312.05V325.25A2.6 2.6 0 0 1 391.8 327.85H328.4A2.6 2.6 0 0 1 325.8 325.25V312.05A2.6 2.6 0 0 1 328.4 309.45Z" fill="#b4c9e4"/>
<path d="M328.5 310.45H391.7A1.7 1.7 0 0 1 393.4 312.15V325.15A1.7 1.7 0 0 1 391.7 326.85H328.5A1.7 1.7 0 0 1 326.8 325.15V312.15A1.7 1.7 0 0 1 328.5 310.45Z" fill="#a4a8b0"/>
<path d="M326.8 311.45H393.4V325.15A1.7 1.7 0 0 1 391.7 326.85H328.5A1.7 1.7 0 0 1 326.8 325.15V311.45Z" fill="#a9adb5"/>
<path d="M328.6 311.45H393.4V325.15A1.7 1.7 0 0 1 391.7 326.85H328.6A0.8 0.8 0 0 1 327.8 326.05V312.25A0.8 0.8 0 0 1 328.6 311.45Z" fill="#ffffff"/>
<path d="M400.1 309.45H463.8A2.6 2.6 0 0 1 466.4 312.05V325.25A2.6 2.6 0 0 1 463.8 327.85H400.1A2.6 2.6 0 0 1 397.5 325.25V312.05A2.6 2.6 0 0 1 400.1 309.45Z" fill="#b4c9e4"/>
<path d="M400.2 310.45H463.7A1.7 1.7 0 0 1 465.4 312.15V325.15A1.7 1.7 0 0 1 463.7 326.85H400.2A1.7 1.7 0 0 1 398.5 325.15V312.15A1.7 1.7 0 0 1 400.2 310.45Z" fill="#da2d33"/>
<path d="M398.5 311.45H465.4V325.15A1.7 1.7 0 0 1 463.7 326.85H400.2A1.7 1.7 0 0 1 398.5 325.15V311.45Z" fill="#ef1416"/>
<path d="M400.3 311.45H465.4V325.15A1.7 1.7 0 0 1 463.7 326.85H400.3A0.8 0.8 0 0 1 399.5 326.05V312.25A0.8 0.8 0 0 1 400.3 311.45Z" fill="#ff0000"/>
<path d="M471.1 309.45H560.5A2.6 2.6 0 0 1 563.1 312.05V325.25A2.6 2.6 0 0 1 560.5 327.85H471.1A2.6 2.6 0 0 1 468.5 325.25V312.05A2.6 2.6 0 0 1 471.1 309.45Z" fill="#b4c9e4"/>
<path d="M471.2 310.45H560.4A1.7 1.7 0 0 1 562.1 312.15V325.15A1.7 1.7 0 0 1 560.4 326.85H471.2A1.7 1.7 0 0 1 469.5 325.15V312.15A1.7 1.7 0 0 1 471.2 310.45Z" fill="#da2d33"/>
<path d="M469.5 311.45H562.1V325.15A1.7 1.7 0 0 1 560.4 326.85H471.2A1.7 1.7 0 0 1 469.5 325.15V311.45Z" fill="#ef1416"/>
<path d="M471.3 311.45H562.1V325.15A1.7 1.7 0 0 1 560.4 326.85H471.3A0.8 0.8 0 0 1 470.5 326.05V312.25A0.8 0.8 0 0 1 471.3 311.45Z" fill="#ff0000"/>
<path d="M568.6 309.45H632A2.6 2.6 0 0 1 634.6 312.05V325.25A2.6 2.6 0 0 1 632 327.85H568.6A2.6 2.6 0 0 1 566 325.25V312.05A2.6 2.6 0 0 1 568.6 309.45Z" fill="#b4c9e4"/>
<path d="M568.7 310.45H631.9A1.7 1.7 0 0 1 633.6 312.15V325.15A1.7 1.7 0 0 1 631.9 326.85H568.7A1.7 1.7 0 0 1 567 325.15V312.15A1.7 1.7 0 0 1 568.7 310.45Z" fill="#da2d33"/>
<path d="M567 311.45H633.6V325.15A1.7 1.7 0 0 1 631.9 326.85H568.7A1.7 1.7 0 0 1 567 325.15V311.45Z" fill="#ef1416"/>
<path d="M568.8 311.45H633.6V325.15A1.7 1.7 0 0 1 631.9 326.85H568.8A0.8 0.8 0 0 1 568 326.05V312.25A0.8 0.8 0 0 1 568.8 311.45Z" fill="#ff0000"/>
<path d="M639.6 309.45H658.7A2.6 2.6 0 0 1 661.3 312.05V325.25A2.6 2.6 0 0 1 658.7 327.85H639.6A2.6 2.6 0 0 1 637 325.25V312.05A2.6 2.6 0 0 1 639.6 309.45Z" fill="#b4c9e4"/>
<path d="M639.7 310.45H658.6A1.7 1.7 0 0 1 660.3 312.15V325.15A1.7 1.7 0 0 1 658.6 326.85H639.7A1.7 1.7 0 0 1 638 325.15V312.15A1.7 1.7 0 0 1 639.7 310.45Z" fill="#da2d33"/>
<path d="M638 311.45H660.3V325.15A1.7 1.7 0 0 1 658.6 326.85H639.7A1.7 1.7 0 0 1 638 325.15V311.45Z" fill="#ef1416"/>
<path d="M639.8 311.45H660.3V325.15A1.7 1.7 0 0 1 658.6 326.85H639.8A0.8 0.8 0 0 1 639 326.05V312.25A0.8 0.8 0 0 1 639.8 311.45Z" fill="#ff0000"/>
<path d="M666.3 309.45H685.3A2.6 2.6 0 0 1 687.9 312.05V325.25A2.6 2.6 0 0 1 685.3 327.85H666.3A2.6 2.6 0 0 1 663.7 325.25V312.05A2.6 2.6 0 0 1 666.3 309.45Z" fill="#b4c9e4"/>
<path d="M666.4 310.45H685.2A1.7 1.7 0 0 1 686.9 312.15V325.15A1.7 1.7 0 0 1 685.2 326.85H666.4A1.7 1.7 0 0 1 664.7 325.15V312.15A1.7 1.7 0 0 1 666.4 310.45Z" fill="#da2d33"/>
<path d="M664.7 311.45H686.9V325.15A1.7 1.7 0 0 1 685.2 326.85H666.4A1.7 1.7 0 0 1 664.7 325.15V311.45Z" fill="#ef1416"/>
<path d="M666.5 311.45H686.9V325.15A1.7 1.7 0 0 1 685.2 326.85H666.5A0.8 0.8 0 0 1 665.7 326.05V312.25A0.8 0.8 0 0 1 666.5 311.45Z" fill="#ff0000"/>
<path d="M693.2 309.45H757.4A2.6 2.6 0 0 1 760 312.05V325.25A2.6 2.6 0 0 1 757.4 327.85H693.2A2.6 2.6 0 0 1 690.6 325.25V312.05A2.6 2.6 0 0 1 693.2 309.45Z" fill="#b4c9e4"/>
<path d="M693.3 310.45H757.3A1.7 1.7 0 0 1 759 312.15V325.15A1.7 1.7 0 0 1 757.3 326.85H693.3A1.7 1.7 0 0 1 691.6 325.15V312.15A1.7 1.7 0 0 1 693.3 310.45Z" fill="#da2d33"/>
<path d="M691.6 311.45H759V325.15A1.7 1.7 0 0 1 757.3 326.85H693.3A1.7 1.7 0 0 1 691.6 325.15V311.45Z" fill="#ef1416"/>
<path d="M693.4 311.45H759V325.15A1.7 1.7 0 0 1 757.3 326.85H693.4A0.8 0.8 0 0 1 692.6 326.05V312.25A0.8 0.8 0 0 1 693.4 311.45Z" fill="#ff0000"/>
<path d="M765.6 309.45H827.9A2.6 2.6 0 0 1 830.5 312.05V325.25A2.6 2.6 0 0 1 827.9 327.85H765.6A2.6 2.6 0 0 1 763 325.25V312.05A2.6 2.6 0 0 1 765.6 309.45Z" fill="#b4c9e4"/>
<path d="M765.7 310.45H827.8A1.7 1.7 0 0 1 829.5 312.15V325.15A1.7 1.7 0 0 1 827.8 326.85H765.7A1.7 1.7 0 0 1 764 325.15V312.15A1.7 1.7 0 0 1 765.7 310.45Z" fill="#da2d33"/>
<path d="M764 311.45H829.5V325.15A1.7 1.7 0 0 1 827.8 326.85H765.7A1.7 1.7 0 0 1 764 325.15V311.45Z" fill="#ef1416"/>
<path d="M765.8 311.45H829.5V325.15A1.7 1.7 0 0 1 827.8 326.85H765.8A0.8 0.8 0 0 1 765 326.05V312.25A0.8 0.8 0 0 1 765.8 311.45Z" fill="#ff0000"/>
<path d="M835.9 309.45H848.6A3 3 0 0 1 851.6 312.45V324.85A3 3 0 0 1 848.6 327.85H835.9A3 3 0 0 1 832.9 324.85V312.45A3 3 0 0 1 835.9 309.45Z" fill="#dfe7f2"/>
<path d="M836.1 310.05H849A2.6 2.6 0 0 1 851.6 312.65V325.25A2.6 2.6 0 0 1 849 327.85H836.1A2.6 2.6 0 0 1 833.5 325.25V312.65A2.6 2.6 0 0 1 836.1 310.05Z" fill="#86a0c6"/>
<path d="M835.7 309.65H848.9A1.6 1.6 0 0 1 850.5 311.25V326.15A0.6 0.6 0 0 1 849.9 326.75H834.7A1.6 1.6 0 0 1 833.1 325.15V312.25A2.6 2.6 0 0 1 835.7 309.65Z" fill="#e9eef6"/>
<path d="M835.4 310.55H849A1.4 1.4 0 0 1 850.4 311.95V325.25A1.4 1.4 0 0 1 849 326.65H835.4A1.4 1.4 0 0 1 834 325.25V311.95A1.4 1.4 0 0 1 835.4 310.55Z" fill="#c1c1c1"/>
<svg x="832.9" y="309.45" width="18.7" height="18.4" viewBox="0 0 18.7 18.4"><path d="M2.6 3.8h4.6M4.8 1.6v4.4" stroke="#1a1a1a" stroke-width="1.1" fill="none"/><path d="M2.6 6.5h6V3.8l3.9 3.8-3.9 3.8V8.7h-6z" fill="#f20d0d"/></svg>
<path d="M25 331.14H66.3A2.6 2.6 0 0 1 68.9 333.74V346.94A2.6 2.6 0 0 1 66.3 349.54H25A2.6 2.6 0 0 1 22.4 346.94V333.74A2.6 2.6 0 0 1 25 331.14Z" fill="#b4c9e4"/>
<path d="M25.1 332.14H66.2A1.7 1.7 0 0 1 67.9 333.84V346.84A1.7 1.7 0 0 1 66.2 348.54H25.1A1.7 1.7 0 0 1 23.4 346.84V333.84A1.7 1.7 0 0 1 25.1 332.14Z" fill="#a4a8b0"/>
<path d="M23.4 333.14H67.9V346.84A1.7 1.7 0 0 1 66.2 348.54H25.1A1.7 1.7 0 0 1 23.4 346.84V333.14Z" fill="#a9adb5"/>
<path d="M25.2 333.14H67.9V346.84A1.7 1.7 0 0 1 66.2 348.54H25.2A0.8 0.8 0 0 1 24.4 347.74V333.94A0.8 0.8 0 0 1 25.2 333.14Z" fill="#ffffff"/>
<path d="M74.9 331.14H320.8A2.6 2.6 0 0 1 323.4 333.74V346.94A2.6 2.6 0 0 1 320.8 349.54H74.9A2.6 2.6 0 0 1 72.3 346.94V333.74A2.6 2.6 0 0 1 74.9 331.14Z" fill="#b4c9e4"/>
<path d="M75 332.14H320.7A1.7 1.7 0 0 1 322.4 333.84V346.84A1.7 1.7 0 0 1 320.7 348.54H75A1.7 1.7 0 0 1 73.3 346.84V333.84A1.7 1.7 0 0 1 75 332.14Z" fill="#a4a8b0"/>
<path d="M73.3 333.14H322.4V346.84A1.7 1.7 0 0 1 320.7 348.54H75A1.7 1.7 0 0 1 73.3 346.84V333.14Z" fill="#a9adb5"/>
<path d="M75.1 333.14H322.4V346.84A1.7 1.7 0 0 1 320.7 348.54H75.1A0.8 0.8 0 0 1 74.3 347.74V333.94A0.8 0.8 0 0 1 75.1 333.14Z" fill="#ffffff"/>
<path d="M328.4 331.14H391.8A2.6 2.6 0 0 1 394.4 333.74V346.94A2.6 2.6 0 0 1 391.8 349.54H328.4A2.6 2.6 0 0 1 325.8 346.94V333.74A2.6 2.6 0 0 1 328.4 331.14Z" fill="#b4c9e4"/>
<path d="M328.5 332.14H391.7A1.7 1.7 0 0 1 393.4 333.84V346.84A1.7 1.7 0 0 1 391.7 348.54H328.5A1.7 1.7 0 0 1 326.8 346.84V333.84A1.7 1.7 0 0 1 328.5 332.14Z" fill="#a4a8b0"/>
<path d="M326.8 333.14H393.4V346.84A1.7 1.7 0 0 1 391.7 348.54H328.5A1.7 1.7 0 0 1 326.8 346.84V333.14Z" fill="#a9adb5"/>
<path d="M328.6 333.14H393.4V346.84A1.7 1.7 0 0 1 391.7 348.54H328.6A0.8 0.8 0 0 1 327.8 347.74V333.94A0.8 0.8 0 0 1 328.6 333.14Z" fill="#ffffff"/>
<path d="M400.1 331.14H463.8A2.6 2.6 0 0 1 466.4 333.74V346.94A2.6 2.6 0 0 1 463.8 349.54H400.1A2.6 2.6 0 0 1 397.5 346.94V333.74A2.6 2.6 0 0 1 400.1 331.14Z" fill="#b4c9e4"/>
<path d="M400.2 332.14H463.7A1.7 1.7 0 0 1 465.4 333.84V346.84A1.7 1.7 0 0 1 463.7 348.54H400.2A1.7 1.7 0 0 1 398.5 346.84V333.84A1.7 1.7 0 0 1 400.2 332.14Z" fill="#da2d33"/>
<path d="M398.5 333.14H465.4V346.84A1.7 1.7 0 0 1 463.7 348.54H400.2A1.7 1.7 0 0 1 398.5 346.84V333.14Z" fill="#ef1416"/>
<path d="M400.3 333.14H465.4V346.84A1.7 1.7 0 0 1 463.7 348.54H400.3A0.8 0.8 0 0 1 399.5 347.74V333.94A0.8 0.8 0 0 1 400.3 333.14Z" fill="#ff0000"/>
<path d="M471.1 331.14H560.5A2.6 2.6 0 0 1 563.1 333.74V346.94A2.6 2.6 0 0 1 560.5 349.54H471.1A2.6 2.6 0 0 1 468.5 346.94V333.74A2.6 2.6 0 0 1 471.1 331.14Z" fill="#b4c9e4"/>
<path d="M471.2 332.14H560.4A1.7 1.7 0 0 1 562.1 333.84V346.84A1.7 1.7 0 0 1 560.4 348.54H471.2A1.7 1.7 0 0 1 469.5 346.84V333.84A1.7 1.7 0 0 1 471.2 332.14Z" fill="#da2d33"/>
<path d="M469.5 333.14H562.1V346.84A1.7 1.7 0 0 1 560.4 348.54H471.2A1.7 1.7 0 0 1 469.5 346.84V333.14Z" fill="#ef1416"/>
<path d="M471.3 333.14H562.1V346.84A1.7 1.7 0 0 1 560.4 348.54H471.3A0.8 0.8 0 0 1 470.5 347.74V333.94A0.8 0.8 0 0 1 471.3 333.14Z" fill="#ff0000"/>
<path d="M568.6 331.14H632A2.6 2.6 0 0 1 634.6 333.74V346.94A2.6 2.6 0 0 1 632 349.54H568.6A2.6 2.6 0 0 1 566 346.94V333.74A2.6 2.6 0 0 1 568.6 331.14Z" fill="#b4c9e4"/>
<path d="M568.7 332.14H631.9A1.7 1.7 0 0 1 633.6 333.84V346.84A1.7 1.7 0 0 1 631.9 348.54H568.7A1.7 1.7 0 0 1 567 346.84V333.84A1.7 1.7 0 0 1 568.7 332.14Z" fill="#da2d33"/>
<path d="M567 333.14H633.6V346.84A1.7 1.7 0 0 1 631.9 348.54H568.7A1.7 1.7 0 0 1 567 346.84V333.14Z" fill="#ef1416"/>
<path d="M568.8 333.14H633.6V346.84A1.7 1.7 0 0 1 631.9 348.54H568.8A0.8 0.8 0 0 1 568 347.74V333.94A0.8 0.8 0 0 1 568.8 333.14Z" fill="#ff0000"/>
<path d="M639.6 331.14H658.7A2.6 2.6 0 0 1 661.3 333.74V346.94A2.6 2.6 0 0 1 658.7 349.54H639.6A2.6 2.6 0 0 1 637 346.94V333.74A2.6 2.6 0 0 1 639.6 331.14Z" fill="#b4c9e4"/>
<path d="M639.7 332.14H658.6A1.7 1.7 0 0 1 660.3 333.84V346.84A1.7 1.7 0 0 1 658.6 348.54H639.7A1.7 1.7 0 0 1 638 346.84V333.84A1.7 1.7 0 0 1 639.7 332.14Z" fill="#da2d33"/>
<path d="M638 333.14H660.3V346.84A1.7 1.7 0 0 1 658.6 348.54H639.7A1.7 1.7 0 0 1 638 346.84V333.14Z" fill="#ef1416"/>
<path d="M639.8 333.14H660.3V346.84A1.7 1.7 0 0 1 658.6 348.54H639.8A0.8 0.8 0 0 1 639 347.74V333.94A0.8 0.8 0 0 1 639.8 333.14Z" fill="#ff0000"/>
<path d="M666.3 331.14H685.3A2.6 2.6 0 0 1 687.9 333.74V346.94A2.6 2.6 0 0 1 685.3 349.54H666.3A2.6 2.6 0 0 1 663.7 346.94V333.74A2.6 2.6 0 0 1 666.3 331.14Z" fill="#b4c9e4"/>
<path d="M666.4 332.14H685.2A1.7 1.7 0 0 1 686.9 333.84V346.84A1.7 1.7 0 0 1 685.2 348.54H666.4A1.7 1.7 0 0 1 664.7 346.84V333.84A1.7 1.7 0 0 1 666.4 332.14Z" fill="#da2d33"/>
<path d="M664.7 333.14H686.9V346.84A1.7 1.7 0 0 1 685.2 348.54H666.4A1.7 1.7 0 0 1 664.7 346.84V333.14Z" fill="#ef1416"/>
<path d="M666.5 333.14H686.9V346.84A1.7 1.7 0 0 1 685.2 348.54H666.5A0.8 0.8 0 0 1 665.7 347.74V333.94A0.8 0.8 0 0 1 666.5 333.14Z" fill="#ff0000"/>
<path d="M693.2 331.14H757.4A2.6 2.6 0 0 1 760 333.74V346.94A2.6 2.6 0 0 1 757.4 349.54H693.2A2.6 2.6 0 0 1 690.6 346.94V333.74A2.6 2.6 0 0 1 693.2 331.14Z" fill="#b4c9e4"/>
<path d="M693.3 332.14H757.3A1.7 1.7 0 0 1 759 333.84V346.84A1.7 1.7 0 0 1 757.3 348.54H693.3A1.7 1.7 0 0 1 691.6 346.84V333.84A1.7 1.7 0 0 1 693.3 332.14Z" fill="#da2d33"/>
<path d="M691.6 333.14H759V346.84A1.7 1.7 0 0 1 757.3 348.54H693.3A1.7 1.7 0 0 1 691.6 346.84V333.14Z" fill="#ef1416"/>
<path d="M693.4 333.14H759V346.84A1.7 1.7 0 0 1 757.3 348.54H693.4A0.8 0.8 0 0 1 692.6 347.74V333.94A0.8 0.8 0 0 1 693.4 333.14Z" fill="#ff0000"/>
<path d="M765.6 331.14H827.9A2.6 2.6 0 0 1 830.5 333.74V346.94A2.6 2.6 0 0 1 827.9 349.54H765.6A2.6 2.6 0 0 1 763 346.94V333.74A2.6 2.6 0 0 1 765.6 331.14Z" fill="#b4c9e4"/>
<path d="M765.7 332.14H827.8A1.7 1.7 0 0 1 829.5 333.84V346.84A1.7 1.7 0 0 1 827.8 348.54H765.7A1.7 1.7 0 0 1 764 346.84V333.84A1.7 1.7 0 0 1 765.7 332.14Z" fill="#da2d33"/>
<path d="M764 333.14H829.5V346.84A1.7 1.7 0 0 1 827.8 348.54H765.7A1.7 1.7 0 0 1 764 346.84V333.14Z" fill="#ef1416"/>
<path d="M765.8 333.14H829.5V346.84A1.7 1.7 0 0 1 827.8 348.54H765.8A0.8 0.8 0 0 1 765 347.74V333.94A0.8 0.8 0 0 1 765.8 333.14Z" fill="#ff0000"/>
<path d="M835.9 331.14H848.6A3 3 0 0 1 851.6 334.14V346.54A3 3 0 0 1 848.6 349.54H835.9A3 3 0 0 1 832.9 346.54V334.14A3 3 0 0 1 835.9 331.14Z" fill="#dfe7f2"/>
<path d="M836.1 331.74H849A2.6 2.6 0 0 1 851.6 334.34V346.94A2.6 2.6 0 0 1 849 349.54H836.1A2.6 2.6 0 0 1 833.5 346.94V334.34A2.6 2.6 0 0 1 836.1 331.74Z" fill="#86a0c6"/>
<path d="M835.7 331.34H848.9A1.6 1.6 0 0 1 850.5 332.94V347.84A0.6 0.6 0 0 1 849.9 348.44H834.7A1.6 1.6 0 0 1 833.1 346.84V333.94A2.6 2.6 0 0 1 835.7 331.34Z" fill="#e9eef6"/>
<path d="M835.4 332.24H849A1.4 1.4 0 0 1 850.4 333.64V346.94A1.4 1.4 0 0 1 849 348.34H835.4A1.4 1.4 0 0 1 834 346.94V333.64A1.4 1.4 0 0 1 835.4 332.24Z" fill="#c1c1c1"/>
<svg x="832.9" y="331.14" width="18.7" height="18.4" viewBox="0 0 18.7 18.4"><path d="M2.6 3.8h4.6M4.8 1.6v4.4" stroke="#1a1a1a" stroke-width="1.1" fill="none"/><path d="M2.6 6.5h6V3.8l3.9 3.8-3.9 3.8V8.7h-6z" fill="#f20d0d"/></svg>
<path d="M25 352.83H66.3A2.6 2.6 0 0 1 68.9 355.43V368.63A2.6 2.6 0 0 1 66.3 371.23H25A2.6 2.6 0 0 1 22.4 368.63V355.43A2.6 2.6 0 0 1 25 352.83Z" fill="#b4c9e4"/>
<path d="M25.1 353.83H66.2A1.7 1.7 0 0 1 67.9 355.53V368.53A1.7 1.7 0 0 1 66.2 370.23H25.1A1.7 1.7 0 0 1 23.4 368.53V355.53A1.7 1.7 0 0 1 25.1 353.83Z" fill="#a4a8b0"/>
<path d="M23.4 354.83H67.9V368.53A1.7 1.7 0 0 1 66.2 370.23H25.1A1.7 1.7 0 0 1 23.4 368.53V354.83Z" fill="#a9adb5"/>
<path d="M25.2 354.83H67.9V368.53A1.7 1.7 0 0 1 66.2 370.23H25.2A0.8 0.8 0 0 1 24.4 369.43V355.63A0.8 0.8 0 0 1 25.2 354.83Z" fill="#ffffff"/>
<path d="M74.9 352.83H320.8A2.6 2.6 0 0 1 323.4 355.43V368.63A2.6 2.6 0 0 1 320.8 371.23H74.9A2.6 2.6 0 0 1 72.3 368.63V355.43A2.6 2.6 0 0 1 74.9 352.83Z" fill="#b4c9e4"/>
<path d="M75 353.83H320.7A1.7 1.7 0 0 1 322.4 355.53V368.53A1.7 1.7 0 0 1 320.7 370.23H75A1.7 1.7 0 0 1 73.3 368.53V355.53A1.7 1.7 0 0 1 75 353.83Z" fill="#a4a8b0"/>
<path d="M73.3 354.83H322.4V368.53A1.7 1.7 0 0 1 320.7 370.23H75A1.7 1.7 0 0 1 73.3 368.53V354.83Z" fill="#a9adb5"/>
<path d="M75.1 354.83H322.4V368.53A1.7 1.7 0 0 1 320.7 370.23H75.1A0.8 0.8 0 0 1 74.3 369.43V355.63A0.8 0.8 0 0 1 75.1 354.83Z" fill="#ffffff"/>
<path d="M328.4 352.83H391.8A2.6 2.6 0 0 1 394.4 355.43V368.63A2.6 2.6 0 0 1 391.8 371.23H328.4A2.6 2.6 0 0 1 325.8 368.63V355.43A2.6 2.6 0 0 1 328.4 352.83Z" fill="#b4c9e4"/>
<path d="M328.5 353.83H391.7A1.7 1.7 0 0 1 393.4 355.53V368.53A1.7 1.7 0 0 1 391.7 370.23H328.5A1.7 1.7 0 0 1 326.8 368.53V355.53A1.7 1.7 0 0 1 328.5 353.83Z" fill="#a4a8b0"/>
<path d="M326.8 354.83H393.4V368.53A1.7 1.7 0 0 1 391.7 370.23H328.5A1.7 1.7 0 0 1 326.8 368.53V354.83Z" fill="#a9adb5"/>
<path d="M328.6 354.83H393.4V368.53A1.7 1.7 0 0 1 391.7 370.23H328.6A0.8 0.8 0 0 1 327.8 369.43V355.63A0.8 0.8 0 0 1 328.6 354.83Z" fill="#ffffff"/>
<path d="M400.1 352.83H463.8A2.6 2.6 0 0 1 466.4 355.43V368.63A2.6 2.6 0 0 1 463.8 371.23H400.1A2.6 2.6 0 0 1 397.5 368.63V355.43A2.6 2.6 0 0 1 400.1 352.83Z" fill="#b4c9e4"/>
<path d="M400.2 353.83H463.7A1.7 1.7 0 0 1 465.4 355.53V368.53A1.7 1.7 0 0 1 463.7 370.23H400.2A1.7 1.7 0 0 1 398.5 368.53V355.53A1.7 1.7 0 0 1 400.2 353.83Z" fill="#da2d33"/>
<path d="M398.5 354.83H465.4V368.53A1.7 1.7 0 0 1 463.7 370.23H400.2A1.7 1.7 0 0 1 398.5 368.53V354.83Z" fill="#ef1416"/>
<path d="M400.3 354.83H465.4V368.53A1.7 1.7 0 0 1 463.7 370.23H400.3A0.8 0.8 0 0 1 399.5 369.43V355.63A0.8 0.8 0 0 1 400.3 354.83Z" fill="#ff0000"/>
<path d="M471.1 352.83H560.5A2.6 2.6 0 0 1 563.1 355.43V368.63A2.6 2.6 0 0 1 560.5 371.23H471.1A2.6 2.6 0 0 1 468.5 368.63V355.43A2.6 2.6 0 0 1 471.1 352.83Z" fill="#b4c9e4"/>
<path d="M471.2 353.83H560.4A1.7 1.7 0 0 1 562.1 355.53V368.53A1.7 1.7 0 0 1 560.4 370.23H471.2A1.7 1.7 0 0 1 469.5 368.53V355.53A1.7 1.7 0 0 1 471.2 353.83Z" fill="#da2d33"/>
<path d="M469.5 354.83H562.1V368.53A1.7 1.7 0 0 1 560.4 370.23H471.2A1.7 1.7 0 0 1 469.5 368.53V354.83Z" fill="#ef1416"/>
<path d="M471.3 354.83H562.1V368.53A1.7 1.7 0 0 1 560.4 370.23H471.3A0.8 0.8 0 0 1 470.5 369.43V355.63A0.8 0.8 0 0 1 471.3 354.83Z" fill="#ff0000"/>
<path d="M568.6 352.83H632A2.6 2.6 0 0 1 634.6 355.43V368.63A2.6 2.6 0 0 1 632 371.23H568.6A2.6 2.6 0 0 1 566 368.63V355.43A2.6 2.6 0 0 1 568.6 352.83Z" fill="#b4c9e4"/>
<path d="M568.7 353.83H631.9A1.7 1.7 0 0 1 633.6 355.53V368.53A1.7 1.7 0 0 1 631.9 370.23H568.7A1.7 1.7 0 0 1 567 368.53V355.53A1.7 1.7 0 0 1 568.7 353.83Z" fill="#da2d33"/>
<path d="M567 354.83H633.6V368.53A1.7 1.7 0 0 1 631.9 370.23H568.7A1.7 1.7 0 0 1 567 368.53V354.83Z" fill="#ef1416"/>
<path d="M568.8 354.83H633.6V368.53A1.7 1.7 0 0 1 631.9 370.23H568.8A0.8 0.8 0 0 1 568 369.43V355.63A0.8 0.8 0 0 1 568.8 354.83Z" fill="#ff0000"/>
<path d="M639.6 352.83H658.7A2.6 2.6 0 0 1 661.3 355.43V368.63A2.6 2.6 0 0 1 658.7 371.23H639.6A2.6 2.6 0 0 1 637 368.63V355.43A2.6 2.6 0 0 1 639.6 352.83Z" fill="#b4c9e4"/>
<path d="M639.7 353.83H658.6A1.7 1.7 0 0 1 660.3 355.53V368.53A1.7 1.7 0 0 1 658.6 370.23H639.7A1.7 1.7 0 0 1 638 368.53V355.53A1.7 1.7 0 0 1 639.7 353.83Z" fill="#da2d33"/>
<path d="M638 354.83H660.3V368.53A1.7 1.7 0 0 1 658.6 370.23H639.7A1.7 1.7 0 0 1 638 368.53V354.83Z" fill="#ef1416"/>
<path d="M639.8 354.83H660.3V368.53A1.7 1.7 0 0 1 658.6 370.23H639.8A0.8 0.8 0 0 1 639 369.43V355.63A0.8 0.8 0 0 1 639.8 354.83Z" fill="#ff0000"/>
<path d="M666.3 352.83H685.3A2.6 2.6 0 0 1 687.9 355.43V368.63A2.6 2.6 0 0 1 685.3 371.23H666.3A2.6 2.6 0 0 1 663.7 368.63V355.43A2.6 2.6 0 0 1 666.3 352.83Z" fill="#b4c9e4"/>
<path d="M666.4 353.83H685.2A1.7 1.7 0 0 1 686.9 355.53V368.53A1.7 1.7 0 0 1 685.2 370.23H666.4A1.7 1.7 0 0 1 664.7 368.53V355.53A1.7 1.7 0 0 1 666.4 353.83Z" fill="#da2d33"/>
<path d="M664.7 354.83H686.9V368.53A1.7 1.7 0 0 1 685.2 370.23H666.4A1.7 1.7 0 0 1 664.7 368.53V354.83Z" fill="#ef1416"/>
<path d="M666.5 354.83H686.9V368.53A1.7 1.7 0 0 1 685.2 370.23H666.5A0.8 0.8 0 0 1 665.7 369.43V355.63A0.8 0.8 0 0 1 666.5 354.83Z" fill="#ff0000"/>
<path d="M693.2 352.83H757.4A2.6 2.6 0 0 1 760 355.43V368.63A2.6 2.6 0 0 1 757.4 371.23H693.2A2.6 2.6 0 0 1 690.6 368.63V355.43A2.6 2.6 0 0 1 693.2 352.83Z" fill="#b4c9e4"/>
<path d="M693.3 353.83H757.3A1.7 1.7 0 0 1 759 355.53V368.53A1.7 1.7 0 0 1 757.3 370.23H693.3A1.7 1.7 0 0 1 691.6 368.53V355.53A1.7 1.7 0 0 1 693.3 353.83Z" fill="#da2d33"/>
<path d="M691.6 354.83H759V368.53A1.7 1.7 0 0 1 757.3 370.23H693.3A1.7 1.7 0 0 1 691.6 368.53V354.83Z" fill="#ef1416"/>
<path d="M693.4 354.83H759V368.53A1.7 1.7 0 0 1 757.3 370.23H693.4A0.8 0.8 0 0 1 692.6 369.43V355.63A0.8 0.8 0 0 1 693.4 354.83Z" fill="#ff0000"/>
<path d="M765.6 352.83H827.9A2.6 2.6 0 0 1 830.5 355.43V368.63A2.6 2.6 0 0 1 827.9 371.23H765.6A2.6 2.6 0 0 1 763 368.63V355.43A2.6 2.6 0 0 1 765.6 352.83Z" fill="#b4c9e4"/>
<path d="M765.7 353.83H827.8A1.7 1.7 0 0 1 829.5 355.53V368.53A1.7 1.7 0 0 1 827.8 370.23H765.7A1.7 1.7 0 0 1 764 368.53V355.53A1.7 1.7 0 0 1 765.7 353.83Z" fill="#da2d33"/>
<path d="M764 354.83H829.5V368.53A1.7 1.7 0 0 1 827.8 370.23H765.7A1.7 1.7 0 0 1 764 368.53V354.83Z" fill="#ef1416"/>
<path d="M765.8 354.83H829.5V368.53A1.7 1.7 0 0 1 827.8 370.23H765.8A0.8 0.8 0 0 1 765 369.43V355.63A0.8 0.8 0 0 1 765.8 354.83Z" fill="#ff0000"/>
<path d="M835.9 352.83H848.6A3 3 0 0 1 851.6 355.83V368.23A3 3 0 0 1 848.6 371.23H835.9A3 3 0 0 1 832.9 368.23V355.83A3 3 0 0 1 835.9 352.83Z" fill="#dfe7f2"/>
<path d="M836.1 353.43H849A2.6 2.6 0 0 1 851.6 356.03V368.63A2.6 2.6 0 0 1 849 371.23H836.1A2.6 2.6 0 0 1 833.5 368.63V356.03A2.6 2.6 0 0 1 836.1 353.43Z" fill="#86a0c6"/>
<path d="M835.7 353.03H848.9A1.6 1.6 0 0 1 850.5 354.63V369.53A0.6 0.6 0 0 1 849.9 370.13H834.7A1.6 1.6 0 0 1 833.1 368.53V355.63A2.6 2.6 0 0 1 835.7 353.03Z" fill="#e9eef6"/>
<path d="M835.4 353.93H849A1.4 1.4 0 0 1 850.4 355.33V368.63A1.4 1.4 0 0 1 849 370.03H835.4A1.4 1.4 0 0 1 834 368.63V355.33A1.4 1.4 0 0 1 835.4 353.93Z" fill="#c1c1c1"/>
<svg x="832.9" y="352.83" width="18.7" height="18.4" viewBox="0 0 18.7 18.4"><path d="M2.6 3.8h4.6M4.8 1.6v4.4" stroke="#1a1a1a" stroke-width="1.1" fill="none"/><path d="M2.6 6.5h6V3.8l3.9 3.8-3.9 3.8V8.7h-6z" fill="#f20d0d"/></svg>
<path d="M25 374.52H66.3A2.6 2.6 0 0 1 68.9 377.12V390.32A2.6 2.6 0 0 1 66.3 392.92H25A2.6 2.6 0 0 1 22.4 390.32V377.12A2.6 2.6 0 0 1 25 374.52Z" fill="#b4c9e4"/>
<path d="M25.1 375.52H66.2A1.7 1.7 0 0 1 67.9 377.22V390.22A1.7 1.7 0 0 1 66.2 391.92H25.1A1.7 1.7 0 0 1 23.4 390.22V377.22A1.7 1.7 0 0 1 25.1 375.52Z" fill="#dadab6"/>
<path d="M23.4 376.52H67.9V390.22A1.7 1.7 0 0 1 66.2 391.92H25.1A1.7 1.7 0 0 1 23.4 390.22V376.52Z" fill="#efefbc"/>
<path d="M25.2 376.52H67.9V390.22A1.7 1.7 0 0 1 66.2 391.92H25.2A0.8 0.8 0 0 1 24.4 391.12V377.32A0.8 0.8 0 0 1 25.2 376.52Z" fill="#ffffc0"/>
<path d="M74.9 374.52H320.8A2.6 2.6 0 0 1 323.4 377.12V390.32A2.6 2.6 0 0 1 320.8 392.92H74.9A2.6 2.6 0 0 1 72.3 390.32V377.12A2.6 2.6 0 0 1 74.9 374.52Z" fill="#b4c9e4"/>
<path d="M75 375.52H320.7A1.7 1.7 0 0 1 322.4 377.22V390.22A1.7 1.7 0 0 1 320.7 391.92H75A1.7 1.7 0 0 1 73.3 390.22V377.22A1.7 1.7 0 0 1 75 375.52Z" fill="#dadab6"/>
<path d="M73.3 376.52H322.4V390.22A1.7 1.7 0 0 1 320.7 391.92H75A1.7 1.7 0 0 1 73.3 390.22V376.52Z" fill="#efefbc"/>
<path d="M75.1 376.52H322.4V390.22A1.7 1.7 0 0 1 320.7 391.92H75.1A0.8 0.8 0 0 1 74.3 391.12V377.32A0.8 0.8 0 0 1 75.1 376.52Z" fill="#ffffc0"/>
<path d="M328.4 374.52H391.8A2.6 2.6 0 0 1 394.4 377.12V390.32A2.6 2.6 0 0 1 391.8 392.92H328.4A2.6 2.6 0 0 1 325.8 390.32V377.12A2.6 2.6 0 0 1 328.4 374.52Z" fill="#b4c9e4"/>
<path d="M328.5 375.52H391.7A1.7 1.7 0 0 1 393.4 377.22V390.22A1.7 1.7 0 0 1 391.7 391.92H328.5A1.7 1.7 0 0 1 326.8 390.22V377.22A1.7 1.7 0 0 1 328.5 375.52Z" fill="#dadab6"/>
<path d="M326.8 376.52H393.4V390.22A1.7 1.7 0 0 1 391.7 391.92H328.5A1.7 1.7 0 0 1 326.8 390.22V376.52Z" fill="#efefbc"/>
<path d="M328.6 376.52H393.4V390.22A1.7 1.7 0 0 1 391.7 391.92H328.6A0.8 0.8 0 0 1 327.8 391.12V377.32A0.8 0.8 0 0 1 328.6 376.52Z" fill="#ffffc0"/>
<path d="M400.1 374.52H463.8A2.6 2.6 0 0 1 466.4 377.12V390.32A2.6 2.6 0 0 1 463.8 392.92H400.1A2.6 2.6 0 0 1 397.5 390.32V377.12A2.6 2.6 0 0 1 400.1 374.52Z" fill="#b4c9e4"/>
<path d="M400.2 375.52H463.7A1.7 1.7 0 0 1 465.4 377.22V390.22A1.7 1.7 0 0 1 463.7 391.92H400.2A1.7 1.7 0 0 1 398.5 390.22V377.22A1.7 1.7 0 0 1 400.2 375.52Z" fill="#da2d33"/>
<path d="M398.5 376.52H465.4V390.22A1.7 1.7 0 0 1 463.7 391.92H400.2A1.7 1.7 0 0 1 398.5 390.22V376.52Z" fill="#ef1416"/>
<path d="M400.3 376.52H465.4V390.22A1.7 1.7 0 0 1 463.7 391.92H400.3A0.8 0.8 0 0 1 399.5 391.12V377.32A0.8 0.8 0 0 1 400.3 376.52Z" fill="#ff0000"/>
<path d="M471.1 374.52H560.5A2.6 2.6 0 0 1 563.1 377.12V390.32A2.6 2.6 0 0 1 560.5 392.92H471.1A2.6 2.6 0 0 1 468.5 390.32V377.12A2.6 2.6 0 0 1 471.1 374.52Z" fill="#b4c9e4"/>
<path d="M471.2 375.52H560.4A1.7 1.7 0 0 1 562.1 377.22V390.22A1.7 1.7 0 0 1 560.4 391.92H471.2A1.7 1.7 0 0 1 469.5 390.22V377.22A1.7 1.7 0 0 1 471.2 375.52Z" fill="#da2d33"/>
<path d="M469.5 376.52H562.1V390.22A1.7 1.7 0 0 1 560.4 391.92H471.2A1.7 1.7 0 0 1 469.5 390.22V376.52Z" fill="#ef1416"/>
<path d="M471.3 376.52H562.1V390.22A1.7 1.7 0 0 1 560.4 391.92H471.3A0.8 0.8 0 0 1 470.5 391.12V377.32A0.8 0.8 0 0 1 471.3 376.52Z" fill="#ff0000"/>
<path d="M568.6 374.52H632A2.6 2.6 0 0 1 634.6 377.12V390.32A2.6 2.6 0 0 1 632 392.92H568.6A2.6 2.6 0 0 1 566 390.32V377.12A2.6 2.6 0 0 1 568.6 374.52Z" fill="#b4c9e4"/>
<path d="M568.7 375.52H631.9A1.7 1.7 0 0 1 633.6 377.22V390.22A1.7 1.7 0 0 1 631.9 391.92H568.7A1.7 1.7 0 0 1 567 390.22V377.22A1.7 1.7 0 0 1 568.7 375.52Z" fill="#da2d33"/>
<path d="M567 376.52H633.6V390.22A1.7 1.7 0 0 1 631.9 391.92H568.7A1.7 1.7 0 0 1 567 390.22V376.52Z" fill="#ef1416"/>
<path d="M568.8 376.52H633.6V390.22A1.7 1.7 0 0 1 631.9 391.92H568.8A0.8 0.8 0 0 1 568 391.12V377.32A0.8 0.8 0 0 1 568.8 376.52Z" fill="#ff0000"/>
<path d="M639.6 374.52H658.7A2.6 2.6 0 0 1 661.3 377.12V390.32A2.6 2.6 0 0 1 658.7 392.92H639.6A2.6 2.6 0 0 1 637 390.32V377.12A2.6 2.6 0 0 1 639.6 374.52Z" fill="#b4c9e4"/>
<path d="M639.7 375.52H658.6A1.7 1.7 0 0 1 660.3 377.22V390.22A1.7 1.7 0 0 1 658.6 391.92H639.7A1.7 1.7 0 0 1 638 390.22V377.22A1.7 1.7 0 0 1 639.7 375.52Z" fill="#da2d33"/>
<path d="M638 376.52H660.3V390.22A1.7 1.7 0 0 1 658.6 391.92H639.7A1.7 1.7 0 0 1 638 390.22V376.52Z" fill="#ef1416"/>
<path d="M639.8 376.52H660.3V390.22A1.7 1.7 0 0 1 658.6 391.92H639.8A0.8 0.8 0 0 1 639 391.12V377.32A0.8 0.8 0 0 1 639.8 376.52Z" fill="#ff0000"/>
<path d="M666.3 374.52H685.3A2.6 2.6 0 0 1 687.9 377.12V390.32A2.6 2.6 0 0 1 685.3 392.92H666.3A2.6 2.6 0 0 1 663.7 390.32V377.12A2.6 2.6 0 0 1 666.3 374.52Z" fill="#b4c9e4"/>
<path d="M666.4 375.52H685.2A1.7 1.7 0 0 1 686.9 377.22V390.22A1.7 1.7 0 0 1 685.2 391.92H666.4A1.7 1.7 0 0 1 664.7 390.22V377.22A1.7 1.7 0 0 1 666.4 375.52Z" fill="#da2d33"/>
<path d="M664.7 376.52H686.9V390.22A1.7 1.7 0 0 1 685.2 391.92H666.4A1.7 1.7 0 0 1 664.7 390.22V376.52Z" fill="#ef1416"/>
<path d="M666.5 376.52H686.9V390.22A1.7 1.7 0 0 1 685.2 391.92H666.5A0.8 0.8 0 0 1 665.7 391.12V377.32A0.8 0.8 0 0 1 666.5 376.52Z" fill="#ff0000"/>
<path d="M693.2 374.52H757.4A2.6 2.6 0 0 1 760 377.12V390.32A2.6 2.6 0 0 1 757.4 392.92H693.2A2.6 2.6 0 0 1 690.6 390.32V377.12A2.6 2.6 0 0 1 693.2 374.52Z" fill="#b4c9e4"/>
<path d="M693.3 375.52H757.3A1.7 1.7 0 0 1 759 377.22V390.22A1.7 1.7 0 0 1 757.3 391.92H693.3A1.7 1.7 0 0 1 691.6 390.22V377.22A1.7 1.7 0 0 1 693.3 375.52Z" fill="#da2d33"/>
<path d="M691.6 376.52H759V390.22A1.7 1.7 0 0 1 757.3 391.92H693.3A1.7 1.7 0 0 1 691.6 390.22V376.52Z" fill="#ef1416"/>
<path d="M693.4 376.52H759V390.22A1.7 1.7 0 0 1 757.3 391.92H693.4A0.8 0.8 0 0 1 692.6 391.12V377.32A0.8 0.8 0 0 1 693.4 376.52Z" fill="#ff0000"/>
<path d="M765.6 374.52H827.9A2.6 2.6 0 0 1 830.5 377.12V390.32A2.6 2.6 0 0 1 827.9 392.92H765.6A2.6 2.6 0 0 1 763 390.32V377.12A2.6 2.6 0 0 1 765.6 374.52Z" fill="#b4c9e4"/>
<path d="M765.7 375.52H827.8A1.7 1.7 0 0 1 829.5 377.22V390.22A1.7 1.7 0 0 1 827.8 391.92H765.7A1.7 1.7 0 0 1 764 390.22V377.22A1.7 1.7 0 0 1 765.7 375.52Z" fill="#da2d33"/>
<path d="M764 376.52H829.5V390.22A1.7 1.7 0 0 1 827.8 391.92H765.7A1.7 1.7 0 0 1 764 390.22V376.52Z" fill="#ef1416"/>
<path d="M765.8 376.52H829.5V390.22A1.7 1.7 0 0 1 827.8 391.92H765.8A0.8 0.8 0 0 1 765 391.12V377.32A0.8 0.8 0 0 1 765.8 376.52Z" fill="#ff0000"/>
<path d="M835.9 374.52H848.6A3 3 0 0 1 851.6 377.52V389.92A3 3 0 0 1 848.6 392.92H835.9A3 3 0 0 1 832.9 389.92V377.52A3 3 0 0 1 835.9 374.52Z" fill="#dfe7f2"/>
<path d="M836.1 375.12H849A2.6 2.6 0 0 1 851.6 377.72V390.32A2.6 2.6 0 0 1 849 392.92H836.1A2.6 2.6 0 0 1 833.5 390.32V377.72A2.6 2.6 0 0 1 836.1 375.12Z" fill="#86a0c6"/>
<path d="M835.7 374.72H848.9A1.6 1.6 0 0 1 850.5 376.32V391.22A0.6 0.6 0 0 1 849.9 391.82H834.7A1.6 1.6 0 0 1 833.1 390.22V377.32A2.6 2.6 0 0 1 835.7 374.72Z" fill="#e9eef6"/>
<path d="M835.4 375.62H849A1.4 1.4 0 0 1 850.4 377.02V390.32A1.4 1.4 0 0 1 849 391.72H835.4A1.4 1.4 0 0 1 834 390.32V377.02A1.4 1.4 0 0 1 835.4 375.62Z" fill="#c1c1c1"/>
<svg x="832.9" y="374.52" width="18.7" height="18.4" viewBox="0 0 18.7 18.4"><path d="M2.6 3.8h4.6M4.8 1.6v4.4" stroke="#1a1a1a" stroke-width="1.1" fill="none"/><path d="M2.6 6.5h6V3.8l3.9 3.8-3.9 3.8V8.7h-6z" fill="#f20d0d"/></svg>
<path d="M25 396.21H66.3A2.6 2.6 0 0 1 68.9 398.81V412.01A2.6 2.6 0 0 1 66.3 414.61H25A2.6 2.6 0 0 1 22.4 412.01V398.81A2.6 2.6 0 0 1 25 396.21Z" fill="#b4c9e4"/>
<path d="M25.1 397.21H66.2A1.7 1.7 0 0 1 67.9 398.91V411.91A1.7 1.7 0 0 1 66.2 413.61H25.1A1.7 1.7 0 0 1 23.4 411.91V398.91A1.7 1.7 0 0 1 25.1 397.21Z" fill="#a4a8b0"/>
<path d="M23.4 398.21H67.9V411.91A1.7 1.7 0 0 1 66.2 413.61H25.1A1.7 1.7 0 0 1 23.4 411.91V398.21Z" fill="#a9adb5"/>
<path d="M25.2 398.21H67.9V411.91A1.7 1.7 0 0 1 66.2 413.61H25.2A0.8 0.8 0 0 1 24.4 412.81V399.01A0.8 0.8 0 0 1 25.2 398.21Z" fill="#ffffff"/>
<path d="M74.9 396.21H320.8A2.6 2.6 0 0 1 323.4 398.81V412.01A2.6 2.6 0 0 1 320.8 414.61H74.9A2.6 2.6 0 0 1 72.3 412.01V398.81A2.6 2.6 0 0 1 74.9 396.21Z" fill="#b4c9e4"/>
<path d="M75 397.21H320.7A1.7 1.7 0 0 1 322.4 398.91V411.91A1.7 1.7 0 0 1 320.7 413.61H75A1.7 1.7 0 0 1 73.3 411.91V398.91A1.7 1.7 0 0 1 75 397.21Z" fill="#a4a8b0"/>
<path d="M73.3 398.21H322.4V411.91A1.7 1.7 0 0 1 320.7 413.61H75A1.7 1.7 0 0 1 73.3 411.91V398.21Z" fill="#a9adb5"/>
<path d="M75.1 398.21H322.4V411.91A1.7 1.7 0 0 1 320.7 413.61H75.1A0.8 0.8 0 0 1 74.3 412.81V399.01A0.8 0.8 0 0 1 75.1 398.21Z" fill="#ffffff"/>
<path d="M328.4 396.21H391.8A2.6 2.6 0 0 1 394.4 398.81V412.01A2.6 2.6 0 0 1 391.8 414.61H328.4A2.6 2.6 0 0 1 325.8 412.01V398.81A2.6 2.6 0 0 1 328.4 396.21Z" fill="#b4c9e4"/>
<path d="M328.5 397.21H391.7A1.7 1.7 0 0 1 393.4 398.91V411.91A1.7 1.7 0 0 1 391.7 413.61H328.5A1.7 1.7 0 0 1 326.8 411.91V398.91A1.7 1.7 0 0 1 328.5 397.21Z" fill="#a4a8b0"/>
<path d="M326.8 398.21H393.4V411.91A1.7 1.7 0 0 1 391.7 413.61H328.5A1.7 1.7 0 0 1 326.8 411.91V398.21Z" fill="#a9adb5"/>
<path d="M328.6 398.21H393.4V411.91A1.7 1.7 0 0 1 391.7 413.61H328.6A0.8 0.8 0 0 1 327.8 412.81V399.01A0.8 0.8 0 0 1 328.6 398.21Z" fill="#ffffff"/>
<path d="M400.1 396.21H463.8A2.6 2.6 0 0 1 466.4 398.81V412.01A2.6 2.6 0 0 1 463.8 414.61H400.1A2.6 2.6 0 0 1 397.5 412.01V398.81A2.6 2.6 0 0 1 400.1 396.21Z" fill="#b4c9e4"/>
<path d="M400.2 397.21H463.7A1.7 1.7 0 0 1 465.4 398.91V411.91A1.7 1.7 0 0 1 463.7 413.61H400.2A1.7 1.7 0 0 1 398.5 411.91V398.91A1.7 1.7 0 0 1 400.2 397.21Z" fill="#a4a8b0"/>
<path d="M398.5 398.21H465.4V411.91A1.7 1.7 0 0 1 463.7 413.61H400.2A1.7 1.7 0 0 1 398.5 411.91V398.21Z" fill="#a9adb5"/>
<path d="M400.3 398.21H465.4V411.91A1.7 1.7 0 0 1 463.7 413.61H400.3A0.8 0.8 0 0 1 399.5 412.81V399.01A0.8 0.8 0 0 1 400.3 398.21Z" fill="#ffffff"/>
<path d="M471.1 396.21H560.5A2.6 2.6 0 0 1 563.1 398.81V412.01A2.6 2.6 0 0 1 560.5 414.61H471.1A2.6 2.6 0 0 1 468.5 412.01V398.81A2.6 2.6 0 0 1 471.1 396.21Z" fill="#b4c9e4"/>
<path d="M471.2 397.21H560.4A1.7 1.7 0 0 1 562.1 398.91V411.91A1.7 1.7 0 0 1 560.4 413.61H471.2A1.7 1.7 0 0 1 469.5 411.91V398.91A1.7 1.7 0 0 1 471.2 397.21Z" fill="#a4a8b0"/>
<path d="M469.5 398.21H562.1V411.91A1.7 1.7 0 0 1 560.4 413.61H471.2A1.7 1.7 0 0 1 469.5 411.91V398.21Z" fill="#a9adb5"/>
<path d="M471.3 398.21H562.1V411.91A1.7 1.7 0 0 1 560.4 413.61H471.3A0.8 0.8 0 0 1 470.5 412.81V399.01A0.8 0.8 0 0 1 471.3 398.21Z" fill="#ffffff"/>
<path d="M568.6 396.21H632A2.6 2.6 0 0 1 634.6 398.81V412.01A2.6 2.6 0 0 1 632 414.61H568.6A2.6 2.6 0 0 1 566 412.01V398.81A2.6 2.6 0 0 1 568.6 396.21Z" fill="#b4c9e4"/>
<path d="M568.7 397.21H631.9A1.7 1.7 0 0 1 633.6 398.91V411.91A1.7 1.7 0 0 1 631.9 413.61H568.7A1.7 1.7 0 0 1 567 411.91V398.91A1.7 1.7 0 0 1 568.7 397.21Z" fill="#a4a8b0"/>
<path d="M567 398.21H633.6V411.91A1.7 1.7 0 0 1 631.9 413.61H568.7A1.7 1.7 0 0 1 567 411.91V398.21Z" fill="#a9adb5"/>
<path d="M568.8 398.21H633.6V411.91A1.7 1.7 0 0 1 631.9 413.61H568.8A0.8 0.8 0 0 1 568 412.81V399.01A0.8 0.8 0 0 1 568.8 398.21Z" fill="#ffffff"/>
<path d="M639.6 396.21H658.7A2.6 2.6 0 0 1 661.3 398.81V412.01A2.6 2.6 0 0 1 658.7 414.61H639.6A2.6 2.6 0 0 1 637 412.01V398.81A2.6 2.6 0 0 1 639.6 396.21Z" fill="#b4c9e4"/>
<path d="M639.7 397.21H658.6A1.7 1.7 0 0 1 660.3 398.91V411.91A1.7 1.7 0 0 1 658.6 413.61H639.7A1.7 1.7 0 0 1 638 411.91V398.91A1.7 1.7 0 0 1 639.7 397.21Z" fill="#a4a8b0"/>
<path d="M638 398.21H660.3V411.91A1.7 1.7 0 0 1 658.6 413.61H639.7A1.7 1.7 0 0 1 638 411.91V398.21Z" fill="#a9adb5"/>
<path d="M639.8 398.21H660.3V411.91A1.7 1.7 0 0 1 658.6 413.61H639.8A0.8 0.8 0 0 1 639 412.81V399.01A0.8 0.8 0 0 1 639.8 398.21Z" fill="#ffffff"/>
<path d="M666.3 396.21H685.3A2.6 2.6 0 0 1 687.9 398.81V412.01A2.6 2.6 0 0 1 685.3 414.61H666.3A2.6 2.6 0 0 1 663.7 412.01V398.81A2.6 2.6 0 0 1 666.3 396.21Z" fill="#b4c9e4"/>
<path d="M666.4 397.21H685.2A1.7 1.7 0 0 1 686.9 398.91V411.91A1.7 1.7 0 0 1 685.2 413.61H666.4A1.7 1.7 0 0 1 664.7 411.91V398.91A1.7 1.7 0 0 1 666.4 397.21Z" fill="#a4a8b0"/>
<path d="M664.7 398.21H686.9V411.91A1.7 1.7 0 0 1 685.2 413.61H666.4A1.7 1.7 0 0 1 664.7 411.91V398.21Z" fill="#a9adb5"/>
<path d="M666.5 398.21H686.9V411.91A1.7 1.7 0 0 1 685.2 413.61H666.5A0.8 0.8 0 0 1 665.7 412.81V399.01A0.8 0.8 0 0 1 666.5 398.21Z" fill="#ffffff"/>
<path d="M693.2 396.21H757.4A2.6 2.6 0 0 1 760 398.81V412.01A2.6 2.6 0 0 1 757.4 414.61H693.2A2.6 2.6 0 0 1 690.6 412.01V398.81A2.6 2.6 0 0 1 693.2 396.21Z" fill="#b4c9e4"/>
<path d="M693.3 397.21H757.3A1.7 1.7 0 0 1 759 398.91V411.91A1.7 1.7 0 0 1 757.3 413.61H693.3A1.7 1.7 0 0 1 691.6 411.91V398.91A1.7 1.7 0 0 1 693.3 397.21Z" fill="#a4a8b0"/>
<path d="M691.6 398.21H759V411.91A1.7 1.7 0 0 1 757.3 413.61H693.3A1.7 1.7 0 0 1 691.6 411.91V398.21Z" fill="#a9adb5"/>
<path d="M693.4 398.21H759V411.91A1.7 1.7 0 0 1 757.3 413.61H693.4A0.8 0.8 0 0 1 692.6 412.81V399.01A0.8 0.8 0 0 1 693.4 398.21Z" fill="#ffffff"/>
<path d="M765.6 396.21H827.9A2.6 2.6 0 0 1 830.5 398.81V412.01A2.6 2.6 0 0 1 827.9 414.61H765.6A2.6 2.6 0 0 1 763 412.01V398.81A2.6 2.6 0 0 1 765.6 396.21Z" fill="#b4c9e4"/>
<path d="M765.7 397.21H827.8A1.7 1.7 0 0 1 829.5 398.91V411.91A1.7 1.7 0 0 1 827.8 413.61H765.7A1.7 1.7 0 0 1 764 411.91V398.91A1.7 1.7 0 0 1 765.7 397.21Z" fill="#a4a8b0"/>
<path d="M764 398.21H829.5V411.91A1.7 1.7 0 0 1 827.8 413.61H765.7A1.7 1.7 0 0 1 764 411.91V398.21Z" fill="#a9adb5"/>
<path d="M765.8 398.21H829.5V411.91A1.7 1.7 0 0 1 827.8 413.61H765.8A0.8 0.8 0 0 1 765 412.81V399.01A0.8 0.8 0 0 1 765.8 398.21Z" fill="#ffffff"/>
<path d="M835.9 396.21H848.6A3 3 0 0 1 851.6 399.21V411.61A3 3 0 0 1 848.6 414.61H835.9A3 3 0 0 1 832.9 411.61V399.21A3 3 0 0 1 835.9 396.21Z" fill="#dfe7f2"/>
<path d="M836.1 396.81H849A2.6 2.6 0 0 1 851.6 399.41V412.01A2.6 2.6 0 0 1 849 414.61H836.1A2.6 2.6 0 0 1 833.5 412.01V399.41A2.6 2.6 0 0 1 836.1 396.81Z" fill="#86a0c6"/>
<path d="M835.7 396.41H848.9A1.6 1.6 0 0 1 850.5 398.01V412.91A0.6 0.6 0 0 1 849.9 413.51H834.7A1.6 1.6 0 0 1 833.1 411.91V399.01A2.6 2.6 0 0 1 835.7 396.41Z" fill="#e9eef6"/>
<path d="M835.4 397.31H849A1.4 1.4 0 0 1 850.4 398.71V412.01A1.4 1.4 0 0 1 849 413.41H835.4A1.4 1.4 0 0 1 834 412.01V398.71A1.4 1.4 0 0 1 835.4 397.31Z" fill="#c1c1c1"/>
<svg x="832.9" y="396.21" width="18.7" height="18.4" viewBox="0 0 18.7 18.4"><path d="M2.6 3.8h4.6M4.8 1.6v4.4" stroke="#a2a2a2" stroke-width="1.1" fill="none"/><path d="M2.6 6.5h6V3.8l3.9 3.8-3.9 3.8V8.7h-6z" fill="#a8a8a8"/></svg>
<path d="M25 417.9H66.3A2.6 2.6 0 0 1 68.9 420.5V433.7A2.6 2.6 0 0 1 66.3 436.3H25A2.6 2.6 0 0 1 22.4 433.7V420.5A2.6 2.6 0 0 1 25 417.9Z" fill="#b4c9e4"/>
<path d="M25.1 418.9H66.2A1.7 1.7 0 0 1 67.9 420.6V433.6A1.7 1.7 0 0 1 66.2 435.3H25.1A1.7 1.7 0 0 1 23.4 433.6V420.6A1.7 1.7 0 0 1 25.1 418.9Z" fill="#a4a8b0"/>
<path d="M23.4 419.9H67.9V433.6A1.7 1.7 0 0 1 66.2 435.3H25.1A1.7 1.7 0 0 1 23.4 433.6V419.9Z" fill="#a9adb5"/>
<path d="M25.2 419.9H67.9V433.6A1.7 1.7 0 0 1 66.2 435.3H25.2A0.8 0.8 0 0 1 24.4 434.5V420.7A0.8 0.8 0 0 1 25.2 419.9Z" fill="#ffffff"/>
<path d="M74.9 417.9H320.8A2.6 2.6 0 0 1 323.4 420.5V433.7A2.6 2.6 0 0 1 320.8 436.3H74.9A2.6 2.6 0 0 1 72.3 433.7V420.5A2.6 2.6 0 0 1 74.9 417.9Z" fill="#b4c9e4"/>
<path d="M75 418.9H320.7A1.7 1.7 0 0 1 322.4 420.6V433.6A1.7 1.7 0 0 1 320.7 435.3H75A1.7 1.7 0 0 1 73.3 433.6V420.6A1.7 1.7 0 0 1 75 418.9Z" fill="#a4a8b0"/>
<path d="M73.3 419.9H322.4V433.6A1.7 1.7 0 0 1 320.7 435.3H75A1.7 1.7 0 0 1 73.3 433.6V419.9Z" fill="#a9adb5"/>
<path d="M75.1 419.9H322.4V433.6A1.7 1.7 0 0 1 320.7 435.3H75.1A0.8 0.8 0 0 1 74.3 434.5V420.7A0.8 0.8 0 0 1 75.1 419.9Z" fill="#ffffff"/>
<path d="M328.4 417.9H391.8A2.6 2.6 0 0 1 394.4 420.5V433.7A2.6 2.6 0 0 1 391.8 436.3H328.4A2.6 2.6 0 0 1 325.8 433.7V420.5A2.6 2.6 0 0 1 328.4 417.9Z" fill="#b4c9e4"/>
<path d="M328.5 418.9H391.7A1.7 1.7 0 0 1 393.4 420.6V433.6A1.7 1.7 0 0 1 391.7 435.3H328.5A1.7 1.7 0 0 1 326.8 433.6V420.6A1.7 1.7 0 0 1 328.5 418.9Z" fill="#a4a8b0"/>
<path d="M326.8 419.9H393.4V433.6A1.7 1.7 0 0 1 391.7 435.3H328.5A1.7 1.7 0 0 1 326.8 433.6V419.9Z" fill="#a9adb5"/>
<path d="M328.6 419.9H393.4V433.6A1.7 1.7 0 0 1 391.7 435.3H328.6A0.8 0.8 0 0 1 327.8 434.5V420.7A0.8 0.8 0 0 1 328.6 419.9Z" fill="#ffffff"/>
<path d="M400.1 417.9H463.8A2.6 2.6 0 0 1 466.4 420.5V433.7A2.6 2.6 0 0 1 463.8 436.3H400.1A2.6 2.6 0 0 1 397.5 433.7V420.5A2.6 2.6 0 0 1 400.1 417.9Z" fill="#b4c9e4"/>
<path d="M400.2 418.9H463.7A1.7 1.7 0 0 1 465.4 420.6V433.6A1.7 1.7 0 0 1 463.7 435.3H400.2A1.7 1.7 0 0 1 398.5 433.6V420.6A1.7 1.7 0 0 1 400.2 418.9Z" fill="#a4a8b0"/>
<path d="M398.5 419.9H465.4V433.6A1.7 1.7 0 0 1 463.7 435.3H400.2A1.7 1.7 0 0 1 398.5 433.6V419.9Z" fill="#a9adb5"/>
<path d="M400.3 419.9H465.4V433.6A1.7 1.7 0 0 1 463.7 435.3H400.3A0.8 0.8 0 0 1 399.5 434.5V420.7A0.8 0.8 0 0 1 400.3 419.9Z" fill="#ffffff"/>
<path d="M471.1 417.9H560.5A2.6 2.6 0 0 1 563.1 420.5V433.7A2.6 2.6 0 0 1 560.5 436.3H471.1A2.6 2.6 0 0 1 468.5 433.7V420.5A2.6 2.6 0 0 1 471.1 417.9Z" fill="#b4c9e4"/>
<path d="M471.2 418.9H560.4A1.7 1.7 0 0 1 562.1 420.6V433.6A1.7 1.7 0 0 1 560.4 435.3H471.2A1.7 1.7 0 0 1 469.5 433.6V420.6A1.7 1.7 0 0 1 471.2 418.9Z" fill="#a4a8b0"/>
<path d="M469.5 419.9H562.1V433.6A1.7 1.7 0 0 1 560.4 435.3H471.2A1.7 1.7 0 0 1 469.5 433.6V419.9Z" fill="#a9adb5"/>
<path d="M471.3 419.9H562.1V433.6A1.7 1.7 0 0 1 560.4 435.3H471.3A0.8 0.8 0 0 1 470.5 434.5V420.7A0.8 0.8 0 0 1 471.3 419.9Z" fill="#ffffff"/>
<path d="M568.6 417.9H632A2.6 2.6 0 0 1 634.6 420.5V433.7A2.6 2.6 0 0 1 632 436.3H568.6A2.6 2.6 0 0 1 566 433.7V420.5A2.6 2.6 0 0 1 568.6 417.9Z" fill="#b4c9e4"/>
<path d="M568.7 418.9H631.9A1.7 1.7 0 0 1 633.6 420.6V433.6A1.7 1.7 0 0 1 631.9 435.3H568.7A1.7 1.7 0 0 1 567 433.6V420.6A1.7 1.7 0 0 1 568.7 418.9Z" fill="#a4a8b0"/>
<path d="M567 419.9H633.6V433.6A1.7 1.7 0 0 1 631.9 435.3H568.7A1.7 1.7 0 0 1 567 433.6V419.9Z" fill="#a9adb5"/>
<path d="M568.8 419.9H633.6V433.6A1.7 1.7 0 0 1 631.9 435.3H568.8A0.8 0.8 0 0 1 568 434.5V420.7A0.8 0.8 0 0 1 568.8 419.9Z" fill="#ffffff"/>
<path d="M639.6 417.9H658.7A2.6 2.6 0 0 1 661.3 420.5V433.7A2.6 2.6 0 0 1 658.7 436.3H639.6A2.6 2.6 0 0 1 637 433.7V420.5A2.6 2.6 0 0 1 639.6 417.9Z" fill="#b4c9e4"/>
<path d="M639.7 418.9H658.6A1.7 1.7 0 0 1 660.3 420.6V433.6A1.7 1.7 0 0 1 658.6 435.3H639.7A1.7 1.7 0 0 1 638 433.6V420.6A1.7 1.7 0 0 1 639.7 418.9Z" fill="#a4a8b0"/>
<path d="M638 419.9H660.3V433.6A1.7 1.7 0 0 1 658.6 435.3H639.7A1.7 1.7 0 0 1 638 433.6V419.9Z" fill="#a9adb5"/>
<path d="M639.8 419.9H660.3V433.6A1.7 1.7 0 0 1 658.6 435.3H639.8A0.8 0.8 0 0 1 639 434.5V420.7A0.8 0.8 0 0 1 639.8 419.9Z" fill="#ffffff"/>
<path d="M666.3 417.9H685.3A2.6 2.6 0 0 1 687.9 420.5V433.7A2.6 2.6 0 0 1 685.3 436.3H666.3A2.6 2.6 0 0 1 663.7 433.7V420.5A2.6 2.6 0 0 1 666.3 417.9Z" fill="#b4c9e4"/>
<path d="M666.4 418.9H685.2A1.7 1.7 0 0 1 686.9 420.6V433.6A1.7 1.7 0 0 1 685.2 435.3H666.4A1.7 1.7 0 0 1 664.7 433.6V420.6A1.7 1.7 0 0 1 666.4 418.9Z" fill="#a4a8b0"/>
<path d="M664.7 419.9H686.9V433.6A1.7 1.7 0 0 1 685.2 435.3H666.4A1.7 1.7 0 0 1 664.7 433.6V419.9Z" fill="#a9adb5"/>
<path d="M666.5 419.9H686.9V433.6A1.7 1.7 0 0 1 685.2 435.3H666.5A0.8 0.8 0 0 1 665.7 434.5V420.7A0.8 0.8 0 0 1 666.5 419.9Z" fill="#ffffff"/>
<path d="M693.2 417.9H757.4A2.6 2.6 0 0 1 760 420.5V433.7A2.6 2.6 0 0 1 757.4 436.3H693.2A2.6 2.6 0 0 1 690.6 433.7V420.5A2.6 2.6 0 0 1 693.2 417.9Z" fill="#b4c9e4"/>
<path d="M693.3 418.9H757.3A1.7 1.7 0 0 1 759 420.6V433.6A1.7 1.7 0 0 1 757.3 435.3H693.3A1.7 1.7 0 0 1 691.6 433.6V420.6A1.7 1.7 0 0 1 693.3 418.9Z" fill="#a4a8b0"/>
<path d="M691.6 419.9H759V433.6A1.7 1.7 0 0 1 757.3 435.3H693.3A1.7 1.7 0 0 1 691.6 433.6V419.9Z" fill="#a9adb5"/>
<path d="M693.4 419.9H759V433.6A1.7 1.7 0 0 1 757.3 435.3H693.4A0.8 0.8 0 0 1 692.6 434.5V420.7A0.8 0.8 0 0 1 693.4 419.9Z" fill="#ffffff"/>
<path d="M765.6 417.9H827.9A2.6 2.6 0 0 1 830.5 420.5V433.7A2.6 2.6 0 0 1 827.9 436.3H765.6A2.6 2.6 0 0 1 763 433.7V420.5A2.6 2.6 0 0 1 765.6 417.9Z" fill="#b4c9e4"/>
<path d="M765.7 418.9H827.8A1.7 1.7 0 0 1 829.5 420.6V433.6A1.7 1.7 0 0 1 827.8 435.3H765.7A1.7 1.7 0 0 1 764 433.6V420.6A1.7 1.7 0 0 1 765.7 418.9Z" fill="#a4a8b0"/>
<path d="M764 419.9H829.5V433.6A1.7 1.7 0 0 1 827.8 435.3H765.7A1.7 1.7 0 0 1 764 433.6V419.9Z" fill="#a9adb5"/>
<path d="M765.8 419.9H829.5V433.6A1.7 1.7 0 0 1 827.8 435.3H765.8A0.8 0.8 0 0 1 765 434.5V420.7A0.8 0.8 0 0 1 765.8 419.9Z" fill="#ffffff"/>
<path d="M835.9 417.9H848.6A3 3 0 0 1 851.6 420.9V433.3A3 3 0 0 1 848.6 436.3H835.9A3 3 0 0 1 832.9 433.3V420.9A3 3 0 0 1 835.9 417.9Z" fill="#dfe7f2"/>
<path d="M836.1 418.5H849A2.6 2.6 0 0 1 851.6 421.1V433.7A2.6 2.6 0 0 1 849 436.3H836.1A2.6 2.6 0 0 1 833.5 433.7V421.1A2.6 2.6 0 0 1 836.1 418.5Z" fill="#86a0c6"/>
<path d="M835.7 418.1H848.9A1.6 1.6 0 0 1 850.5 419.7V434.6A0.6 0.6 0 0 1 849.9 435.2H834.7A1.6 1.6 0 0 1 833.1 433.6V420.7A2.6 2.6 0 0 1 835.7 418.1Z" fill="#e9eef6"/>
<path d="M835.4 419H849A1.4 1.4 0 0 1 850.4 420.4V433.7A1.4 1.4 0 0 1 849 435.1H835.4A1.4 1.4 0 0 1 834 433.7V420.4A1.4 1.4 0 0 1 835.4 419Z" fill="#c1c1c1"/>
<svg x="832.9" y="417.9" width="18.7" height="18.4" viewBox="0 0 18.7 18.4"><path d="M2.6 3.8h4.6M4.8 1.6v4.4" stroke="#a2a2a2" stroke-width="1.1" fill="none"/><path d="M2.6 6.5h6V3.8l3.9 3.8-3.9 3.8V8.7h-6z" fill="#a8a8a8"/></svg>
<path d="M25 439.59H66.3A2.6 2.6 0 0 1 68.9 442.19V455.39A2.6 2.6 0 0 1 66.3 457.99H25A2.6 2.6 0 0 1 22.4 455.39V442.19A2.6 2.6 0 0 1 25 439.59Z" fill="#b4c9e4"/>
<path d="M25.1 440.59H66.2A1.7 1.7 0 0 1 67.9 442.29V455.29A1.7 1.7 0 0 1 66.2 456.99H25.1A1.7 1.7 0 0 1 23.4 455.29V442.29A1.7 1.7 0 0 1 25.1 440.59Z" fill="#a4a8b0"/>
<path d="M23.4 441.59H67.9V455.29A1.7 1.7 0 0 1 66.2 456.99H25.1A1.7 1.7 0 0 1 23.4 455.29V441.59Z" fill="#a9adb5"/>
<path d="M25.2 441.59H67.9V455.29A1.7 1.7 0 0 1 66.2 456.99H25.2A0.8 0.8 0 0 1 24.4 456.19V442.39A0.8 0.8 0 0 1 25.2 441.59Z" fill="#ffffff"/>
<path d="M74.9 439.59H320.8A2.6 2.6 0 0 1 323.4 442.19V455.39A2.6 2.6 0 0 1 320.8 457.99H74.9A2.6 2.6 0 0 1 72.3 455.39V442.19A2.6 2.6 0 0 1 74.9 439.59Z" fill="#b4c9e4"/>
<path d="M75 440.59H320.7A1.7 1.7 0 0 1 322.4 442.29V455.29A1.7 1.7 0 0 1 320.7 456.99H75A1.7 1.7 0 0 1 73.3 455.29V442.29A1.7 1.7 0 0 1 75 440.59Z" fill="#a4a8b0"/>
<path d="M73.3 441.59H322.4V455.29A1.7 1.7 0 0 1 320.7 456.99H75A1.7 1.7 0 0 1 73.3 455.29V441.59Z" fill="#a9adb5"/>
<path d="M75.1 441.59H322.4V455.29A1.7 1.7 0 0 1 320.7 456.99H75.1A0.8 0.8 0 0 1 74.3 456.19V442.39A0.8 0.8 0 0 1 75.1 441.59Z" fill="#ffffff"/>
<path d="M328.4 439.59H391.8A2.6 2.6 0 0 1 394.4 442.19V455.39A2.6 2.6 0 0 1 391.8 457.99H328.4A2.6 2.6 0 0 1 325.8 455.39V442.19A2.6 2.6 0 0 1 328.4 439.59Z" fill="#b4c9e4"/>
<path d="M328.5 440.59H391.7A1.7 1.7 0 0 1 393.4 442.29V455.29A1.7 1.7 0 0 1 391.7 456.99H328.5A1.7 1.7 0 0 1 326.8 455.29V442.29A1.7 1.7 0 0 1 328.5 440.59Z" fill="#a4a8b0"/>
<path d="M326.8 441.59H393.4V455.29A1.7 1.7 0 0 1 391.7 456.99H328.5A1.7 1.7 0 0 1 326.8 455.29V441.59Z" fill="#a9adb5"/>
<path d="M328.6 441.59H393.4V455.29A1.7 1.7 0 0 1 391.7 456.99H328.6A0.8 0.8 0 0 1 327.8 456.19V442.39A0.8 0.8 0 0 1 328.6 441.59Z" fill="#ffffff"/>
<path d="M400.1 439.59H463.8A2.6 2.6 0 0 1 466.4 442.19V455.39A2.6 2.6 0 0 1 463.8 457.99H400.1A2.6 2.6 0 0 1 397.5 455.39V442.19A2.6 2.6 0 0 1 400.1 439.59Z" fill="#b4c9e4"/>
<path d="M400.2 440.59H463.7A1.7 1.7 0 0 1 465.4 442.29V455.29A1.7 1.7 0 0 1 463.7 456.99H400.2A1.7 1.7 0 0 1 398.5 455.29V442.29A1.7 1.7 0 0 1 400.2 440.59Z" fill="#a4a8b0"/>
<path d="M398.5 441.59H465.4V455.29A1.7 1.7 0 0 1 463.7 456.99H400.2A1.7 1.7 0 0 1 398.5 455.29V441.59Z" fill="#a9adb5"/>
<path d="M400.3 441.59H465.4V455.29A1.7 1.7 0 0 1 463.7 456.99H400.3A0.8 0.8 0 0 1 399.5 456.19V442.39A0.8 0.8 0 0 1 400.3 441.59Z" fill="#ffffff"/>
<path d="M471.1 439.59H560.5A2.6 2.6 0 0 1 563.1 442.19V455.39A2.6 2.6 0 0 1 560.5 457.99H471.1A2.6 2.6 0 0 1 468.5 455.39V442.19A2.6 2.6 0 0 1 471.1 439.59Z" fill="#b4c9e4"/>
<path d="M471.2 440.59H560.4A1.7 1.7 0 0 1 562.1 442.29V455.29A1.7 1.7 0 0 1 560.4 456.99H471.2A1.7 1.7 0 0 1 469.5 455.29V442.29A1.7 1.7 0 0 1 471.2 440.59Z" fill="#a4a8b0"/>
<path d="M469.5 441.59H562.1V455.29A1.7 1.7 0 0 1 560.4 456.99H471.2A1.7 1.7 0 0 1 469.5 455.29V441.59Z" fill="#a9adb5"/>
<path d="M471.3 441.59H562.1V455.29A1.7 1.7 0 0 1 560.4 456.99H471.3A0.8 0.8 0 0 1 470.5 456.19V442.39A0.8 0.8 0 0 1 471.3 441.59Z" fill="#ffffff"/>
<path d="M568.6 439.59H632A2.6 2.6 0 0 1 634.6 442.19V455.39A2.6 2.6 0 0 1 632 457.99H568.6A2.6 2.6 0 0 1 566 455.39V442.19A2.6 2.6 0 0 1 568.6 439.59Z" fill="#b4c9e4"/>
<path d="M568.7 440.59H631.9A1.7 1.7 0 0 1 633.6 442.29V455.29A1.7 1.7 0 0 1 631.9 456.99H568.7A1.7 1.7 0 0 1 567 455.29V442.29A1.7 1.7 0 0 1 568.7 440.59Z" fill="#a4a8b0"/>
<path d="M567 441.59H633.6V455.29A1.7 1.7 0 0 1 631.9 456.99H568.7A1.7 1.7 0 0 1 567 455.29V441.59Z" fill="#a9adb5"/>
<path d="M568.8 441.59H633.6V455.29A1.7 1.7 0 0 1 631.9 456.99H568.8A0.8 0.8 0 0 1 568 456.19V442.39A0.8 0.8 0 0 1 568.8 441.59Z" fill="#ffffff"/>
<path d="M639.6 439.59H658.7A2.6 2.6 0 0 1 661.3 442.19V455.39A2.6 2.6 0 0 1 658.7 457.99H639.6A2.6 2.6 0 0 1 637 455.39V442.19A2.6 2.6 0 0 1 639.6 439.59Z" fill="#b4c9e4"/>
<path d="M639.7 440.59H658.6A1.7 1.7 0 0 1 660.3 442.29V455.29A1.7 1.7 0 0 1 658.6 456.99H639.7A1.7 1.7 0 0 1 638 455.29V442.29A1.7 1.7 0 0 1 639.7 440.59Z" fill="#a4a8b0"/>
<path d="M638 441.59H660.3V455.29A1.7 1.7 0 0 1 658.6 456.99H639.7A1.7 1.7 0 0 1 638 455.29V441.59Z" fill="#a9adb5"/>
<path d="M639.8 441.59H660.3V455.29A1.7 1.7 0 0 1 658.6 456.99H639.8A0.8 0.8 0 0 1 639 456.19V442.39A0.8 0.8 0 0 1 639.8 441.59Z" fill="#ffffff"/>
<path d="M666.3 439.59H685.3A2.6 2.6 0 0 1 687.9 442.19V455.39A2.6 2.6 0 0 1 685.3 457.99H666.3A2.6 2.6 0 0 1 663.7 455.39V442.19A2.6 2.6 0 0 1 666.3 439.59Z" fill="#b4c9e4"/>
<path d="M666.4 440.59H685.2A1.7 1.7 0 0 1 686.9 442.29V455.29A1.7 1.7 0 0 1 685.2 456.99H666.4A1.7 1.7 0 0 1 664.7 455.29V442.29A1.7 1.7 0 0 1 666.4 440.59Z" fill="#a4a8b0"/>
<path d="M664.7 441.59H686.9V455.29A1.7 1.7 0 0 1 685.2 456.99H666.4A1.7 1.7 0 0 1 664.7 455.29V441.59Z" fill="#a9adb5"/>
<path d="M666.5 441.59H686.9V455.29A1.7 1.7 0 0 1 685.2 456.99H666.5A0.8 0.8 0 0 1 665.7 456.19V442.39A0.8 0.8 0 0 1 666.5 441.59Z" fill="#ffffff"/>
<path d="M693.2 439.59H757.4A2.6 2.6 0 0 1 760 442.19V455.39A2.6 2.6 0 0 1 757.4 457.99H693.2A2.6 2.6 0 0 1 690.6 455.39V442.19A2.6 2.6 0 0 1 693.2 439.59Z" fill="#b4c9e4"/>
<path d="M693.3 440.59H757.3A1.7 1.7 0 0 1 759 442.29V455.29A1.7 1.7 0 0 1 757.3 456.99H693.3A1.7 1.7 0 0 1 691.6 455.29V442.29A1.7 1.7 0 0 1 693.3 440.59Z" fill="#a4a8b0"/>
<path d="M691.6 441.59H759V455.29A1.7 1.7 0 0 1 757.3 456.99H693.3A1.7 1.7 0 0 1 691.6 455.29V441.59Z" fill="#a9adb5"/>
<path d="M693.4 441.59H759V455.29A1.7 1.7 0 0 1 757.3 456.99H693.4A0.8 0.8 0 0 1 692.6 456.19V442.39A0.8 0.8 0 0 1 693.4 441.59Z" fill="#ffffff"/>
<path d="M765.6 439.59H827.9A2.6 2.6 0 0 1 830.5 442.19V455.39A2.6 2.6 0 0 1 827.9 457.99H765.6A2.6 2.6 0 0 1 763 455.39V442.19A2.6 2.6 0 0 1 765.6 439.59Z" fill="#b4c9e4"/>
<path d="M765.7 440.59H827.8A1.7 1.7 0 0 1 829.5 442.29V455.29A1.7 1.7 0 0 1 827.8 456.99H765.7A1.7 1.7 0 0 1 764 455.29V442.29A1.7 1.7 0 0 1 765.7 440.59Z" fill="#a4a8b0"/>
<path d="M764 441.59H829.5V455.29A1.7 1.7 0 0 1 827.8 456.99H765.7A1.7 1.7 0 0 1 764 455.29V441.59Z" fill="#a9adb5"/>
<path d="M765.8 441.59H829.5V455.29A1.7 1.7 0 0 1 827.8 456.99H765.8A0.8 0.8 0 0 1 765 456.19V442.39A0.8 0.8 0 0 1 765.8 441.59Z" fill="#ffffff"/>
<path d="M835.9 439.59H848.6A3 3 0 0 1 851.6 442.59V454.99A3 3 0 0 1 848.6 457.99H835.9A3 3 0 0 1 832.9 454.99V442.59A3 3 0 0 1 835.9 439.59Z" fill="#dfe7f2"/>
<path d="M836.1 440.19H849A2.6 2.6 0 0 1 851.6 442.79V455.39A2.6 2.6 0 0 1 849 457.99H836.1A2.6 2.6 0 0 1 833.5 455.39V442.79A2.6 2.6 0 0 1 836.1 440.19Z" fill="#86a0c6"/>
<path d="M835.7 439.79H848.9A1.6 1.6 0 0 1 850.5 441.39V456.29A0.6 0.6 0 0 1 849.9 456.89H834.7A1.6 1.6 0 0 1 833.1 455.29V442.39A2.6 2.6 0 0 1 835.7 439.79Z" fill="#e9eef6"/>
<path d="M835.4 440.69H849A1.4 1.4 0 0 1 850.4 442.09V455.39A1.4 1.4 0 0 1 849 456.79H835.4A1.4 1.4 0 0 1 834 455.39V442.09A1.4 1.4 0 0 1 835.4 440.69Z" fill="#c1c1c1"/>
<svg x="832.9" y="439.59" width="18.7" height="18.4" viewBox="0 0 18.7 18.4"><path d="M2.6 3.8h4.6M4.8 1.6v4.4" stroke="#a2a2a2" stroke-width="1.1" fill="none"/><path d="M2.6 6.5h6V3.8l3.9 3.8-3.9 3.8V8.7h-6z" fill="#a8a8a8"/></svg>
<rect x="4.9" y="464.7" width="478.5" height="149" fill="#111"/>
<rect x="6.1" y="465.9" width="476.1" height="146.6" fill="#f4f4f4"/>
<rect x="6.1" y="465.9" width="476.1" height="1.9" fill="#fafafa"/>
<rect x="6.1" y="467.8" width="474.8" height="19.2" fill="#b2b2b2"/>
<rect x="6.1" y="487" width="474.8" height="16.8" fill="#d4d4d4"/>
<rect x="6.1" y="503.8" width="474.8" height="32" fill="#f0f0f0"/>
<rect x="6.1" y="535.8" width="476.1" height="2" fill="#222"/>
<path d="M12.4 504.8H133A2.6 2.6 0 0 1 135.6 507.4V528.9A2.6 2.6 0 0 1 133 531.5H12.4A2.6 2.6 0 0 1 9.8 528.9V507.4A2.6 2.6 0 0 1 12.4 504.8Z" fill="#b4c9e4"/>
<path d="M12.5 505.8H132.9A1.7 1.7 0 0 1 134.6 507.5V528.8A1.7 1.7 0 0 1 132.9 530.5H12.5A1.7 1.7 0 0 1 10.8 528.8V507.5A1.7 1.7 0 0 1 12.5 505.8Z" fill="#a4a8b0"/>
<path d="M10.8 506.8H134.6V528.8A1.7 1.7 0 0 1 132.9 530.5H12.5A1.7 1.7 0 0 1 10.8 528.8V506.8Z" fill="#a9adb5"/>
<path d="M12.6 506.8H134.6V528.8A1.7 1.7 0 0 1 132.9 530.5H12.6A0.8 0.8 0 0 1 11.8 529.7V507.6A0.8 0.8 0 0 1 12.6 506.8Z" fill="#ffffff"/>
<path d="M141.8 504.8H213.3A2.6 2.6 0 0 1 215.9 507.4V528.9A2.6 2.6 0 0 1 213.3 531.5H141.8A2.6 2.6 0 0 1 139.2 528.9V507.4A2.6 2.6 0 0 1 141.8 504.8Z" fill="#b4c9e4"/>
<path d="M141.9 505.8H213.2A1.7 1.7 0 0 1 214.9 507.5V528.8A1.7 1.7 0 0 1 213.2 530.5H141.9A1.7 1.7 0 0 1 140.2 528.8V507.5A1.7 1.7 0 0 1 141.9 505.8Z" fill="#a4a8b0"/>
<path d="M140.2 506.8H214.9V528.8A1.7 1.7 0 0 1 213.2 530.5H141.9A1.7 1.7 0 0 1 140.2 528.8V506.8Z" fill="#a9adb5"/>
<path d="M142 506.8H214.9V528.8A1.7 1.7 0 0 1 213.2 530.5H142A0.8 0.8 0 0 1 141.2 529.7V507.6A0.8 0.8 0 0 1 142 506.8Z" fill="#ffffff"/>
<path d="M222 504.8H336.8A2.6 2.6 0 0 1 339.4 507.4V528.9A2.6 2.6 0 0 1 336.8 531.5H222A2.6 2.6 0 0 1 219.4 528.9V507.4A2.6 2.6 0 0 1 222 504.8Z" fill="#b4c9e4"/>
<path d="M222.1 505.8H336.7A1.7 1.7 0 0 1 338.4 507.5V528.8A1.7 1.7 0 0 1 336.7 530.5H222.1A1.7 1.7 0 0 1 220.4 528.8V507.5A1.7 1.7 0 0 1 222.1 505.8Z" fill="#a4a8b0"/>
<path d="M220.4 506.8H338.4V528.8A1.7 1.7 0 0 1 336.7 530.5H222.1A1.7 1.7 0 0 1 220.4 528.8V506.8Z" fill="#a9adb5"/>
<path d="M222.2 506.8H338.4V528.8A1.7 1.7 0 0 1 336.7 530.5H222.2A0.8 0.8 0 0 1 221.4 529.7V507.6A0.8 0.8 0 0 1 222.2 506.8Z" fill="#ffffff"/>
<path d="M345.3 504.8H475.7A2.6 2.6 0 0 1 478.3 507.4V528.9A2.6 2.6 0 0 1 475.7 531.5H345.3A2.6 2.6 0 0 1 342.7 528.9V507.4A2.6 2.6 0 0 1 345.3 504.8Z" fill="#b4c9e4"/>
<path d="M345.4 505.8H475.6A1.7 1.7 0 0 1 477.3 507.5V528.8A1.7 1.7 0 0 1 475.6 530.5H345.4A1.7 1.7 0 0 1 343.7 528.8V507.5A1.7 1.7 0 0 1 345.4 505.8Z" fill="#a4a8b0"/>
<path d="M343.7 506.8H477.3V528.8A1.7 1.7 0 0 1 475.6 530.5H345.4A1.7 1.7 0 0 1 343.7 528.8V506.8Z" fill="#a9adb5"/>
<path d="M345.5 506.8H477.3V528.8A1.7 1.7 0 0 1 475.6 530.5H345.5A0.8 0.8 0 0 1 344.7 529.7V507.6A0.8 0.8 0 0 1 345.5 506.8Z" fill="#ffffff"/>
<rect x="72.9" y="508.1" width="1.1" height="19.6" fill="#111"/>
<path d="M34.6 539.3H437A2.6 2.6 0 0 1 439.6 541.9V552.8A2.6 2.6 0 0 1 437 555.4H34.6A2.6 2.6 0 0 1 32 552.8V541.9A2.6 2.6 0 0 1 34.6 539.3Z" fill="#b4c9e4"/>
<path d="M34.7 540.3H436.9A1.7 1.7 0 0 1 438.6 542V552.7A1.7 1.7 0 0 1 436.9 554.4H34.7A1.7 1.7 0 0 1 33 552.7V542A1.7 1.7 0 0 1 34.7 540.3Z" fill="#dadab6"/>
<path d="M33 541.3H438.6V552.7A1.7 1.7 0 0 1 436.9 554.4H34.7A1.7 1.7 0 0 1 33 552.7V541.3Z" fill="#efefbc"/>
<path d="M34.8 541.3H438.6V552.7A1.7 1.7 0 0 1 436.9 554.4H34.8A0.8 0.8 0 0 1 34 553.6V542.1A0.8 0.8 0 0 1 34.8 541.3Z" fill="#ffffc0"/>
<path d="M48.2 557.5H435.9A2.6 2.6 0 0 1 438.5 560.1V570.7A2.6 2.6 0 0 1 435.9 573.3H48.2A2.6 2.6 0 0 1 45.6 570.7V560.1A2.6 2.6 0 0 1 48.2 557.5Z" fill="#b4c9e4"/>
<path d="M48.3 558.5H435.8A1.7 1.7 0 0 1 437.5 560.2V570.6A1.7 1.7 0 0 1 435.8 572.3H48.3A1.7 1.7 0 0 1 46.6 570.6V560.2A1.7 1.7 0 0 1 48.3 558.5Z" fill="#dadab6"/>
<path d="M46.6 559.5H437.5V570.6A1.7 1.7 0 0 1 435.8 572.3H48.3A1.7 1.7 0 0 1 46.6 570.6V559.5Z" fill="#efefbc"/>
<path d="M48.4 559.5H437.5V570.6A1.7 1.7 0 0 1 435.8 572.3H48.4A0.8 0.8 0 0 1 47.6 571.5V560.3A0.8 0.8 0 0 1 48.4 559.5Z" fill="#ffffc0"/>
<path d="M60.6 575.2H435.9A2.6 2.6 0 0 1 438.5 577.8V588.1A2.6 2.6 0 0 1 435.9 590.7H60.6A2.6 2.6 0 0 1 58 588.1V577.8A2.6 2.6 0 0 1 60.6 575.2Z" fill="#b4c9e4"/>
<path d="M60.7 576.2H435.8A1.7 1.7 0 0 1 437.5 577.9V588A1.7 1.7 0 0 1 435.8 589.7H60.7A1.7 1.7 0 0 1 59 588V577.9A1.7 1.7 0 0 1 60.7 576.2Z" fill="#dadab6"/>
<path d="M59 577.2H437.5V588A1.7 1.7 0 0 1 435.8 589.7H60.7A1.7 1.7 0 0 1 59 588V577.2Z" fill="#efefbc"/>
<path d="M60.8 577.2H437.5V588A1.7 1.7 0 0 1 435.8 589.7H60.8A0.8 0.8 0 0 1 60 588.9V578A0.8 0.8 0 0 1 60.8 577.2Z" fill="#ffffc0"/>
<path d="M72.6 592.9H435.9A2.6 2.6 0 0 1 438.5 595.5V606A2.6 2.6 0 0 1 435.9 608.6H72.6A2.6 2.6 0 0 1 70 606V595.5A2.6 2.6 0 0 1 72.6 592.9Z" fill="#b4c9e4"/>
<path d="M72.7 593.9H435.8A1.7 1.7 0 0 1 437.5 595.6V605.9A1.7 1.7 0 0 1 435.8 607.6H72.7A1.7 1.7 0 0 1 71 605.9V595.6A1.7 1.7 0 0 1 72.7 593.9Z" fill="#dadab6"/>
<path d="M71 594.9H437.5V605.9A1.7 1.7 0 0 1 435.8 607.6H72.7A1.7 1.7 0 0 1 71 605.9V594.9Z" fill="#efefbc"/>
<path d="M72.8 594.9H437.5V605.9A1.7 1.7 0 0 1 435.8 607.6H72.8A0.8 0.8 0 0 1 72 606.8V595.7A0.8 0.8 0 0 1 72.8 594.9Z" fill="#ffffc0"/>
<path d="M443.6 557.3H474.8A2.6 2.6 0 0 1 477.4 559.9V570.7A2.6 2.6 0 0 1 474.8 573.3H443.6A2.6 2.6 0 0 1 441 570.7V559.9A2.6 2.6 0 0 1 443.6 557.3Z" fill="#b4c9e4"/>
<path d="M443.7 558.3H474.7A1.7 1.7 0 0 1 476.4 560V570.6A1.7 1.7 0 0 1 474.7 572.3H443.7A1.7 1.7 0 0 1 442 570.6V560A1.7 1.7 0 0 1 443.7 558.3Z" fill="#dadab6"/>
<path d="M442 559.3H476.4V570.6A1.7 1.7 0 0 1 474.7 572.3H443.7A1.7 1.7 0 0 1 442 570.6V559.3Z" fill="#efefbc"/>
<path d="M443.8 559.3H476.4V570.6A1.7 1.7 0 0 1 474.7 572.3H443.8A0.8 0.8 0 0 1 443 571.5V560.1A0.8 0.8 0 0 1 443.8 559.3Z" fill="#ffffc0"/>
<path d="M443.6 575.3H474.8A2.6 2.6 0 0 1 477.4 577.9V588.4A2.6 2.6 0 0 1 474.8 591H443.6A2.6 2.6 0 0 1 441 588.4V577.9A2.6 2.6 0 0 1 443.6 575.3Z" fill="#b4c9e4"/>
<path d="M443.7 576.3H474.7A1.7 1.7 0 0 1 476.4 578V588.3A1.7 1.7 0 0 1 474.7 590H443.7A1.7 1.7 0 0 1 442 588.3V578A1.7 1.7 0 0 1 443.7 576.3Z" fill="#dadab6"/>
<path d="M442 577.3H476.4V588.3A1.7 1.7 0 0 1 474.7 590H443.7A1.7 1.7 0 0 1 442 588.3V577.3Z" fill="#efefbc"/>
<path d="M443.8 577.3H476.4V588.3A1.7 1.7 0 0 1 474.7 590H443.8A0.8 0.8 0 0 1 443 589.2V578.1A0.8 0.8 0 0 1 443.8 577.3Z" fill="#ffffc0"/>
<path d="M443.6 593H474.8A2.6 2.6 0 0 1 477.4 595.6V606.4A2.6 2.6 0 0 1 474.8 609H443.6A2.6 2.6 0 0 1 441 606.4V595.6A2.6 2.6 0 0 1 443.6 593Z" fill="#b4c9e4"/>
<path d="M443.7 594H474.7A1.7 1.7 0 0 1 476.4 595.7V606.3A1.7 1.7 0 0 1 474.7 608H443.7A1.7 1.7 0 0 1 442 606.3V595.7A1.7 1.7 0 0 1 443.7 594Z" fill="#dadab6"/>
<path d="M442 595H476.4V606.3A1.7 1.7 0 0 1 474.7 608H443.7A1.7 1.7 0 0 1 442 606.3V595Z" fill="#efefbc"/>
<path d="M443.8 595H476.4V606.3A1.7 1.7 0 0 1 474.7 608H443.8A0.8 0.8 0 0 1 443 607.2V595.8A0.8 0.8 0 0 1 443.8 595Z" fill="#ffffc0"/>
<rect x="482.8" y="612.8" width="373.2" height="1.1" fill="#111"/>
<rect x="485.2" y="606" width="1.2" height="7.7" fill="#111"/>
<rect x="854.8" y="464" width="1.2" height="149.9" fill="#111"/>
<rect x="482.2" y="462.9" width="376.1" height="148" fill="#ed1c24"/>
<rect x="486.9" y="467.6" width="366.7" height="138.6" fill="#f6f6f6"/>
<rect x="489.1" y="468" width="364.6" height="18.4" fill="#b2b2b2"/>
<rect x="489.1" y="486.4" width="364.6" height="16.8" fill="#d4d4d4"/>
<rect x="489.1" y="503.2" width="364.6" height="103" fill="#f1f1f1"/>
<path d="M492.8 503.4H541.1A2.6 2.6 0 0 1 543.7 506V518.3A2.6 2.6 0 0 1 541.1 520.9H492.8A2.6 2.6 0 0 1 490.2 518.3V506A2.6 2.6 0 0 1 492.8 503.4Z" fill="#b4c9e4"/>
<path d="M492.9 504.4H541A1.7 1.7 0 0 1 542.7 506.1V518.2A1.7 1.7 0 0 1 541 519.9H492.9A1.7 1.7 0 0 1 491.2 518.2V506.1A1.7 1.7 0 0 1 492.9 504.4Z" fill="#a4a8b0"/>
<path d="M491.2 505.4H542.7V518.2A1.7 1.7 0 0 1 541 519.9H492.9A1.7 1.7 0 0 1 491.2 518.2V505.4Z" fill="#a9adb5"/>
<path d="M493 505.4H542.7V518.2A1.7 1.7 0 0 1 541 519.9H493A0.8 0.8 0 0 1 492.2 519.1V506.2A0.8 0.8 0 0 1 493 505.4Z" fill="#ffffff"/>
<path d="M549.8 503.4H631.9A2.6 2.6 0 0 1 634.5 506V518.3A2.6 2.6 0 0 1 631.9 520.9H549.8A2.6 2.6 0 0 1 547.2 518.3V506A2.6 2.6 0 0 1 549.8 503.4Z" fill="#b4c9e4"/>
<path d="M549.9 504.4H631.8A1.7 1.7 0 0 1 633.5 506.1V518.2A1.7 1.7 0 0 1 631.8 519.9H549.9A1.7 1.7 0 0 1 548.2 518.2V506.1A1.7 1.7 0 0 1 549.9 504.4Z" fill="#a4a8b0"/>
<path d="M548.2 505.4H633.5V518.2A1.7 1.7 0 0 1 631.8 519.9H549.9A1.7 1.7 0 0 1 548.2 518.2V505.4Z" fill="#a9adb5"/>
<path d="M550 505.4H633.5V518.2A1.7 1.7 0 0 1 631.8 519.9H550A0.8 0.8 0 0 1 549.2 519.1V506.2A0.8 0.8 0 0 1 550 505.4Z" fill="#ffffff"/>
<path d="M640.1 503.4H722.7A2.6 2.6 0 0 1 725.3 506V518.3A2.6 2.6 0 0 1 722.7 520.9H640.1A2.6 2.6 0 0 1 637.5 518.3V506A2.6 2.6 0 0 1 640.1 503.4Z" fill="#b4c9e4"/>
<path d="M640.2 504.4H722.6A1.7 1.7 0 0 1 724.3 506.1V518.2A1.7 1.7 0 0 1 722.6 519.9H640.2A1.7 1.7 0 0 1 638.5 518.2V506.1A1.7 1.7 0 0 1 640.2 504.4Z" fill="#a4a8b0"/>
<path d="M638.5 505.4H724.3V518.2A1.7 1.7 0 0 1 722.6 519.9H640.2A1.7 1.7 0 0 1 638.5 518.2V505.4Z" fill="#a9adb5"/>
<path d="M640.3 505.4H724.3V518.2A1.7 1.7 0 0 1 722.6 519.9H640.3A0.8 0.8 0 0 1 639.5 519.1V506.2A0.8 0.8 0 0 1 640.3 505.4Z" fill="#ffffff"/>
<path d="M731 503.4H814.8A2.6 2.6 0 0 1 817.4 506V518.3A2.6 2.6 0 0 1 814.8 520.9H731A2.6 2.6 0 0 1 728.4 518.3V506A2.6 2.6 0 0 1 731 503.4Z" fill="#b4c9e4"/>
<path d="M731.1 504.4H814.7A1.7 1.7 0 0 1 816.4 506.1V518.2A1.7 1.7 0 0 1 814.7 519.9H731.1A1.7 1.7 0 0 1 729.4 518.2V506.1A1.7 1.7 0 0 1 731.1 504.4Z" fill="#a4a8b0"/>
<path d="M729.4 505.4H816.4V518.2A1.7 1.7 0 0 1 814.7 519.9H731.1A1.7 1.7 0 0 1 729.4 518.2V505.4Z" fill="#a9adb5"/>
<path d="M731.2 505.4H816.4V518.2A1.7 1.7 0 0 1 814.7 519.9H731.2A0.8 0.8 0 0 1 730.4 519.1V506.2A0.8 0.8 0 0 1 731.2 505.4Z" fill="#ffffff"/>
<path d="M822.2 503.4H835.1A3 3 0 0 1 838.1 506.4V517.9A3 3 0 0 1 835.1 520.9H822.2A3 3 0 0 1 819.2 517.9V506.4A3 3 0 0 1 822.2 503.4Z" fill="#dfe7f2"/>
<path d="M822.4 504H835.5A2.6 2.6 0 0 1 838.1 506.6V518.3A2.6 2.6 0 0 1 835.5 520.9H822.4A2.6 2.6 0 0 1 819.8 518.3V506.6A2.6 2.6 0 0 1 822.4 504Z" fill="#86a0c6"/>
<path d="M822 503.6H835.4A1.6 1.6 0 0 1 837 505.2V519.2A0.6 0.6 0 0 1 836.4 519.8H821A1.6 1.6 0 0 1 819.4 518.2V506.2A2.6 2.6 0 0 1 822 503.6Z" fill="#e9eef6"/>
<path d="M821.7 504.5H835.5A1.4 1.4 0 0 1 836.9 505.9V518.3A1.4 1.4 0 0 1 835.5 519.7H821.7A1.4 1.4 0 0 1 820.3 518.3V505.9A1.4 1.4 0 0 1 821.7 504.5Z" fill="#c1c1c1"/>
<svg x="819.2" y="503.4" width="18.9" height="17.5" viewBox="0 0 18.9 17.5"><path d="M2 1.4v4.4h4" stroke="#444" stroke-width="1" fill="none"/><path d="M5.4 4.4L14.8 13.2M14.8 4.4L5.4 13.2" stroke="#b30c0c" stroke-width="2.9" fill="none"/></svg>
<path d="M492.8 523.6H541.1A2.6 2.6 0 0 1 543.7 526.2V538.5A2.6 2.6 0 0 1 541.1 541.1H492.8A2.6 2.6 0 0 1 490.2 538.5V526.2A2.6 2.6 0 0 1 492.8 523.6Z" fill="#b4c9e4"/>
<path d="M492.9 524.6H541A1.7 1.7 0 0 1 542.7 526.3V538.4A1.7 1.7 0 0 1 541 540.1H492.9A1.7 1.7 0 0 1 491.2 538.4V526.3A1.7 1.7 0 0 1 492.9 524.6Z" fill="#a4a8b0"/>
<path d="M491.2 525.6H542.7V538.4A1.7 1.7 0 0 1 541 540.1H492.9A1.7 1.7 0 0 1 491.2 538.4V525.6Z" fill="#a9adb5"/>
<path d="M493 525.6H542.7V538.4A1.7 1.7 0 0 1 541 540.1H493A0.8 0.8 0 0 1 492.2 539.3V526.4A0.8 0.8 0 0 1 493 525.6Z" fill="#ffffff"/>
<path d="M549.8 523.6H631.9A2.6 2.6 0 0 1 634.5 526.2V538.5A2.6 2.6 0 0 1 631.9 541.1H549.8A2.6 2.6 0 0 1 547.2 538.5V526.2A2.6 2.6 0 0 1 549.8 523.6Z" fill="#b4c9e4"/>
<path d="M549.9 524.6H631.8A1.7 1.7 0 0 1 633.5 526.3V538.4A1.7 1.7 0 0 1 631.8 540.1H549.9A1.7 1.7 0 0 1 548.2 538.4V526.3A1.7 1.7 0 0 1 549.9 524.6Z" fill="#a4a8b0"/>
<path d="M548.2 525.6H633.5V538.4A1.7 1.7 0 0 1 631.8 540.1H549.9A1.7 1.7 0 0 1 548.2 538.4V525.6Z" fill="#a9adb5"/>
<path d="M550 525.6H633.5V538.4A1.7 1.7 0 0 1 631.8 540.1H550A0.8 0.8 0 0 1 549.2 539.3V526.4A0.8 0.8 0 0 1 550 525.6Z" fill="#ffffff"/>
<path d="M640.1 523.6H722.7A2.6 2.6 0 0 1 725.3 526.2V538.5A2.6 2.6 0 0 1 722.7 541.1H640.1A2.6 2.6 0 0 1 637.5 538.5V526.2A2.6 2.6 0 0 1 640.1 523.6Z" fill="#b4c9e4"/>
<path d="M640.2 524.6H722.6A1.7 1.7 0 0 1 724.3 526.3V538.4A1.7 1.7 0 0 1 722.6 540.1H640.2A1.7 1.7 0 0 1 638.5 538.4V526.3A1.7 1.7 0 0 1 640.2 524.6Z" fill="#a4a8b0"/>
<path d="M638.5 525.6H724.3V538.4A1.7 1.7 0 0 1 722.6 540.1H640.2A1.7 1.7 0 0 1 638.5 538.4V525.6Z" fill="#a9adb5"/>
<path d="M640.3 525.6H724.3V538.4A1.7 1.7 0 0 1 722.6 540.1H640.3A0.8 0.8 0 0 1 639.5 539.3V526.4A0.8 0.8 0 0 1 640.3 525.6Z" fill="#ffffff"/>
<path d="M731 523.6H814.8A2.6 2.6 0 0 1 817.4 526.2V538.5A2.6 2.6 0 0 1 814.8 541.1H731A2.6 2.6 0 0 1 728.4 538.5V526.2A2.6 2.6 0 0 1 731 523.6Z" fill="#b4c9e4"/>
<path d="M731.1 524.6H814.7A1.7 1.7 0 0 1 816.4 526.3V538.4A1.7 1.7 0 0 1 814.7 540.1H731.1A1.7 1.7 0 0 1 729.4 538.4V526.3A1.7 1.7 0 0 1 731.1 524.6Z" fill="#a4a8b0"/>
<path d="M729.4 525.6H816.4V538.4A1.7 1.7 0 0 1 814.7 540.1H731.1A1.7 1.7 0 0 1 729.4 538.4V525.6Z" fill="#a9adb5"/>
<path d="M731.2 525.6H816.4V538.4A1.7 1.7 0 0 1 814.7 540.1H731.2A0.8 0.8 0 0 1 730.4 539.3V526.4A0.8 0.8 0 0 1 731.2 525.6Z" fill="#ffffff"/>
<path d="M822.2 523.6H835.1A3 3 0 0 1 838.1 526.6V538.1A3 3 0 0 1 835.1 541.1H822.2A3 3 0 0 1 819.2 538.1V526.6A3 3 0 0 1 822.2 523.6Z" fill="#dfe7f2"/>
<path d="M822.4 524.2H835.5A2.6 2.6 0 0 1 838.1 526.8V538.5A2.6 2.6 0 0 1 835.5 541.1H822.4A2.6 2.6 0 0 1 819.8 538.5V526.8A2.6 2.6 0 0 1 822.4 524.2Z" fill="#86a0c6"/>
<path d="M822 523.8H835.4A1.6 1.6 0 0 1 837 525.4V539.4A0.6 0.6 0 0 1 836.4 540H821A1.6 1.6 0 0 1 819.4 538.4V526.4A2.6 2.6 0 0 1 822 523.8Z" fill="#e9eef6"/>
<path d="M821.7 524.7H835.5A1.4 1.4 0 0 1 836.9 526.1V538.5A1.4 1.4 0 0 1 835.5 539.9H821.7A1.4 1.4 0 0 1 820.3 538.5V526.1A1.4 1.4 0 0 1 821.7 524.7Z" fill="#c1c1c1"/>
<svg x="819.2" y="523.6" width="18.9" height="17.5" viewBox="0 0 18.9 17.5"><path d="M2 1.4v4.4h4" stroke="#444" stroke-width="1" fill="none"/><path d="M5.4 4.4L14.8 13.2M14.8 4.4L5.4 13.2" stroke="#b30c0c" stroke-width="2.9" fill="none"/></svg>
<path d="M492.8 544.6H541.1A2.6 2.6 0 0 1 543.7 547.2V559.5A2.6 2.6 0 0 1 541.1 562.1H492.8A2.6 2.6 0 0 1 490.2 559.5V547.2A2.6 2.6 0 0 1 492.8 544.6Z" fill="#b4c9e4"/>
<path d="M492.9 545.6H541A1.7 1.7 0 0 1 542.7 547.3V559.4A1.7 1.7 0 0 1 541 561.1H492.9A1.7 1.7 0 0 1 491.2 559.4V547.3A1.7 1.7 0 0 1 492.9 545.6Z" fill="#a4a8b0"/>
<path d="M491.2 546.6H542.7V559.4A1.7 1.7 0 0 1 541 561.1H492.9A1.7 1.7 0 0 1 491.2 559.4V546.6Z" fill="#a9adb5"/>
<path d="M493 546.6H542.7V559.4A1.7 1.7 0 0 1 541 561.1H493A0.8 0.8 0 0 1 492.2 560.3V547.4A0.8 0.8 0 0 1 493 546.6Z" fill="#ffffff"/>
<path d="M549.8 544.6H631.9A2.6 2.6 0 0 1 634.5 547.2V559.5A2.6 2.6 0 0 1 631.9 562.1H549.8A2.6 2.6 0 0 1 547.2 559.5V547.2A2.6 2.6 0 0 1 549.8 544.6Z" fill="#b4c9e4"/>
<path d="M549.9 545.6H631.8A1.7 1.7 0 0 1 633.5 547.3V559.4A1.7 1.7 0 0 1 631.8 561.1H549.9A1.7 1.7 0 0 1 548.2 559.4V547.3A1.7 1.7 0 0 1 549.9 545.6Z" fill="#a4a8b0"/>
<path d="M548.2 546.6H633.5V559.4A1.7 1.7 0 0 1 631.8 561.1H549.9A1.7 1.7 0 0 1 548.2 559.4V546.6Z" fill="#a9adb5"/>
<path d="M550 546.6H633.5V559.4A1.7 1.7 0 0 1 631.8 561.1H550A0.8 0.8 0 0 1 549.2 560.3V547.4A0.8 0.8 0 0 1 550 546.6Z" fill="#ffffff"/>
<path d="M640.1 544.6H722.7A2.6 2.6 0 0 1 725.3 547.2V559.5A2.6 2.6 0 0 1 722.7 562.1H640.1A2.6 2.6 0 0 1 637.5 559.5V547.2A2.6 2.6 0 0 1 640.1 544.6Z" fill="#b4c9e4"/>
<path d="M640.2 545.6H722.6A1.7 1.7 0 0 1 724.3 547.3V559.4A1.7 1.7 0 0 1 722.6 561.1H640.2A1.7 1.7 0 0 1 638.5 559.4V547.3A1.7 1.7 0 0 1 640.2 545.6Z" fill="#a4a8b0"/>
<path d="M638.5 546.6H724.3V559.4A1.7 1.7 0 0 1 722.6 561.1H640.2A1.7 1.7 0 0 1 638.5 559.4V546.6Z" fill="#a9adb5"/>
<path d="M640.3 546.6H724.3V559.4A1.7 1.7 0 0 1 722.6 561.1H640.3A0.8 0.8 0 0 1 639.5 560.3V547.4A0.8 0.8 0 0 1 640.3 546.6Z" fill="#ffffff"/>
<path d="M731 544.6H814.8A2.6 2.6 0 0 1 817.4 547.2V559.5A2.6 2.6 0 0 1 814.8 562.1H731A2.6 2.6 0 0 1 728.4 559.5V547.2A2.6 2.6 0 0 1 731 544.6Z" fill="#b4c9e4"/>
<path d="M731.1 545.6H814.7A1.7 1.7 0 0 1 816.4 547.3V559.4A1.7 1.7 0 0 1 814.7 561.1H731.1A1.7 1.7 0 0 1 729.4 559.4V547.3A1.7 1.7 0 0 1 731.1 545.6Z" fill="#a4a8b0"/>
<path d="M729.4 546.6H816.4V559.4A1.7 1.7 0 0 1 814.7 561.1H731.1A1.7 1.7 0 0 1 729.4 559.4V546.6Z" fill="#a9adb5"/>
<path d="M731.2 546.6H816.4V559.4A1.7 1.7 0 0 1 814.7 561.1H731.2A0.8 0.8 0 0 1 730.4 560.3V547.4A0.8 0.8 0 0 1 731.2 546.6Z" fill="#ffffff"/>
<path d="M822.2 544.6H835.1A3 3 0 0 1 838.1 547.6V559.1A3 3 0 0 1 835.1 562.1H822.2A3 3 0 0 1 819.2 559.1V547.6A3 3 0 0 1 822.2 544.6Z" fill="#dfe7f2"/>
<path d="M822.4 545.2H835.5A2.6 2.6 0 0 1 838.1 547.8V559.5A2.6 2.6 0 0 1 835.5 562.1H822.4A2.6 2.6 0 0 1 819.8 559.5V547.8A2.6 2.6 0 0 1 822.4 545.2Z" fill="#86a0c6"/>
<path d="M822 544.8H835.4A1.6 1.6 0 0 1 837 546.4V560.4A0.6 0.6 0 0 1 836.4 561H821A1.6 1.6 0 0 1 819.4 559.4V547.4A2.6 2.6 0 0 1 822 544.8Z" fill="#e9eef6"/>
<path d="M821.7 545.7H835.5A1.4 1.4 0 0 1 836.9 547.1V559.5A1.4 1.4 0 0 1 835.5 560.9H821.7A1.4 1.4 0 0 1 820.3 559.5V547.1A1.4 1.4 0 0 1 821.7 545.7Z" fill="#c1c1c1"/>
<svg x="819.2" y="544.6" width="18.9" height="17.5" viewBox="0 0 18.9 17.5"><path d="M2 1.4v4.4h4" stroke="#444" stroke-width="1" fill="none"/><path d="M5.4 4.4L14.8 13.2M14.8 4.4L5.4 13.2" stroke="#b30c0c" stroke-width="2.9" fill="none"/></svg>
<path d="M492.8 565.1H541.1A2.6 2.6 0 0 1 543.7 567.7V579.5A2.6 2.6 0 0 1 541.1 582.1H492.8A2.6 2.6 0 0 1 490.2 579.5V567.7A2.6 2.6 0 0 1 492.8 565.1Z" fill="#b4c9e4"/>
<path d="M492.9 566.1H541A1.7 1.7 0 0 1 542.7 567.8V579.4A1.7 1.7 0 0 1 541 581.1H492.9A1.7 1.7 0 0 1 491.2 579.4V567.8A1.7 1.7 0 0 1 492.9 566.1Z" fill="#dadab6"/>
<path d="M491.2 567.1H542.7V579.4A1.7 1.7 0 0 1 541 581.1H492.9A1.7 1.7 0 0 1 491.2 579.4V567.1Z" fill="#efefbc"/>
<path d="M493 567.1H542.7V579.4A1.7 1.7 0 0 1 541 581.1H493A0.8 0.8 0 0 1 492.2 580.3V567.9A0.8 0.8 0 0 1 493 567.1Z" fill="#ffffc0"/>
<path d="M549.8 565.1H631.9A2.6 2.6 0 0 1 634.5 567.7V579.5A2.6 2.6 0 0 1 631.9 582.1H549.8A2.6 2.6 0 0 1 547.2 579.5V567.7A2.6 2.6 0 0 1 549.8 565.1Z" fill="#b4c9e4"/>
<path d="M549.9 566.1H631.8A1.7 1.7 0 0 1 633.5 567.8V579.4A1.7 1.7 0 0 1 631.8 581.1H549.9A1.7 1.7 0 0 1 548.2 579.4V567.8A1.7 1.7 0 0 1 549.9 566.1Z" fill="#dadab6"/>
<path d="M548.2 567.1H633.5V579.4A1.7 1.7 0 0 1 631.8 581.1H549.9A1.7 1.7 0 0 1 548.2 579.4V567.1Z" fill="#efefbc"/>
<path d="M550 567.1H633.5V579.4A1.7 1.7 0 0 1 631.8 581.1H550A0.8 0.8 0 0 1 549.2 580.3V567.9A0.8 0.8 0 0 1 550 567.1Z" fill="#ffffc0"/>
<path d="M640.1 565.1H722.7A2.6 2.6 0 0 1 725.3 567.7V579.5A2.6 2.6 0 0 1 722.7 582.1H640.1A2.6 2.6 0 0 1 637.5 579.5V567.7A2.6 2.6 0 0 1 640.1 565.1Z" fill="#b4c9e4"/>
<path d="M640.2 566.1H722.6A1.7 1.7 0 0 1 724.3 567.8V579.4A1.7 1.7 0 0 1 722.6 581.1H640.2A1.7 1.7 0 0 1 638.5 579.4V567.8A1.7 1.7 0 0 1 640.2 566.1Z" fill="#dadab6"/>
<path d="M638.5 567.1H724.3V579.4A1.7 1.7 0 0 1 722.6 581.1H640.2A1.7 1.7 0 0 1 638.5 579.4V567.1Z" fill="#efefbc"/>
<path d="M640.3 567.1H724.3V579.4A1.7 1.7 0 0 1 722.6 581.1H640.3A0.8 0.8 0 0 1 639.5 580.3V567.9A0.8 0.8 0 0 1 640.3 567.1Z" fill="#ffffc0"/>
<path d="M731 565.1H814.8A2.6 2.6 0 0 1 817.4 567.7V579.5A2.6 2.6 0 0 1 814.8 582.1H731A2.6 2.6 0 0 1 728.4 579.5V567.7A2.6 2.6 0 0 1 731 565.1Z" fill="#b4c9e4"/>
<path d="M731.1 566.1H814.7A1.7 1.7 0 0 1 816.4 567.8V579.4A1.7 1.7 0 0 1 814.7 581.1H731.1A1.7 1.7 0 0 1 729.4 579.4V567.8A1.7 1.7 0 0 1 731.1 566.1Z" fill="#dadab6"/>
<path d="M729.4 567.1H816.4V579.4A1.7 1.7 0 0 1 814.7 581.1H731.1A1.7 1.7 0 0 1 729.4 579.4V567.1Z" fill="#efefbc"/>
<path d="M731.2 567.1H816.4V579.4A1.7 1.7 0 0 1 814.7 581.1H731.2A0.8 0.8 0 0 1 730.4 580.3V567.9A0.8 0.8 0 0 1 731.2 567.1Z" fill="#ffffc0"/>
<path d="M822.2 565.1H835.1A3 3 0 0 1 838.1 568.1V579.1A3 3 0 0 1 835.1 582.1H822.2A3 3 0 0 1 819.2 579.1V568.1A3 3 0 0 1 822.2 565.1Z" fill="#dfe7f2"/>
<path d="M822.4 565.7H835.5A2.6 2.6 0 0 1 838.1 568.3V579.5A2.6 2.6 0 0 1 835.5 582.1H822.4A2.6 2.6 0 0 1 819.8 579.5V568.3A2.6 2.6 0 0 1 822.4 565.7Z" fill="#86a0c6"/>
<path d="M822 565.3H835.4A1.6 1.6 0 0 1 837 566.9V580.4A0.6 0.6 0 0 1 836.4 581H821A1.6 1.6 0 0 1 819.4 579.4V567.9A2.6 2.6 0 0 1 822 565.3Z" fill="#e9eef6"/>
<path d="M821.7 566.2H835.5A1.4 1.4 0 0 1 836.9 567.6V579.5A1.4 1.4 0 0 1 835.5 580.9H821.7A1.4 1.4 0 0 1 820.3 579.5V567.6A1.4 1.4 0 0 1 821.7 566.2Z" fill="#c1c1c1"/>
<svg x="819.2" y="565.1" width="18.9" height="17" viewBox="0 0 18.9 17"><path d="M2 1.4v4.4h4" stroke="#444" stroke-width="1" fill="none"/><path d="M5.4 4.4L14.8 13.2M14.8 4.4L5.4 13.2" stroke="#b30c0c" stroke-width="2.9" fill="none"/></svg>
<rect x="842" y="503.9" width="10.8" height="79.1" fill="#f6f7fa"/>
<path d="M847 503.9H847.8A5 5 0 0 1 852.8 508.9V518.2H842V508.9A5 5 0 0 1 847 503.9Z" fill="#d0dbea"/>
<path d="M847 504.9H847.8A4 4 0 0 1 851.8 508.9V517.2H843V508.9A4 4 0 0 1 847 504.9Z" fill="#f6f8fb"/>
<svg x="843.4" y="507.4" width="8.2" height="5.4" viewBox="0 0 8 5"><path d="M4 0.1L7.9 4.9H0.1z" fill="#5f6579"/></svg>
<rect x="842.6" y="516" width="9.6" height="1.5" fill="#9aa3b8"/>
<rect x="845" y="546" width="7.8" height="15" fill="#e3e9f3"/>
<svg x="845.8" y="574.8" width="7.4" height="4.6" viewBox="0 0 8 5"><path d="M4 4.8L7.8 0.2H0.2z" fill="#5f6579"/></svg>
<path d="M530.6 586.6H849A2.6 2.6 0 0 1 851.6 589.2V601.4A2.6 2.6 0 0 1 849 604H530.6A2.6 2.6 0 0 1 528 601.4V589.2A2.6 2.6 0 0 1 530.6 586.6Z" fill="#b4c9e4"/>
<path d="M530.7 587.6H848.9A1.7 1.7 0 0 1 850.6 589.3V601.3A1.7 1.7 0 0 1 848.9 603H530.7A1.7 1.7 0 0 1 529 601.3V589.3A1.7 1.7 0 0 1 530.7 587.6Z" fill="#dadab6"/>
<path d="M529 588.6H850.6V601.3A1.7 1.7 0 0 1 848.9 603H530.7A1.7 1.7 0 0 1 529 601.3V588.6Z" fill="#efefbc"/>
<path d="M530.8 588.6H850.6V601.3A1.7 1.7 0 0 1 848.9 603H530.8A0.8 0.8 0 0 1 530 602.2V589.4A0.8 0.8 0 0 1 530.8 588.6Z" fill="#ffffc0"/>
<rect x="0" y="644.2" width="1003" height="10.5" fill="#c9d7ea"/>
<rect x="0" y="644.2" width="1003" height="1.6" fill="#7893b8"/>
<rect x="98.6" y="645.8" width="2.7" height="6.2" fill="#f6f8fc"/>
<rect x="189.6" y="645.8" width="2.7" height="6.2" fill="#f6f8fc"/>
<rect x="264.3" y="645.8" width="2.7" height="6.2" fill="#f6f8fc"/>
<rect x="343.6" y="645.8" width="2.7" height="6.2" fill="#f6f8fc"/>
<rect x="424.3" y="645.8" width="2.7" height="6.2" fill="#f6f8fc"/>
<rect x="662.6" y="645.8" width="2.7" height="6.2" fill="#f6f8fc"/>
<rect x="742.6" y="645.8" width="2.7" height="6.2" fill="#f6f8fc"/>
<rect x="821.6" y="645.8" width="2.7" height="6.2" fill="#f6f8fc"/>
<rect x="897.3" y="645.8" width="2.7" height="6.2" fill="#f6f8fc"/>
<rect x="976.6" y="645.8" width="2.7" height="6.2" fill="#f6f8fc"/>
<rect x="500.7" y="645.8" width="82.6" height="6.2" fill="#7ca6d4"/>
<rect x="977" y="645.8" width="26" height="6.2" fill="#fbfcfe"/>
<path d="M982.05 648.9H1002V650H981.5V649.45A0.55 0.55 0 0 1 982.05 648.9Z" fill="#b4aea8"/>
<rect x="0" y="651.9" width="1003" height="1.4" fill="#f4f7fb"/>
<rect x="0" y="653.3" width="1003" height="1.4" fill="#7d97b8"/>
<rect x="0" y="654.7" width="1003" height="31.3" fill="#e9eef6"/>
<rect x="7.5" y="672.3" width="995.5" height="1" fill="#d3dcea"/>
<rect x="127.7" y="674" width="1.4" height="12" fill="#7b89a3"/>
<rect x="154.4" y="674" width="1.4" height="12" fill="#7b89a3"/>
<rect x="231.7" y="674" width="1.4" height="12" fill="#7b89a3"/>
<rect x="317.1" y="674" width="1.4" height="12" fill="#7b89a3"/>
<rect x="369.1" y="674" width="1.4" height="12" fill="#7b89a3"/>
<path d="M1.6 686V662Q1.6 656 8 655.6" fill="none" stroke="#f7f9fd" stroke-width="1.2"/>
</svg>
<div class="t" style="left:5.2px;top:30.4px;font-family:'Liberation Mono',monospace;font-size:11.1px;color:#505050;-webkit-text-stroke:0;"><u>S</u>CM0270 - CONTROLE DE ALMOXARIFADO</div>
<div class="t" style="left:753.80px;top:31.00px;font-size:11.00px;font-weight:normal;color:#9a9a9a;transform-origin:0 50%;transform:scaleX(1.0582) rotate(0.02deg);">Window</div>
<div class="t" style="left:680.50px;top:69.70px;font-size:12.60px;font-weight:bold;color:#111;transform-origin:50% 50%;transform:translateX(-50%) scaleX(0.9352) rotate(0.02deg);">SCM0270</div>
<div class="t" style="left:778.00px;top:70.00px;font-size:12.60px;font-weight:bold;color:#111;transform-origin:0 50%;transform:scaleX(0.9645) rotate(0.02deg);">SUPORTE@</div>
<div class="t" style="left:21.40px;top:109.20px;font-size:11.50px;font-weight:normal;color:#fff;transform-origin:0 50%;transform:scaleX(0.9696) rotate(0.02deg);">COMPRAS DE MATERIAIS E ESTOQUE</div>
<div class="t" style="left:8.00px;top:142.30px;font-size:10.30px;font-weight:normal;color:#000;transform-origin:0 50%;transform:scaleX(0.9603) rotate(0.02deg);">Pedido</div>
<div class="t" style="left:105.90px;top:145.30px;font-size:18.60px;font-weight:bold;color:#000;transform-origin:50% 50%;transform:translateX(-50%) scaleX(0.9892) rotate(0.02deg);">843078</div>
<div class="t" style="left:216.15px;top:145.70px;font-size:10.30px;font-weight:normal;color:#000;transform-origin:50% 50%;transform:translateX(-50%) scaleX(0.9777) rotate(0.02deg);">Consultar</div>
<div class="t" style="left:299.20px;top:136.70px;font-size:10.30px;font-weight:normal;color:#000;transform-origin:100% 50%;transform:translateX(-100%) scaleX(0.9891) rotate(0.02deg);">Origem</div>
<div class="t" style="left:299.00px;top:154.90px;font-size:10.30px;font-weight:normal;color:#000;transform-origin:100% 50%;transform:translateX(-100%) scaleX(1.0136) rotate(0.02deg);">Destino</div>
<div class="t" style="left:457.40px;top:139.25px;font-size:10.30px;font-weight:normal;color:#000;transform-origin:0 50%;transform:scaleX(0.9598) rotate(0.02deg);">ALMOXARIFADO CENTRAL</div>
<div class="t" style="left:457.00px;top:156.35px;font-size:10.30px;font-weight:normal;color:#000;transform-origin:0 50%;transform:scaleX(1.0015) rotate(0.02deg);">LOJA</div>
<div class="t" style="left:641.20px;top:137.60px;font-size:10.30px;font-weight:normal;color:#000;transform-origin:0 50%;transform:scaleX(1.0081) rotate(0.02deg);">Operacao</div>
<div class="t" style="left:694.90px;top:137.65px;font-size:10.30px;font-weight:normal;color:#000;transform-origin:0 50%;transform:scaleX(0.9846) rotate(0.02deg);">Requisicao Consumo</div>
<div class="t" style="left:653.15px;top:157.80px;font-size:10.30px;font-weight:normal;color:#000;transform-origin:50% 50%;transform:translateX(-50%) scaleX(0.9922) rotate(0.02deg);">Csv</div>
<div class="t" style="left:684.65px;top:157.80px;font-size:10.30px;font-weight:normal;color:#000;transform-origin:50% 50%;transform:translateX(-50%) scaleX(1.0124) rotate(0.02deg);">Excel</div>
<div class="t" style="left:778.35px;top:157.80px;font-size:10.30px;font-weight:normal;color:#000;transform-origin:50% 50%;transform:translateX(-50%) scaleX(0.9747) rotate(0.02deg);">Finalizar Entrega/Embarque</div>
<div class="t" style="left:27.90px;top:181.70px;font-size:10.30px;font-weight:normal;color:#000;transform-origin:0 50%;transform:scaleX(0.9990) rotate(0.02deg);">Material</div>
<div class="t" style="left:71.00px;top:181.70px;font-size:10.30px;font-weight:normal;color:#000;transform-origin:0 50%;transform:scaleX(1.0351) rotate(0.02deg);">Descricao</div>
<div class="t" style="left:395.20px;top:181.70px;font-size:10.30px;font-weight:normal;color:#000;transform-origin:100% 50%;transform:translateX(-100%) scaleX(0.9605) rotate(0.02deg);">Qtd Pedido</div>
<div class="t" style="left:432.10px;top:181.70px;font-size:10.30px;font-weight:normal;color:#000;transform-origin:50% 50%;transform:translateX(-50%) scaleX(0.9727) rotate(0.02deg);">Lote</div>
<div class="t" style="left:515.40px;top:181.70px;font-size:10.30px;font-weight:normal;color:#000;transform-origin:50% 50%;transform:translateX(-50%) scaleX(0.9540) rotate(0.02deg);">Identidade</div>
<div class="t" style="left:600.10px;top:181.70px;font-size:10.30px;font-weight:normal;color:#000;transform-origin:50% 50%;transform:translateX(-50%) scaleX(1.0221) rotate(0.02deg);">Localizacao</div>
<div class="t" style="left:648.70px;top:181.70px;font-size:10.30px;font-weight:normal;color:#000;transform-origin:50% 50%;transform:translateX(-50%) scaleX(1.0257) rotate(0.02deg);">F.A.</div>
<div class="t" style="left:674.50px;top:181.70px;font-size:10.30px;font-weight:normal;color:#000;transform-origin:50% 50%;transform:translateX(-50%) scaleX(0.9541) rotate(0.02deg);">Bloq.</div>
<div class="t" style="left:759.50px;top:181.70px;font-size:10.30px;font-weight:normal;color:#000;transform-origin:100% 50%;transform:translateX(-100%) scaleX(0.9923) rotate(0.02deg);">Qtd Sugestao</div>
<div class="t" style="left:831.50px;top:181.70px;font-size:10.30px;font-weight:normal;color:#000;transform-origin:100% 50%;transform:translateX(-100%) scaleX(0.9745) rotate(0.02deg);">Qtd Estoque</div>
<div class="t" style="left:45.65px;top:202.05px;font-size:10.30px;font-weight:normal;color:#000;transform-origin:50% 50%;transform:translateX(-50%) scaleX(0.9979) rotate(0.02deg);">892726</div>
<div class="t" style="left:74.90px;top:202.05px;font-size:10.30px;font-weight:normal;color:#000;transform-origin:0 50%;transform:scaleX(0.9438) rotate(0.02deg);">BIOXAN COMPOSTO 500ML</div>
<div class="t" style="left:391.80px;top:202.05px;font-size:10.30px;font-weight:normal;color:#000;transform-origin:100% 50%;transform:translateX(-100%) scaleX(0.9738) rotate(0.02deg);">9.000</div>
<div class="t" style="left:431.95px;top:202.05px;font-size:10.30px;font-weight:normal;color:#260000;transform-origin:50% 50%;transform:translateX(-50%) scaleX(0.9776) rotate(0.02deg);">38348718</div>
<div class="t" style="left:515.80px;top:202.05px;font-size:10.30px;font-weight:normal;color:#260000;transform-origin:50% 50%;transform:translateX(-50%) scaleX(1.0220) rotate(0.02deg);">2601194</div>
<div class="t" style="left:758.00px;top:202.05px;font-size:10.30px;font-weight:normal;color:#260000;transform-origin:100% 50%;transform:translateX(-100%) scaleX(0.9738) rotate(0.02deg);">1.000</div>
<div class="t" style="left:828.50px;top:202.05px;font-size:10.30px;font-weight:normal;color:#260000;transform-origin:100% 50%;transform:translateX(-100%) scaleX(0.9738) rotate(0.02deg);">1.000</div>
<div class="t" style="left:431.95px;top:223.82px;font-size:10.30px;font-weight:normal;color:#260000;transform-origin:50% 50%;transform:translateX(-50%) scaleX(0.9776) rotate(0.02deg);">38348718</div>
<div class="t" style="left:515.80px;top:223.82px;font-size:10.30px;font-weight:normal;color:#260000;transform-origin:50% 50%;transform:translateX(-50%) scaleX(1.0220) rotate(0.02deg);">2601193</div>
<div class="t" style="left:758.00px;top:223.82px;font-size:10.30px;font-weight:normal;color:#260000;transform-origin:100% 50%;transform:translateX(-100%) scaleX(0.9738) rotate(0.02deg);">1.000</div>
<div class="t" style="left:828.50px;top:223.82px;font-size:10.30px;font-weight:normal;color:#260000;transform-origin:100% 50%;transform:translateX(-100%) scaleX(0.9738) rotate(0.02deg);">1.000</div>
<div class="t" style="left:431.95px;top:245.59px;font-size:10.30px;font-weight:normal;color:#260000;transform-origin:50% 50%;transform:translateX(-50%) scaleX(0.9776) rotate(0.02deg);">38348718</div>
<div class="t" style="left:515.80px;top:245.59px;font-size:10.30px;font-weight:normal;color:#260000;transform-origin:50% 50%;transform:translateX(-50%) scaleX(1.0220) rotate(0.02deg);">2601192</div>
<div class="t" style="left:758.00px;top:245.59px;font-size:10.30px;font-weight:normal;color:#260000;transform-origin:100% 50%;transform:translateX(-100%) scaleX(0.9738) rotate(0.02deg);">1.000</div>
<div class="t" style="left:828.50px;top:245.59px;font-size:10.30px;font-weight:normal;color:#260000;transform-origin:100% 50%;transform:translateX(-100%) scaleX(0.9738) rotate(0.02deg);">1.000</div>
<div class="t" style="left:431.95px;top:267.36px;font-size:10.30px;font-weight:normal;color:#260000;transform-origin:50% 50%;transform:translateX(-50%) scaleX(0.9776) rotate(0.02deg);">38348718</div>
<div class="t" style="left:515.80px;top:267.36px;font-size:10.30px;font-weight:normal;color:#260000;transform-origin:50% 50%;transform:translateX(-50%) scaleX(1.0220) rotate(0.02deg);">2601191</div>
<div class="t" style="left:758.00px;top:267.36px;font-size:10.30px;font-weight:normal;color:#260000;transform-origin:100% 50%;transform:translateX(-100%) scaleX(0.9738) rotate(0.02deg);">1.000</div>
<div class="t" style="left:828.50px;top:267.36px;font-size:10.30px;font-weight:normal;color:#260000;transform-origin:100% 50%;transform:translateX(-100%) scaleX(0.9738) rotate(0.02deg);">1.000</div>
<div class="t" style="left:431.95px;top:289.13px;font-size:10.30px;font-weight:normal;color:#260000;transform-origin:50% 50%;transform:translateX(-50%) scaleX(0.9776) rotate(0.02deg);">38348718</div>
<div class="t" style="left:515.80px;top:289.13px;font-size:10.30px;font-weight:normal;color:#260000;transform-origin:50% 50%;transform:translateX(-50%) scaleX(1.0220) rotate(0.02deg);">2601190</div>
<div class="t" style="left:758.00px;top:289.13px;font-size:10.30px;font-weight:normal;color:#260000;transform-origin:100% 50%;transform:translateX(-100%) scaleX(0.9738) rotate(0.02deg);">1.000</div>
<div class="t" style="left:828.50px;top:289.13px;font-size:10.30px;font-weight:normal;color:#260000;transform-origin:100% 50%;transform:translateX(-100%) scaleX(0.9738) rotate(0.02deg);">1.000</div>
<div class="t" style="left:431.95px;top:310.90px;font-size:10.30px;font-weight:normal;color:#260000;transform-origin:50% 50%;transform:translateX(-50%) scaleX(0.9776) rotate(0.02deg);">38348718</div>
<div class="t" style="left:515.80px;top:310.90px;font-size:10.30px;font-weight:normal;color:#260000;transform-origin:50% 50%;transform:translateX(-50%) scaleX(1.0220) rotate(0.02deg);">2601189</div>
<div class="t" style="left:758.00px;top:310.90px;font-size:10.30px;font-weight:normal;color:#260000;transform-origin:100% 50%;transform:translateX(-100%) scaleX(0.9738) rotate(0.02deg);">1.000</div>
<div class="t" style="left:828.50px;top:310.90px;font-size:10.30px;font-weight:normal;color:#260000;transform-origin:100% 50%;transform:translateX(-100%) scaleX(0.9738) rotate(0.02deg);">1.000</div>
<div class="t" style="left:431.95px;top:332.67px;font-size:10.30px;font-weight:normal;color:#260000;transform-origin:50% 50%;transform:translateX(-50%) scaleX(0.9776) rotate(0.02deg);">38348718</div>
<div class="t" style="left:515.80px;top:332.67px;font-size:10.30px;font-weight:normal;color:#260000;transform-origin:50% 50%;transform:translateX(-50%) scaleX(1.0220) rotate(0.02deg);">2601188</div>
<div class="t" style="left:758.00px;top:332.67px;font-size:10.30px;font-weight:normal;color:#260000;transform-origin:100% 50%;transform:translateX(-100%) scaleX(0.9738) rotate(0.02deg);">1.000</div>
<div class="t" style="left:828.50px;top:332.67px;font-size:10.30px;font-weight:normal;color:#260000;transform-origin:100% 50%;transform:translateX(-100%) scaleX(0.9738) rotate(0.02deg);">1.000</div>
<div class="t" style="left:431.95px;top:354.44px;font-size:10.30px;font-weight:normal;color:#260000;transform-origin:50% 50%;transform:translateX(-50%) scaleX(0.9776) rotate(0.02deg);">38348718</div>
<div class="t" style="left:515.80px;top:354.44px;font-size:10.30px;font-weight:normal;color:#260000;transform-origin:50% 50%;transform:translateX(-50%) scaleX(1.0220) rotate(0.02deg);">2601187</div>
<div class="t" style="left:758.00px;top:354.44px;font-size:10.30px;font-weight:normal;color:#260000;transform-origin:100% 50%;transform:translateX(-100%) scaleX(0.9738) rotate(0.02deg);">1.000</div>
<div class="t" style="left:828.50px;top:354.44px;font-size:10.30px;font-weight:normal;color:#260000;transform-origin:100% 50%;transform:translateX(-100%) scaleX(0.9738) rotate(0.02deg);">1.000</div>
<div class="t" style="left:431.95px;top:376.21px;font-size:10.30px;font-weight:bold;color:#1a1486;transform-origin:50% 50%;transform:translateX(-50%) scaleX(1.0037) rotate(0.02deg);">38348718</div>
<div class="t" style="left:515.80px;top:376.21px;font-size:10.30px;font-weight:bold;color:#1a1486;transform-origin:50% 50%;transform:translateX(-50%) scaleX(1.0371) rotate(0.02deg);">2601186</div>
<div class="t" style="left:758.00px;top:376.21px;font-size:10.30px;font-weight:bold;color:#1a1486;transform-origin:100% 50%;transform:translateX(-100%) scaleX(1.0087) rotate(0.02deg);">1.000</div>
<div class="t" style="left:828.50px;top:376.21px;font-size:10.30px;font-weight:bold;color:#1a1486;transform-origin:100% 50%;transform:translateX(-100%) scaleX(1.0087) rotate(0.02deg);">1.000</div>
<div class="t" style="left:211.40px;top:466.60px;font-size:18.70px;font-weight:bold;color:#000;transform-origin:50% 50%;transform:translateX(-50%) scaleX(0.9986) rotate(0.02deg);">Separacao de Materiais</div>
<div class="t" style="left:72.30px;top:485.20px;font-size:10.30px;font-weight:normal;color:#000;transform-origin:50% 50%;transform:translateX(-50%) scaleX(0.9603) rotate(0.02deg);">Identidade</div>
<div class="t" style="left:177.80px;top:485.20px;font-size:10.30px;font-weight:normal;color:#000;transform-origin:50% 50%;transform:translateX(-50%) scaleX(0.9772) rotate(0.02deg);">Material</div>
<div class="t" style="left:278.90px;top:485.20px;font-size:10.30px;font-weight:normal;color:#000;transform-origin:50% 50%;transform:translateX(-50%) scaleX(0.9727) rotate(0.02deg);">Lote</div>
<div class="t" style="left:478.90px;top:485.20px;font-size:10.30px;font-weight:normal;color:#000;transform-origin:100% 50%;transform:translateX(-100%) scaleX(0.9933) rotate(0.02deg);">Separar</div>
<div class="t" style="left:6.20px;top:539.70px;font-size:10.30px;font-weight:normal;color:#000;transform-origin:0 50%;transform:scaleX(1.0111) rotate(0.02deg);">&Aacute;rea</div>
<div class="t" style="left:10.90px;top:558.20px;font-size:10.30px;font-weight:normal;color:#000;transform-origin:0 50%;transform:scaleX(1.0095) rotate(0.02deg);">Classif</div>
<div class="t" style="left:23.30px;top:575.90px;font-size:10.30px;font-weight:normal;color:#000;transform-origin:0 50%;transform:scaleX(1.0545) rotate(0.02deg);">P. Vert</div>
<div class="t" style="left:32.00px;top:593.00px;font-size:10.30px;font-weight:normal;color:#000;transform-origin:0 50%;transform:scaleX(0.9886) rotate(0.02deg);">P. Horiz</div>
<div class="t" style="left:462.00px;top:537.70px;font-size:10.30px;font-weight:normal;color:#000;transform-origin:50% 50%;transform:translateX(-50%) scaleX(0.9541) rotate(0.02deg);">Bloq.</div>
<div class="t" style="left:677.00px;top:466.00px;font-size:18.70px;font-weight:bold;color:#000;transform-origin:50% 50%;transform:translateX(-50%) scaleX(0.9962) rotate(0.02deg);">Materiais Separados</div>
<div class="t" style="left:516.95px;top:486.30px;font-size:10.30px;font-weight:normal;color:#000;transform-origin:50% 50%;transform:translateX(-50%) scaleX(0.9799) rotate(0.02deg);">Material</div>
<div class="t" style="left:590.85px;top:486.30px;font-size:10.30px;font-weight:normal;color:#000;transform-origin:50% 50%;transform:translateX(-50%) scaleX(0.9665) rotate(0.02deg);">Identidade</div>
<div class="t" style="left:681.40px;top:486.30px;font-size:10.30px;font-weight:normal;color:#000;transform-origin:50% 50%;transform:translateX(-50%) scaleX(0.9727) rotate(0.02deg);">Lote</div>
<div class="t" style="left:772.90px;top:486.30px;font-size:10.30px;font-weight:normal;color:#000;transform-origin:50% 50%;transform:translateX(-50%) scaleX(0.9984) rotate(0.02deg);">Separado</div>
<div class="t" style="left:516.95px;top:503.75px;font-size:10.30px;font-weight:normal;color:#000;transform-origin:50% 50%;transform:translateX(-50%) scaleX(1.0037) rotate(0.02deg);">892726</div>
<div class="t" style="left:590.85px;top:503.75px;font-size:10.30px;font-weight:normal;color:#000;transform-origin:50% 50%;transform:translateX(-50%) scaleX(1.0245) rotate(0.02deg);">2601189</div>
<div class="t" style="left:681.40px;top:503.75px;font-size:10.30px;font-weight:normal;color:#000;transform-origin:50% 50%;transform:translateX(-50%) scaleX(0.9776) rotate(0.02deg);">38348718</div>
<div class="t" style="left:815.40px;top:503.75px;font-size:10.30px;font-weight:normal;color:#000;transform-origin:100% 50%;transform:translateX(-100%) scaleX(0.9738) rotate(0.02deg);">1.000</div>
<div class="t" style="left:516.95px;top:524.05px;font-size:10.30px;font-weight:normal;color:#000;transform-origin:50% 50%;transform:translateX(-50%) scaleX(1.0037) rotate(0.02deg);">892726</div>
<div class="t" style="left:590.85px;top:524.05px;font-size:10.30px;font-weight:normal;color:#000;transform-origin:50% 50%;transform:translateX(-50%) scaleX(1.0245) rotate(0.02deg);">2601188</div>
<div class="t" style="left:681.40px;top:524.05px;font-size:10.30px;font-weight:normal;color:#000;transform-origin:50% 50%;transform:translateX(-50%) scaleX(0.9776) rotate(0.02deg);">38348718</div>
<div class="t" style="left:815.40px;top:524.05px;font-size:10.30px;font-weight:normal;color:#000;transform-origin:100% 50%;transform:translateX(-100%) scaleX(0.9738) rotate(0.02deg);">1.000</div>
<div class="t" style="left:516.95px;top:545.05px;font-size:10.30px;font-weight:normal;color:#000;transform-origin:50% 50%;transform:translateX(-50%) scaleX(1.0037) rotate(0.02deg);">892726</div>
<div class="t" style="left:590.85px;top:545.05px;font-size:10.30px;font-weight:normal;color:#000;transform-origin:50% 50%;transform:translateX(-50%) scaleX(1.0245) rotate(0.02deg);">2601187</div>
<div class="t" style="left:681.40px;top:545.05px;font-size:10.30px;font-weight:normal;color:#000;transform-origin:50% 50%;transform:translateX(-50%) scaleX(0.9776) rotate(0.02deg);">38348718</div>
<div class="t" style="left:815.40px;top:545.05px;font-size:10.30px;font-weight:normal;color:#000;transform-origin:100% 50%;transform:translateX(-100%) scaleX(0.9738) rotate(0.02deg);">1.000</div>
<div class="t" style="left:516.95px;top:565.55px;font-size:10.30px;font-weight:bold;color:#1a1486;transform-origin:50% 50%;transform:translateX(-50%) scaleX(1.0299) rotate(0.02deg);">892726</div>
<div class="t" style="left:590.85px;top:565.55px;font-size:10.30px;font-weight:bold;color:#1a1486;transform-origin:50% 50%;transform:translateX(-50%) scaleX(1.0422) rotate(0.02deg);">2601186</div>
<div class="t" style="left:681.40px;top:565.55px;font-size:10.30px;font-weight:bold;color:#1a1486;transform-origin:50% 50%;transform:translateX(-50%) scaleX(1.0037) rotate(0.02deg);">38348718</div>
<div class="t" style="left:815.40px;top:565.55px;font-size:10.30px;font-weight:bold;color:#1a1486;transform-origin:100% 50%;transform:translateX(-100%) scaleX(1.0087) rotate(0.02deg);">1.000</div>
<div class="t" style="left:491.00px;top:586.70px;font-size:10.30px;font-weight:normal;color:#000;transform-origin:0 50%;transform:scaleX(0.9990) rotate(0.02deg);">Material</div>
<div class="t" style="left:530.20px;top:586.50px;font-size:10.30px;font-weight:bold;color:#1a1486;transform-origin:0 50%;transform:scaleX(0.9990) rotate(0.02deg);">BIOXAN COMPOSTO 500ML</div>
<div class="t" style="left:7.40px;top:670.90px;font-size:11.50px;font-weight:normal;color:#222;transform-origin:0 50%;transform:scaleX(1.0093) rotate(0.02deg);">Record: 1/1</div>
<svg width="1003" height="686" viewBox="0 0 1003 686">
<path d="M813.2 562.6H843.6V585.1H813.2V562.6Z" fill="none" stroke="#ed1c24" stroke-width="4.4"/>
</svg>
</body></html>
